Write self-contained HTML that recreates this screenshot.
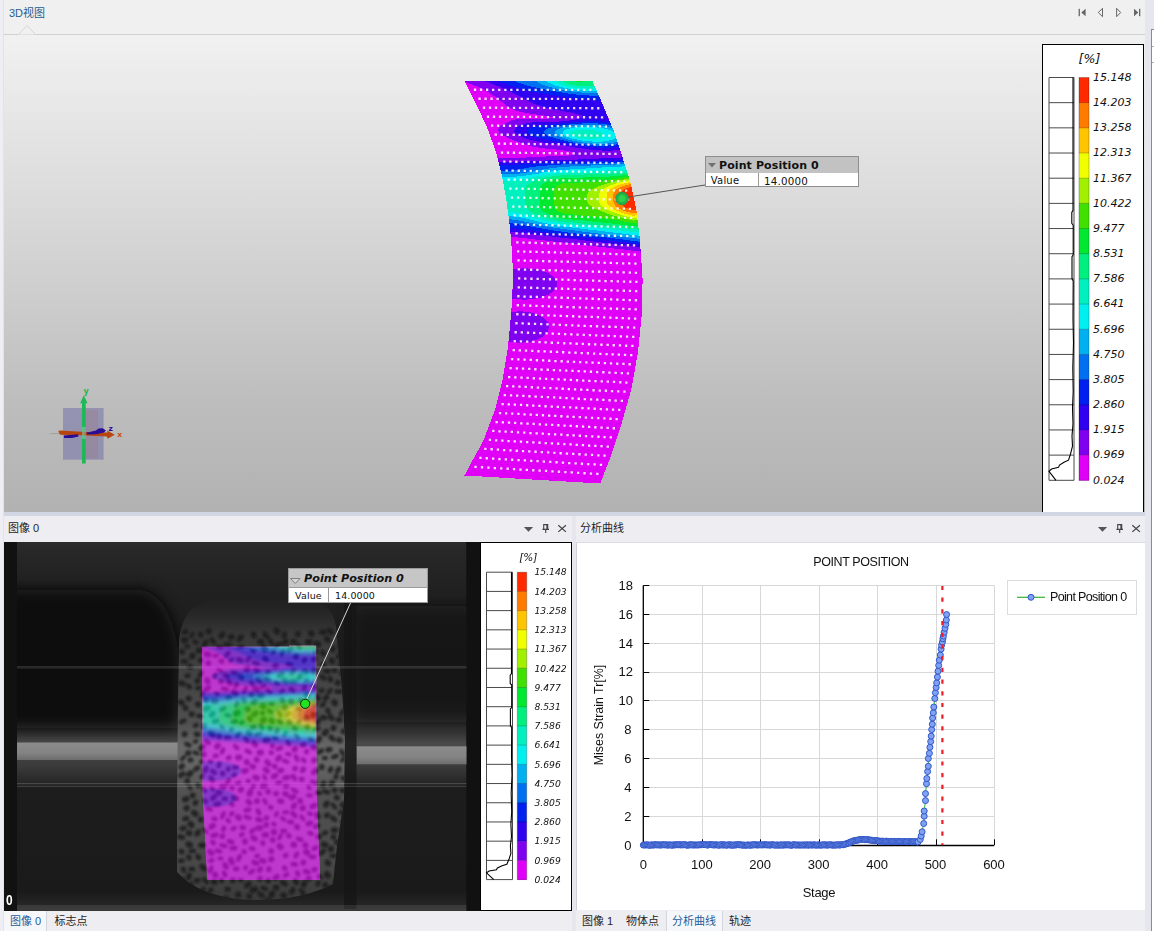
<!DOCTYPE html><html><head><meta charset="utf-8"><title>3D</title><style>

html,body{margin:0;padding:0;}
body{width:1154px;height:931px;overflow:hidden;background:#f0f0f0;font-family:"Liberation Sans","Noto Sans CJK SC",sans-serif;font-size:12px;color:#1e1e1e;}
#root{position:relative;width:1154px;height:931px;overflow:hidden;background:#f0f0f0;}
.abs{position:absolute;}
.t{position:absolute;white-space:nowrap;line-height:1;}
svg{position:absolute;left:0;top:0;overflow:visible;}
.dv{font-family:"DejaVu Sans","Liberation Sans",sans-serif;}

</style></head><body><div id="root">
<div class="abs" style="left:0;top:0;width:4px;height:931px;background:#eeeef4"></div>
<div class="abs" style="left:3px;top:0;width:1px;height:931px;background:#e2e2ea"></div>
<div class="abs" style="left:1145px;top:0;width:9px;height:931px;background:#e6e6ee"></div>
<div class="abs" style="left:1151px;top:29px;width:3px;height:902px;background:#fff;border-left:1px solid #8a8a92;border-top:1px solid #8a8a92"></div>
<div class="abs" style="left:1152px;top:46px;width:2px;height:1px;background:#aaa"></div><div class="abs" style="left:1152px;top:62px;width:2px;height:1px;background:#aaa"></div>
<div class="t" style="left:9px;top:7.5px;font-size:11px;color:#1f5c8f">3D视图</div>
<div class="abs" style="left:4px;top:34px;width:1141px;height:1px;background:#cfd0d4"></div>
<svg width="1154" height="931" viewBox="0 0 1154 931">
<path d="M18.5,34.5 L27,25.5 L35.5,34.5" fill="#f0f0f0" stroke="#d4d6da" stroke-width="1"/>
<g fill="#666" stroke="none"><rect x="1078.6" y="8.8" width="1.3" height="7.4"/><path d="M1081.3,12.5 L1085.6,8.8 V16.2Z"/><path d="M1134,8.8 L1138.3,12.5 L1134,16.2Z"/><rect x="1139" y="8.8" width="1.3" height="7.4"/></g>
<g fill="none" stroke="#666" stroke-width="1"><path d="M1098.3,12.5 L1102.5,8.3 V16.7Z"/><path d="M1120.7,12.5 L1116.6,8.3 V16.7Z"/></g>
</svg>
<div class="abs" style="left:4px;top:35px;width:1141px;height:477px;background:linear-gradient(#f1f1f1,#dcdcdc 33%,#cdcdcd 55%,#bdbdbd 77%,#b2b2b2)"></div>
<div class="abs" style="left:4px;top:512px;width:1141px;height:4px;background:#d2d5e2"></div>
<svg width="1154" height="931" viewBox="0 0 1154 931">
<g shape-rendering="crispEdges">
<path d="M464.4,80.8L478.3,108.3L488.5,130.9L496.4,153.5L502.0,176.0L506.5,200.8L510.0,228.0L512.3,255.0L513.0,280.0L511.2,313.8L507.9,347.6L502.7,378.8L494.9,410.0L483.2,441.2L470.2,464.6L464.5,475.5L600.2,483.5L610.6,456.8L621.0,425.6L631.4,389.2L637.9,352.8L641.8,313.8L642.6,280.0L641.6,264.0L639.6,236.9L636.3,209.9L630.6,182.8L622.7,158.0L613.7,130.9L602.4,103.8L592.3,80.8Z" fill="#e000f8"/>
<path d="M466.3,80.8L468.1,80.8L470.0,80.8L471.8,80.8L473.7,80.8L475.5,80.8L477.4,80.8L479.2,80.8L481.1,80.8L482.9,80.8L484.8,80.8L484.8,80.8L487.1,81.8L489.1,82.6L489.5,82.8L491.8,83.7L493.5,84.4L494.1,84.7L496.4,85.6L498.0,86.2L498.7,86.5L501.0,87.5L502.4,88.0L503.4,88.5L505.7,89.5L506.6,89.9L508.1,90.6L510.4,91.6L510.5,91.7L512.9,92.9L514.2,93.5L515.3,94.1L517.6,95.3L517.8,95.4L520.3,96.8L520.9,97.1L522.8,98.3L524.1,99.0L525.3,99.6L527.5,100.8L527.7,100.9L530.1,102.1L531.4,102.6L532.5,103.1L534.7,104.0L535.9,104.5L536.9,104.8L539.1,105.6L541.2,106.3L541.3,106.3L543.4,106.9L545.5,107.5L547.5,108.0L547.9,108.1L549.6,108.5L551.6,109.0L553.6,109.4L555.6,109.8L556.5,110.0L557.6,110.2L559.6,110.5L561.6,110.9L563.5,111.2L565.5,111.6L566.8,111.9L567.5,112.0L569.5,112.3L571.4,112.6L573.4,113.0L575.4,113.5L576.7,113.7L577.5,113.9L579.5,114.5L581.7,115.3L582.3,115.6L582.1,116.4L582.1,117.4L580.9,117.7L579.3,118.3L577.8,119.0L577.3,119.2L576.1,119.4L574.4,119.7L572.7,119.9L571.0,120.2L569.3,120.5L567.6,120.8L566.3,121.0L565.9,121.0L564.1,121.2L562.4,121.3L560.6,121.4L558.8,121.5L557.1,121.6L555.3,121.7L553.5,121.8L551.7,121.9L549.9,121.9L548.1,122.0L546.3,122.0L544.5,122.0L542.7,122.0L540.9,122.1L539.1,122.1L537.3,122.2L535.5,122.2L533.7,122.4L532.0,122.5L531.4,122.6L530.3,122.7L528.5,123.0L526.9,123.3L525.2,123.6L523.6,124.1L522.9,124.3L522.0,124.6L520.4,125.2L518.9,125.9L518.5,126.1L517.5,126.7L516.1,127.6L515.7,127.9L514.9,129.0L514.4,129.7L514.5,131.5L515.8,133.3L516.8,134.0L518.3,135.1L519.1,135.5L521.3,136.6L522.1,137.0L523.4,137.5L525.5,138.3L527.0,138.8L527.6,139.0L529.6,139.6L531.6,140.2L533.6,140.7L533.6,140.7L535.6,141.2L537.5,141.6L539.5,142.0L541.4,142.3L543.1,142.6L543.3,142.6L545.2,142.9L547.1,143.2L549.0,143.5L550.9,143.7L552.8,144.0L554.7,144.2L556.6,144.5L557.1,144.5L558.5,144.8L560.4,145.1L562.4,145.4L564.3,145.7L566.2,146.0L568.1,146.3L569.6,146.5L570.0,146.6L571.9,146.9L573.9,147.2L575.8,147.6L577.7,147.9L579.6,148.1L581.5,148.4L581.8,148.4L583.4,148.7L585.3,149.0L587.2,149.3L589.1,149.5L591.0,149.7L592.9,149.9L594.7,150.1L596.6,150.2L598.4,150.3L600.3,150.4L602.1,150.5L602.2,150.5L603.9,150.5L605.8,150.6L607.6,150.6L609.4,150.6L610.1,150.6L611.2,150.5L613.0,150.5L614.8,150.4L616.5,150.3L618.3,150.2L620.1,150.1L620.3,150.7L620.9,152.5L621.5,154.4L622.1,156.2L622.5,157.4L620.7,157.5L619.0,157.6L617.2,157.7L615.4,157.9L614.5,157.9L613.6,158.0L611.8,158.0L610.0,158.1L608.2,158.1L606.5,158.2L604.7,158.3L602.9,158.4L601.1,158.4L599.3,158.5L597.5,158.6L595.7,158.7L593.9,158.8L592.1,158.9L590.3,158.9L588.6,159.0L586.8,159.1L585.0,159.2L583.2,159.3L582.2,159.4L581.4,159.4L579.6,159.4L577.8,159.5L576.0,159.5L574.2,159.6L572.4,159.6L570.6,159.7L568.8,159.7L567.0,159.8L565.2,159.8L563.4,159.9L561.6,159.9L559.8,160.0L558.0,160.0L556.2,160.1L554.4,160.1L552.6,160.2L550.8,160.3L549.0,160.3L547.2,160.4L545.4,160.5L543.6,160.6L542.0,160.7L541.8,160.7L540.0,160.7L538.2,160.8L536.4,160.9L534.6,161.0L532.8,161.1L531.0,161.1L529.2,161.2L527.4,161.3L525.6,161.4L523.8,161.4L522.0,161.5L520.2,161.6L518.4,161.6L516.6,161.7L514.8,161.7L513.0,161.8L511.2,161.8L509.4,161.8L507.6,161.8L505.8,161.9L503.9,161.9L502.1,161.9L500.6,161.9L500.3,161.9L498.5,161.9L498.5,161.9L498.0,160.1L497.6,158.4L499.4,158.4L501.2,158.4L503.1,158.4L503.4,158.4L504.9,158.3L506.7,158.3L508.5,158.3L510.3,158.2L512.1,158.2L513.9,158.1L515.7,158.0L517.5,158.0L519.3,157.9L521.1,157.8L522.9,157.7L524.6,157.6L526.4,157.5L528.2,157.4L530.0,157.3L531.8,157.2L533.6,157.1L535.4,157.0L536.8,157.0L537.2,157.0L539.0,156.8L540.7,156.7L542.5,156.6L544.3,156.6L546.1,156.5L547.9,156.4L549.7,156.4L551.5,156.3L553.3,156.2L555.1,156.2L556.9,156.1L558.7,156.1L560.5,156.0L562.3,155.9L564.0,155.8L565.8,155.7L567.6,155.6L568.6,155.6L569.3,155.4L571.0,155.1L572.7,154.7L574.4,154.2L575.6,153.8L574.0,153.0L572.2,152.0L571.8,151.9L569.9,151.5L568.0,151.2L566.0,150.8L564.1,150.5L562.2,150.2L561.1,150.0L560.3,149.9L558.4,149.7L556.5,149.6L554.7,149.4L552.8,149.2L550.9,149.0L549.1,148.9L547.2,148.7L545.3,148.5L543.4,148.2L541.5,148.0L541.5,148.0L539.6,147.8L537.7,147.5L535.8,147.2L533.9,146.8L531.9,146.4L530.8,146.1L529.9,145.9L527.9,145.3L525.9,144.7L524.4,144.2L523.9,144.0L521.8,143.3L519.7,142.5L519.2,142.3L517.7,141.8L515.6,141.0L514.3,140.5L513.5,140.2L511.4,139.4L509.7,138.6L509.3,138.5L507.1,137.5L505.6,136.8L504.9,136.5L502.7,135.2L502.3,135.0L500.3,133.4L499.9,133.2L498.5,131.3L498.2,129.5L498.5,128.8L498.9,127.7L499.5,127.1L500.7,126.0L500.8,125.9L502.2,124.9L503.4,124.2L503.6,124.1L505.1,123.3L506.6,122.6L506.9,122.4L508.0,121.8L509.6,121.2L511.1,120.6L511.1,120.6L512.7,120.1L514.4,119.7L516.0,119.3L517.8,119.1L519.5,118.9L520.0,118.9L521.2,118.8L523.0,118.7L524.8,118.6L526.6,118.5L528.4,118.5L530.2,118.5L532.1,118.5L533.9,118.5L535.7,118.5L537.5,118.6L539.4,118.6L541.2,118.6L543.0,118.6L544.8,118.6L546.6,118.6L548.4,118.5L550.2,118.3L551.8,117.9L553.4,117.4L553.8,117.3L553.3,117.2L551.4,116.8L549.4,116.5L547.4,116.1L545.4,115.8L543.7,115.4L543.4,115.4L541.5,115.1L539.6,114.9L537.7,114.7L535.7,114.4L533.8,114.2L531.9,113.9L529.9,113.6L529.5,113.5L527.9,113.3L526.0,112.9L524.0,112.6L522.0,112.2L520.0,111.8L519.1,111.6L518.0,111.3L515.9,110.7L513.7,110.0L513.1,109.8L511.4,108.9L509.6,108.0L508.9,107.5L507.1,106.2L506.0,105.3L504.9,104.3L503.0,102.8L502.6,102.5L500.3,100.7L500.0,100.5L497.9,98.9L497.1,98.3L495.5,97.1L494.2,96.2L493.0,95.3L491.4,94.2L490.3,93.5L488.7,92.4L487.5,91.6L486.1,90.9L484.2,89.8L483.6,89.5L481.1,88.3L480.5,88.0L478.8,87.3L476.4,86.2L476.4,86.2L474.1,85.4L471.8,84.4L471.8,84.4L469.5,83.5L467.2,82.6L467.2,82.6L464.9,81.7L464.4,80.8ZM512.2,231.7L514.1,231.9L516.0,232.2L517.8,232.4L517.8,232.4L519.7,232.6L521.6,232.8L523.5,233.1L525.4,233.3L527.3,233.5L529.2,233.7L531.0,234.0L532.9,234.2L534.8,234.4L536.7,234.6L536.9,234.6L538.6,234.8L540.5,235.1L542.4,235.3L544.3,235.6L546.1,235.8L548.0,236.0L549.9,236.2L551.8,236.5L553.7,236.7L555.5,236.9L555.6,236.9L557.5,237.1L559.3,237.4L561.2,237.6L563.1,237.8L565.0,238.1L566.9,238.3L568.8,238.5L570.6,238.7L572.5,239.0L574.4,239.2L574.4,239.2L576.3,239.4L578.2,239.7L580.1,239.9L582.0,240.1L583.8,240.3L585.7,240.6L587.6,240.8L589.5,241.0L591.4,241.2L593.3,241.4L593.3,241.5L595.1,241.7L597.0,241.9L598.9,242.2L600.8,242.4L602.7,242.6L604.6,242.9L606.5,243.1L608.3,243.3L610.2,243.5L612.1,243.7L612.2,243.8L614.0,244.0L615.9,244.2L617.8,244.5L619.6,244.7L621.5,244.9L623.4,245.2L625.3,245.4L627.2,245.6L629.1,245.8L630.9,246.0L631.1,246.1L632.8,246.3L634.7,246.5L636.6,246.8L638.5,247.0L640.4,247.2L640.4,248.1L640.6,250.0L640.7,251.6L638.8,251.4L636.9,251.2L635.0,251.0L633.2,250.7L631.3,250.5L629.4,250.3L627.5,250.0L625.6,249.8L623.7,249.5L623.7,249.5L621.9,249.3L620.0,249.1L618.1,248.9L616.2,248.7L614.3,248.5L612.5,248.3L610.6,248.1L608.7,247.9L606.8,247.6L604.9,247.4L603.5,247.2L603.0,247.1L601.2,246.9L599.3,246.7L597.4,246.5L595.5,246.3L593.6,246.1L591.7,245.9L589.9,245.7L588.0,245.5L586.1,245.2L584.2,245.0L583.2,244.8L582.3,244.7L580.4,244.6L578.6,244.4L576.7,244.2L574.8,244.0L572.9,243.7L571.0,243.5L569.1,243.3L567.3,243.1L565.4,242.8L563.5,242.6L562.8,242.5L561.6,242.4L559.7,242.2L557.8,242.0L556.0,241.8L554.1,241.6L552.2,241.4L550.3,241.2L548.4,240.9L546.5,240.7L544.7,240.5L542.8,240.2L542.3,240.2L540.9,240.0L539.0,239.8L537.1,239.7L535.2,239.5L533.4,239.2L531.5,239.0L529.6,238.8L527.7,238.6L525.8,238.4L523.9,238.1L522.0,237.9L521.8,237.9L520.2,237.7L518.3,237.5L516.4,237.3L514.5,237.1L512.6,236.9L510.7,236.7L510.7,235.8L510.5,234.0L510.4,232.2L510.3,231.5ZM522.0,268.4L523.9,268.4L525.8,268.4L527.7,268.5L529.5,268.6L531.0,268.8L531.4,268.8L533.3,269.0L535.2,269.3L537.1,269.7L539.0,270.1L540.9,270.6L542.1,270.9L542.8,271.1L544.7,271.8L546.6,272.5L547.3,272.9L548.5,273.4L550.4,274.5L550.9,274.8L552.3,275.8L553.5,276.7L554.2,277.5L555.3,278.5L556.2,279.9L556.5,280.4L557.2,282.2L557.4,284.1L557.1,285.9L556.4,287.7L555.9,288.6L555.3,289.4L553.9,290.9L553.6,291.2L551.9,292.5L551.3,292.9L550.0,293.8L548.3,294.7L548.0,294.8L546.1,295.6L544.3,296.3L544.2,296.4L542.3,297.0L540.4,297.6L538.7,298.0L538.5,298.0L536.6,298.4L534.7,298.8L532.8,299.0L530.9,299.2L529.0,299.4L528.4,299.4L527.1,299.5L525.2,299.6L523.3,299.6L521.4,299.5L519.5,299.4L517.6,299.3L515.8,299.1L514.9,299.0L513.9,298.8L512.0,298.5L512.1,297.1L512.2,295.3L512.3,293.5L512.4,291.7L512.5,289.9L512.6,288.1L512.7,286.3L512.8,284.5L512.9,282.7L513.0,280.9L513.0,279.1L512.9,277.2L512.9,275.4L512.8,273.6L512.8,271.8L512.7,270.0L512.7,269.3L514.6,269.1L516.4,268.8L518.3,268.7L520.2,268.5L521.2,268.5ZM517.0,311.5L518.9,311.4L520.8,311.4L522.7,311.5L524.6,311.6L526.4,311.8L528.3,312.1L528.5,312.1L530.2,312.4L532.0,312.8L533.9,313.3L535.8,313.9L536.5,314.2L537.6,314.6L539.4,315.5L540.8,316.2L541.2,316.4L543.0,317.6L543.7,318.1L544.8,319.0L545.8,320.0L546.5,320.8L547.3,321.9L548.1,323.4L548.3,323.7L548.8,325.6L548.9,327.4L548.6,329.2L548.0,331.0L547.2,332.2L546.9,332.8L545.3,334.5L545.1,334.7L543.2,336.3L543.0,336.4L541.0,337.7L540.5,338.0L539.0,338.7L537.1,339.6L536.9,339.7L535.1,340.3L533.1,340.9L531.6,341.3L531.2,341.4L529.3,341.8L527.4,342.1L525.4,342.3L523.5,342.5L521.6,342.5L519.7,342.6L518.8,342.6L517.9,342.5L516.9,342.5L516.0,342.4L514.1,342.2L512.2,342.0L510.4,341.7L508.5,341.3L508.6,340.3L508.8,338.5L509.0,336.7L509.1,334.9L509.3,333.1L509.5,331.3L509.7,329.5L509.8,327.7L510.0,325.9L510.2,324.1L510.4,322.3L510.5,320.5L510.7,318.7L510.9,316.9L511.1,315.1L511.2,313.3L511.3,312.2L513.2,311.9L515.1,311.7L515.3,311.6Z" fill="#8000f0"/>
<path d="M486.6,80.8L488.5,80.8L490.4,80.8L492.2,80.8L494.1,80.8L495.9,80.8L497.8,80.8L498.7,80.8L499.9,81.3L502.3,82.5L502.5,82.6L504.6,83.5L506.9,84.4L507.0,84.4L509.2,85.2L511.4,86.0L512.1,86.2L513.6,86.7L515.8,87.4L517.9,88.0L518.0,88.1L520.1,88.6L522.2,89.2L524.2,89.7L525.1,89.9L526.3,90.2L528.4,90.7L530.5,91.1L532.5,91.5L533.5,91.7L534.5,91.9L536.6,92.4L538.6,92.7L540.6,93.1L542.6,93.4L543.6,93.6L544.6,93.8L546.6,94.1L548.6,94.5L550.6,94.8L552.6,95.1L554.5,95.3L555.2,95.4L556.5,95.6L558.5,96.0L560.5,96.3L562.4,96.5L564.4,96.8L566.3,97.0L568.3,97.2L568.5,97.3L570.2,97.5L572.2,97.8L574.1,98.0L576.1,98.3L578.0,98.5L579.9,98.6L581.8,98.8L583.7,98.9L585.6,99.1L586.8,99.1L587.5,99.2L589.4,99.4L591.3,99.5L593.2,99.6L595.1,99.6L596.9,99.7L598.8,99.7L600.6,99.7L601.2,101.0L602.0,102.9L602.8,104.7L603.5,106.5L604.3,108.4L605.1,110.2L605.8,112.1L606.6,113.9L607.4,115.7L608.1,117.6L608.9,119.4L609.7,121.3L610.3,122.7L608.3,122.4L606.4,122.1L604.5,121.8L602.6,121.6L600.7,121.5L598.8,121.3L596.9,121.3L595.1,121.2L593.3,121.2L591.5,121.2L589.6,121.2L587.8,121.3L586.1,121.3L584.3,121.4L582.5,121.5L580.7,121.7L579.0,121.8L577.2,122.0L575.5,122.1L573.7,122.3L572.0,122.5L570.2,122.7L568.7,122.8L568.5,122.8L566.8,123.0L565.0,123.2L563.3,123.3L561.5,123.5L559.8,123.7L558.0,123.9L556.3,124.0L554.5,124.2L552.8,124.4L551.3,124.5L551.1,124.5L549.3,124.7L547.6,124.9L545.8,125.1L544.1,125.2L542.4,125.4L540.6,125.6L538.9,125.8L537.2,126.1L536.4,126.2L535.5,126.4L533.9,126.8L532.3,127.2L530.7,127.8L530.0,128.0L529.2,128.5L527.8,129.5L527.4,129.8L526.9,131.6L528.2,133.4L529.6,134.2L531.2,135.2L531.8,135.5L533.9,136.3L535.9,137.0L536.2,137.1L537.9,137.5L539.9,138.0L541.9,138.5L543.9,138.9L544.1,139.0L545.8,139.3L547.7,139.7L549.7,140.0L551.6,140.4L553.5,140.8L554.2,140.9L555.5,141.1L557.4,141.5L559.4,141.9L561.3,142.3L563.2,142.6L564.1,142.8L565.2,143.0L567.1,143.4L569.1,143.8L571.0,144.2L572.9,144.5L574.2,144.7L574.9,144.8L576.8,145.2L578.7,145.5L580.6,145.8L582.5,146.1L584.4,146.4L586.3,146.6L587.0,146.7L588.2,146.8L590.1,147.0L592.0,147.2L593.8,147.4L595.7,147.5L597.5,147.6L599.4,147.7L601.2,147.8L603.0,147.8L604.8,147.8L606.6,147.7L608.4,147.7L610.2,147.6L612.0,147.5L613.7,147.3L615.5,147.1L616.4,147.0L617.2,146.9L618.9,146.6L619.0,147.0L619.7,148.8L620.1,150.1L618.3,150.2L616.5,150.3L614.8,150.4L613.0,150.5L611.2,150.5L610.1,150.6L609.4,150.6L607.6,150.6L605.8,150.6L603.9,150.5L602.2,150.5L602.1,150.5L600.3,150.4L598.4,150.3L596.6,150.2L594.7,150.1L592.9,149.9L591.0,149.7L589.1,149.5L587.2,149.3L585.3,149.0L583.4,148.7L581.8,148.4L581.5,148.4L579.6,148.1L577.7,147.9L575.8,147.6L573.9,147.2L571.9,146.9L570.0,146.6L569.6,146.5L568.1,146.3L566.2,146.0L564.3,145.7L562.4,145.4L560.4,145.1L558.5,144.8L557.1,144.5L556.6,144.5L554.7,144.2L552.8,144.0L550.9,143.7L549.0,143.5L547.1,143.2L545.2,142.9L543.3,142.6L543.1,142.6L541.4,142.3L539.5,142.0L537.5,141.6L535.6,141.2L533.6,140.7L533.6,140.7L531.6,140.2L529.6,139.6L527.6,139.0L527.0,138.8L525.5,138.3L523.4,137.5L522.1,137.0L521.3,136.6L519.1,135.5L518.3,135.1L516.8,134.0L515.8,133.3L514.5,131.5L514.4,129.7L514.9,129.0L515.7,127.9L516.1,127.6L517.5,126.7L518.5,126.1L518.9,125.9L520.4,125.2L522.0,124.6L522.9,124.3L523.6,124.1L525.2,123.6L526.9,123.3L528.5,123.0L530.3,122.7L531.4,122.6L532.0,122.5L533.7,122.4L535.5,122.2L537.3,122.2L539.1,122.1L540.9,122.1L542.7,122.0L544.5,122.0L546.3,122.0L548.1,122.0L549.9,121.9L551.7,121.9L553.5,121.8L555.3,121.7L557.1,121.6L558.8,121.5L560.6,121.4L562.4,121.3L564.1,121.2L565.9,121.0L566.3,121.0L567.6,120.8L569.3,120.5L571.0,120.2L572.7,119.9L574.4,119.7L576.1,119.4L577.3,119.2L577.8,119.0L579.3,118.3L580.9,117.7L582.1,117.4L582.1,116.4L582.3,115.6L581.7,115.3L579.5,114.5L577.5,113.9L576.7,113.7L575.4,113.5L573.4,113.0L571.4,112.6L569.5,112.3L567.5,112.0L566.8,111.9L565.5,111.6L563.5,111.2L561.6,110.9L559.6,110.5L557.6,110.2L556.5,110.0L555.6,109.8L553.6,109.4L551.6,109.0L549.6,108.5L547.9,108.1L547.5,108.0L545.5,107.5L543.4,106.9L541.3,106.3L541.2,106.3L539.1,105.6L536.9,104.8L535.9,104.5L534.7,104.0L532.5,103.1L531.4,102.6L530.1,102.1L527.7,100.9L527.5,100.8L525.3,99.6L524.1,99.0L522.8,98.3L520.9,97.1L520.3,96.8L517.8,95.4L517.6,95.3L515.3,94.1L514.2,93.5L512.9,92.9L510.5,91.7L510.4,91.6L508.1,90.6L506.6,89.9L505.7,89.5L503.4,88.5L502.4,88.0L501.0,87.5L498.7,86.5L498.0,86.2L496.4,85.6L494.1,84.7L493.5,84.4L491.8,83.7L489.5,82.8L489.1,82.6L487.1,81.8L484.8,80.8ZM615.4,157.9L617.2,157.7L619.0,157.6L620.7,157.5L622.5,157.4L622.7,158.0L623.3,159.9L623.4,160.3L621.6,160.3L619.8,160.4L618.0,160.5L616.2,160.5L614.4,160.6L612.6,160.6L610.9,160.7L609.1,160.8L607.3,160.8L605.5,160.9L603.7,161.0L601.9,161.0L600.1,161.1L598.3,161.2L596.5,161.2L594.7,161.3L594.0,161.3L592.9,161.4L591.1,161.4L589.3,161.5L587.5,161.5L585.7,161.6L583.9,161.6L582.1,161.7L580.3,161.7L578.5,161.8L576.7,161.9L574.9,161.9L573.1,162.0L571.3,162.0L569.5,162.1L567.7,162.1L565.9,162.2L564.1,162.2L562.3,162.3L560.5,162.4L558.7,162.4L556.9,162.5L555.1,162.6L554.1,162.6L553.3,162.7L551.5,162.7L549.7,162.8L547.9,162.9L546.1,163.0L544.3,163.1L542.5,163.2L540.7,163.3L538.9,163.4L537.1,163.5L535.3,163.6L533.5,163.7L531.7,163.8L529.9,163.9L528.2,164.0L526.4,164.1L526.2,164.1L524.6,164.2L522.8,164.3L521.0,164.4L519.2,164.4L517.4,164.5L515.6,164.6L513.8,164.7L512.0,164.7L510.1,164.8L508.3,164.8L506.5,164.9L504.7,164.9L502.9,165.0L501.1,165.0L499.3,165.1L498.9,163.7L498.5,161.9L500.3,161.9L500.6,161.9L502.1,161.9L503.9,161.9L505.8,161.9L507.6,161.8L509.4,161.8L511.2,161.8L513.0,161.8L514.8,161.7L516.6,161.7L518.4,161.6L520.2,161.6L522.0,161.5L523.8,161.4L525.6,161.4L527.4,161.3L529.2,161.2L531.0,161.1L532.8,161.1L534.6,161.0L536.4,160.9L538.2,160.8L540.0,160.7L541.8,160.7L542.0,160.7L543.6,160.6L545.4,160.5L547.2,160.4L549.0,160.3L550.8,160.3L552.6,160.2L554.4,160.1L556.2,160.1L558.0,160.0L559.8,160.0L561.6,159.9L563.4,159.9L565.2,159.8L567.0,159.8L568.8,159.7L570.6,159.7L572.4,159.6L574.2,159.6L576.0,159.5L577.8,159.5L579.6,159.4L581.4,159.4L582.2,159.4L583.2,159.3L585.0,159.2L586.8,159.1L588.6,159.0L590.3,158.9L592.1,158.9L593.9,158.8L595.7,158.7L597.5,158.6L599.3,158.5L601.1,158.4L602.9,158.4L604.7,158.3L606.5,158.2L608.2,158.1L610.0,158.1L611.8,158.0L613.6,158.0L614.5,157.9ZM511.8,227.7L513.7,228.0L515.6,228.2L517.5,228.4L519.4,228.7L520.3,228.8L521.3,229.0L523.2,229.2L525.0,229.5L526.9,229.7L528.8,230.0L530.7,230.2L532.6,230.5L534.5,230.8L536.1,231.0L536.4,231.0L538.3,231.3L540.2,231.6L542.0,231.8L543.9,232.1L545.8,232.3L547.7,232.6L549.6,232.9L551.5,233.1L551.9,233.2L553.4,233.4L555.3,233.6L557.2,233.9L559.1,234.1L561.0,234.4L562.8,234.6L564.7,234.9L566.6,235.1L568.5,235.4L568.9,235.4L570.4,235.6L572.3,235.8L574.2,236.1L576.1,236.3L577.9,236.6L579.8,236.8L581.7,237.0L583.6,237.3L585.5,237.5L586.7,237.6L587.4,237.7L589.3,238.0L591.1,238.2L593.0,238.5L594.9,238.7L596.8,238.9L598.7,239.2L600.6,239.4L602.5,239.6L604.3,239.9L604.7,239.9L606.2,240.1L608.1,240.3L610.0,240.6L611.9,240.8L613.8,241.1L615.7,241.3L617.5,241.5L619.4,241.8L621.3,242.0L622.9,242.2L623.2,242.2L625.1,242.5L627.0,242.7L628.8,242.9L630.7,243.2L632.6,243.4L634.5,243.6L636.4,243.9L638.3,244.1L640.1,244.3L640.2,244.5L640.3,246.3L640.4,247.2L638.5,247.0L636.6,246.8L634.7,246.5L632.8,246.3L631.1,246.1L630.9,246.0L629.1,245.8L627.2,245.6L625.3,245.4L623.4,245.2L621.5,244.9L619.6,244.7L617.8,244.5L615.9,244.2L614.0,244.0L612.2,243.8L612.1,243.7L610.2,243.5L608.3,243.3L606.5,243.1L604.6,242.9L602.7,242.6L600.8,242.4L598.9,242.2L597.0,241.9L595.1,241.7L593.3,241.5L593.3,241.4L591.4,241.2L589.5,241.0L587.6,240.8L585.7,240.6L583.8,240.3L582.0,240.1L580.1,239.9L578.2,239.7L576.3,239.4L574.4,239.2L574.4,239.2L572.5,239.0L570.6,238.7L568.8,238.5L566.9,238.3L565.0,238.1L563.1,237.8L561.2,237.6L559.3,237.4L557.5,237.1L555.6,236.9L555.5,236.9L553.7,236.7L551.8,236.5L549.9,236.2L548.0,236.0L546.1,235.8L544.3,235.6L542.4,235.3L540.5,235.1L538.6,234.8L536.9,234.6L536.7,234.6L534.8,234.4L532.9,234.2L531.0,234.0L529.2,233.7L527.3,233.5L525.4,233.3L523.5,233.1L521.6,232.8L519.7,232.6L517.8,232.4L517.8,232.4L516.0,232.2L514.1,231.9L512.2,231.7L510.3,231.5L510.2,230.4L510.1,228.6L509.9,227.5Z" fill="#3000f0"/>
<path d="M499.6,80.8L501.5,80.8L503.3,80.8L505.2,80.8L507.0,80.8L508.9,80.8L510.7,80.8L512.6,80.8L514.4,80.8L514.7,80.8L516.8,81.9L518.2,82.6L519.2,83.0L521.4,83.8L523.3,84.4L523.6,84.5L525.8,85.1L527.9,85.7L530.0,86.2L530.1,86.3L532.1,86.7L534.1,87.2L536.2,87.6L538.2,88.1L538.3,88.1L540.3,88.5L542.3,88.9L544.4,89.3L546.4,89.7L547.4,89.9L548.4,90.1L550.5,90.5L552.5,90.9L554.5,91.2L556.5,91.6L557.6,91.8L558.5,91.9L560.5,92.3L562.5,92.6L564.5,92.9L566.4,93.2L568.4,93.5L569.7,93.6L570.4,93.7L572.3,94.0L574.3,94.2L576.2,94.5L578.2,94.7L580.1,94.9L582.0,95.0L583.9,95.2L585.8,95.3L587.7,95.4L589.5,95.5L589.6,95.5L591.4,95.6L593.3,95.6L595.1,95.6L597.0,95.6L598.8,95.6L599.6,97.3L600.4,99.2L600.6,99.7L598.8,99.7L596.9,99.7L595.1,99.6L593.2,99.6L591.3,99.5L589.4,99.4L587.5,99.2L586.8,99.1L585.6,99.1L583.7,98.9L581.8,98.8L579.9,98.6L578.0,98.5L576.1,98.3L574.1,98.0L572.2,97.8L570.2,97.5L568.5,97.3L568.3,97.2L566.3,97.0L564.4,96.8L562.4,96.5L560.5,96.3L558.5,96.0L556.5,95.6L555.2,95.4L554.5,95.3L552.6,95.1L550.6,94.8L548.6,94.5L546.6,94.1L544.6,93.8L543.6,93.6L542.6,93.4L540.6,93.1L538.6,92.7L536.6,92.4L534.5,91.9L533.5,91.7L532.5,91.5L530.5,91.1L528.4,90.7L526.3,90.2L525.1,89.9L524.2,89.7L522.2,89.2L520.1,88.6L518.0,88.1L517.9,88.0L515.8,87.4L513.6,86.7L512.1,86.2L511.4,86.0L509.2,85.2L507.0,84.4L506.9,84.4L504.6,83.5L502.5,82.6L502.3,82.5L499.9,81.3L498.7,80.8ZM570.2,122.7L572.0,122.5L573.7,122.3L575.5,122.1L577.2,122.0L579.0,121.8L580.7,121.7L582.5,121.5L584.3,121.4L586.1,121.3L587.8,121.3L589.6,121.2L591.5,121.2L593.3,121.2L595.1,121.2L596.9,121.3L598.8,121.3L600.7,121.5L602.6,121.6L604.5,121.8L606.4,122.1L608.3,122.4L610.3,122.7L610.4,123.1L611.2,124.9L611.4,125.5L609.4,125.1L608.7,124.9L607.5,124.7L605.5,124.3L603.6,124.1L601.7,123.8L599.8,123.7L597.9,123.5L596.0,123.4L594.2,123.3L592.3,123.3L590.5,123.2L588.7,123.3L586.9,123.3L585.1,123.3L583.3,123.4L581.5,123.5L579.7,123.6L578.0,123.7L576.2,123.9L574.5,124.0L572.7,124.2L571.0,124.4L569.2,124.5L568.5,124.6L567.5,124.8L565.8,125.0L564.1,125.2L562.4,125.5L560.7,125.7L559.0,126.0L557.3,126.3L556.9,126.4L555.6,126.6L553.9,127.0L552.3,127.4L550.7,127.8L549.4,128.1L549.0,128.3L547.5,128.9L546.0,129.6L545.2,129.9L544.6,130.7L543.9,131.7L544.6,133.5L546.0,134.5L547.1,135.4L548.2,135.8L550.3,136.6L551.7,137.2L552.4,137.4L554.4,138.0L556.4,138.6L558.1,139.1L558.4,139.2L560.4,139.7L562.4,140.2L564.4,140.7L565.8,141.0L566.4,141.1L568.3,141.6L570.3,142.0L572.2,142.4L574.2,142.7L574.9,142.9L576.1,143.1L578.0,143.5L579.9,143.8L581.9,144.1L583.8,144.4L585.7,144.6L587.5,144.8L587.6,144.8L589.4,145.1L591.3,145.2L593.2,145.4L595.0,145.5L596.9,145.6L598.7,145.7L600.5,145.7L602.3,145.7L604.1,145.7L605.9,145.6L607.7,145.5L609.5,145.4L611.2,145.2L612.5,145.1L613.0,145.0L614.7,144.8L616.4,144.5L618.1,144.1L618.4,145.2L618.9,146.6L617.2,146.9L616.4,147.0L615.5,147.1L613.7,147.3L612.0,147.5L610.2,147.6L608.4,147.7L606.6,147.7L604.8,147.8L603.0,147.8L601.2,147.8L599.4,147.7L597.5,147.6L595.7,147.5L593.8,147.4L592.0,147.2L590.1,147.0L588.2,146.8L587.0,146.7L586.3,146.6L584.4,146.4L582.5,146.1L580.6,145.8L578.7,145.5L576.8,145.2L574.9,144.8L574.2,144.7L572.9,144.5L571.0,144.2L569.1,143.8L567.1,143.4L565.2,143.0L564.1,142.8L563.2,142.6L561.3,142.3L559.4,141.9L557.4,141.5L555.5,141.1L554.2,140.9L553.5,140.8L551.6,140.4L549.7,140.0L547.7,139.7L545.8,139.3L544.1,139.0L543.9,138.9L541.9,138.5L539.9,138.0L537.9,137.5L536.2,137.1L535.9,137.0L533.9,136.3L531.8,135.5L531.2,135.2L529.6,134.2L528.2,133.4L526.9,131.6L527.4,129.8L527.8,129.5L529.2,128.5L530.0,128.0L530.7,127.8L532.3,127.2L533.9,126.8L535.5,126.4L536.4,126.2L537.2,126.1L538.9,125.8L540.6,125.6L542.4,125.4L544.1,125.2L545.8,125.1L547.6,124.9L549.3,124.7L551.1,124.5L551.3,124.5L552.8,124.4L554.5,124.2L556.3,124.0L558.0,123.9L559.8,123.7L561.5,123.5L563.3,123.3L565.0,123.2L566.8,123.0L568.5,122.8L568.7,122.8ZM594.7,161.3L596.5,161.2L598.3,161.2L600.1,161.1L601.9,161.0L603.7,161.0L605.5,160.9L607.3,160.8L609.1,160.8L610.9,160.7L612.6,160.6L614.4,160.6L616.2,160.5L618.0,160.5L619.8,160.4L621.6,160.3L623.4,160.3L623.9,161.7L624.1,162.2L622.3,162.3L620.5,162.4L618.7,162.4L616.9,162.5L615.1,162.5L613.3,162.6L611.5,162.7L609.7,162.7L607.9,162.8L606.1,162.8L604.3,162.9L602.5,163.0L600.7,163.0L598.9,163.1L597.1,163.2L596.4,163.2L595.3,163.2L593.5,163.3L591.7,163.4L589.9,163.4L588.1,163.5L586.3,163.5L584.5,163.6L582.7,163.7L580.9,163.7L579.1,163.8L577.3,163.9L575.5,163.9L573.7,164.0L571.9,164.1L570.1,164.1L568.3,164.2L566.5,164.3L564.7,164.3L562.9,164.4L561.1,164.5L560.3,164.5L559.3,164.6L557.5,164.7L555.7,164.8L553.9,164.9L552.1,165.0L550.3,165.2L548.6,165.3L546.8,165.5L545.0,165.6L543.2,165.8L541.4,165.9L539.8,166.1L539.6,166.1L537.9,166.3L536.1,166.5L534.4,166.8L532.6,167.0L530.8,167.3L529.1,167.5L527.8,167.7L527.3,167.8L525.6,168.1L523.9,168.5L522.1,168.8L520.4,169.2L519.3,169.4L518.7,169.5L516.9,169.7L515.1,170.0L513.4,170.2L511.6,170.4L509.8,170.6L508.0,170.8L506.8,171.0L506.3,171.0L504.5,171.2L502.7,171.3L500.9,171.4L500.7,170.9L500.3,169.1L499.8,167.3L499.4,165.5L499.3,165.1L501.1,165.0L502.9,165.0L504.7,164.9L506.5,164.9L508.3,164.8L510.1,164.8L512.0,164.7L513.8,164.7L515.6,164.6L517.4,164.5L519.2,164.4L521.0,164.4L522.8,164.3L524.6,164.2L526.2,164.1L526.4,164.1L528.2,164.0L529.9,163.9L531.7,163.8L533.5,163.7L535.3,163.6L537.1,163.5L538.9,163.4L540.7,163.3L542.5,163.2L544.3,163.1L546.1,163.0L547.9,162.9L549.7,162.8L551.5,162.7L553.3,162.7L554.1,162.6L555.1,162.6L556.9,162.5L558.7,162.4L560.5,162.4L562.3,162.3L564.1,162.2L565.9,162.2L567.7,162.1L569.5,162.1L571.3,162.0L573.1,162.0L574.9,161.9L576.7,161.9L578.5,161.8L580.3,161.7L582.1,161.7L583.9,161.6L585.7,161.6L587.5,161.5L589.3,161.5L591.1,161.4L592.9,161.4L594.0,161.3ZM510.5,223.2L511.3,223.3L513.2,223.6L515.1,223.8L517.0,224.1L518.9,224.4L520.8,224.8L522.7,225.1L524.0,225.3L524.6,225.4L526.5,225.8L528.4,226.1L530.3,226.4L532.2,226.8L534.1,227.1L535.4,227.4L536.0,227.5L537.9,227.8L539.8,228.2L541.7,228.5L543.6,228.8L545.5,229.1L547.4,229.4L547.5,229.5L549.3,229.8L551.2,230.1L553.1,230.4L555.0,230.7L556.9,230.9L558.8,231.2L560.7,231.5L561.4,231.6L562.6,231.8L564.4,232.0L566.3,232.3L568.2,232.5L570.1,232.8L572.0,233.0L573.9,233.2L575.8,233.5L577.7,233.7L578.2,233.8L579.6,234.0L581.5,234.2L583.3,234.5L585.2,234.7L587.1,234.9L589.0,235.2L590.9,235.4L592.8,235.7L594.7,235.9L595.6,236.0L596.6,236.2L598.5,236.4L600.4,236.7L602.2,236.9L604.1,237.1L606.0,237.4L607.9,237.6L609.8,237.9L611.7,238.1L613.1,238.3L613.6,238.3L615.4,238.6L617.3,238.8L619.2,239.1L621.1,239.3L623.0,239.5L624.9,239.8L626.8,240.0L628.6,240.3L630.5,240.5L630.8,240.6L632.4,240.8L634.3,241.0L636.2,241.2L638.1,241.5L640.0,241.7L640.0,242.6L640.1,244.3L638.3,244.1L636.4,243.9L634.5,243.6L632.6,243.4L630.7,243.2L628.8,242.9L627.0,242.7L625.1,242.5L623.2,242.2L622.9,242.2L621.3,242.0L619.4,241.8L617.5,241.5L615.7,241.3L613.8,241.1L611.9,240.8L610.0,240.6L608.1,240.3L606.2,240.1L604.7,239.9L604.3,239.9L602.5,239.6L600.6,239.4L598.7,239.2L596.8,238.9L594.9,238.7L593.0,238.5L591.1,238.2L589.3,238.0L587.4,237.7L586.7,237.6L585.5,237.5L583.6,237.3L581.7,237.0L579.8,236.8L577.9,236.6L576.1,236.3L574.2,236.1L572.3,235.8L570.4,235.6L568.9,235.4L568.5,235.4L566.6,235.1L564.7,234.9L562.8,234.6L561.0,234.4L559.1,234.1L557.2,233.9L555.3,233.6L553.4,233.4L551.9,233.2L551.5,233.1L549.6,232.9L547.7,232.6L545.8,232.3L543.9,232.1L542.0,231.8L540.2,231.6L538.3,231.3L536.4,231.0L536.1,231.0L534.5,230.8L532.6,230.5L530.7,230.2L528.8,230.0L526.9,229.7L525.0,229.5L523.2,229.2L521.3,229.0L520.3,228.8L519.4,228.7L517.5,228.4L515.6,228.2L513.7,228.0L511.8,227.7L509.9,227.5L509.8,226.8L509.6,225.0L509.4,223.2L509.4,223.1Z" fill="#0020f0"/>
<path d="M516.3,80.8L518.2,80.8L520.0,80.8L521.9,80.8L523.7,80.8L525.6,80.8L527.4,80.8L529.3,80.8L531.1,80.8L533.0,80.8L534.8,80.8L535.7,80.8L537.3,82.0L538.0,82.6L539.8,83.5L541.8,84.4L542.1,84.6L544.3,85.3L546.5,86.0L547.2,86.3L548.7,86.7L550.8,87.2L552.9,87.8L554.2,88.1L555.0,88.3L557.0,88.7L559.1,89.2L561.1,89.6L562.9,89.9L563.1,90.0L565.1,90.4L567.1,90.7L569.1,91.0L571.1,91.3L573.1,91.6L574.7,91.8L575.0,91.8L577.0,92.1L578.9,92.3L580.9,92.5L582.8,92.7L584.7,92.8L586.6,92.9L588.4,93.0L590.3,93.0L592.2,93.1L594.0,93.1L595.8,93.0L597.6,92.9L598.0,93.7L598.8,95.5L598.8,95.6L597.0,95.6L595.1,95.6L593.3,95.6L591.4,95.6L589.6,95.5L589.5,95.5L587.7,95.4L585.8,95.3L583.9,95.2L582.0,95.0L580.1,94.9L578.2,94.7L576.2,94.5L574.3,94.2L572.3,94.0L570.4,93.7L569.7,93.6L568.4,93.5L566.4,93.2L564.5,92.9L562.5,92.6L560.5,92.3L558.5,91.9L557.6,91.8L556.5,91.6L554.5,91.2L552.5,90.9L550.5,90.5L548.4,90.1L547.4,89.9L546.4,89.7L544.4,89.3L542.3,88.9L540.3,88.5L538.3,88.1L538.2,88.1L536.2,87.6L534.1,87.2L532.1,86.7L530.1,86.3L530.0,86.2L527.9,85.7L525.8,85.1L523.6,84.5L523.3,84.4L521.4,83.8L519.2,83.0L518.2,82.6L516.8,81.9L514.7,80.8ZM569.2,124.5L571.0,124.4L572.7,124.2L574.5,124.0L576.2,123.9L578.0,123.7L579.7,123.6L581.5,123.5L583.3,123.4L585.1,123.3L586.9,123.3L588.7,123.3L590.5,123.2L592.3,123.3L594.2,123.3L596.0,123.4L597.9,123.5L599.8,123.7L601.7,123.8L603.6,124.1L605.5,124.3L607.5,124.7L608.7,124.9L609.4,125.1L611.4,125.5L612.0,126.8L612.6,128.2L610.5,127.6L608.5,127.1L607.1,126.7L606.5,126.6L604.5,126.3L602.6,126.0L600.6,125.7L598.7,125.5L596.8,125.3L595.0,125.2L593.1,125.1L591.3,125.1L589.4,125.0L587.6,125.0L585.8,125.1L584.0,125.1L582.2,125.2L580.5,125.3L578.7,125.4L576.9,125.5L575.2,125.7L573.4,125.9L571.7,126.1L570.0,126.3L568.9,126.5L568.3,126.6L566.6,126.9L564.9,127.2L563.3,127.6L561.6,128.0L560.6,128.2L560.0,128.4L558.5,129.1L556.9,129.7L556.4,130.0L555.6,130.9L554.9,131.8L555.2,133.6L557.1,135.5L557.2,135.5L559.4,136.6L560.9,137.3L561.5,137.5L563.5,138.2L565.6,138.8L566.7,139.2L567.6,139.4L569.6,139.9L571.5,140.3L573.5,140.8L574.8,141.1L575.4,141.2L577.4,141.6L579.3,141.9L581.2,142.2L583.1,142.5L585.0,142.8L586.9,143.0L586.9,143.0L588.8,143.2L590.7,143.4L592.5,143.5L594.4,143.7L596.2,143.7L598.1,143.8L599.9,143.8L601.7,143.8L603.5,143.7L605.3,143.6L607.0,143.5L608.8,143.3L609.7,143.2L610.5,143.1L612.2,142.8L613.9,142.5L615.6,142.1L617.2,141.6L617.8,143.3L618.1,144.1L616.4,144.5L614.7,144.8L613.0,145.0L612.5,145.1L611.2,145.2L609.5,145.4L607.7,145.5L605.9,145.6L604.1,145.7L602.3,145.7L600.5,145.7L598.7,145.7L596.9,145.6L595.0,145.5L593.2,145.4L591.3,145.2L589.4,145.1L587.6,144.8L587.5,144.8L585.7,144.6L583.8,144.4L581.9,144.1L579.9,143.8L578.0,143.5L576.1,143.1L574.9,142.9L574.2,142.7L572.2,142.4L570.3,142.0L568.3,141.6L566.4,141.1L565.8,141.0L564.4,140.7L562.4,140.2L560.4,139.7L558.4,139.2L558.1,139.1L556.4,138.6L554.4,138.0L552.4,137.4L551.7,137.2L550.3,136.6L548.2,135.8L547.1,135.4L546.0,134.5L544.6,133.5L543.9,131.7L544.6,130.7L545.2,129.9L546.0,129.6L547.5,128.9L549.0,128.3L549.4,128.1L550.7,127.8L552.3,127.4L553.9,127.0L555.6,126.6L556.9,126.4L557.3,126.3L559.0,126.0L560.7,125.7L562.4,125.5L564.1,125.2L565.8,125.0L567.5,124.8L568.5,124.6ZM597.1,163.2L598.9,163.1L600.7,163.0L602.5,163.0L604.3,162.9L606.1,162.8L607.9,162.8L609.7,162.7L611.5,162.7L613.3,162.6L615.1,162.5L616.9,162.5L618.7,162.4L620.5,162.4L622.3,162.3L624.1,162.2L624.5,163.5L624.6,164.1L622.9,164.2L621.1,164.3L619.3,164.3L617.5,164.4L615.7,164.5L613.9,164.5L612.1,164.6L610.3,164.7L608.5,164.7L606.7,164.8L604.9,164.9L603.1,164.9L601.3,165.0L599.6,165.0L599.5,165.1L597.7,165.1L595.9,165.2L594.1,165.3L592.3,165.4L590.5,165.5L588.7,165.6L586.9,165.7L585.1,165.7L583.3,165.8L581.5,165.9L579.7,166.0L577.9,166.1L576.1,166.2L574.3,166.2L572.5,166.3L570.7,166.4L569.6,166.5L568.9,166.5L567.1,166.6L565.4,166.7L563.6,166.9L561.8,167.0L560.0,167.2L558.2,167.3L556.5,167.5L554.7,167.7L552.9,167.9L551.9,168.0L551.2,168.1L549.4,168.4L547.7,168.7L545.9,169.0L544.2,169.3L542.4,169.6L542.2,169.7L540.7,170.0L539.0,170.3L537.2,170.6L535.5,171.0L533.8,171.4L533.6,171.4L532.0,171.6L530.3,171.9L528.5,172.2L526.8,172.5L525.0,172.8L523.4,173.0L523.2,173.1L521.5,173.3L519.7,173.5L517.9,173.6L516.1,173.8L514.3,173.9L512.5,174.0L510.7,174.1L508.9,174.2L507.1,174.3L505.3,174.4L503.4,174.4L501.7,174.5L501.6,174.5L501.6,174.5L501.2,172.7L500.9,171.4L502.7,171.3L504.5,171.2L506.3,171.0L506.8,171.0L508.0,170.8L509.8,170.6L511.6,170.4L513.4,170.2L515.1,170.0L516.9,169.7L518.7,169.5L519.3,169.4L520.4,169.2L522.1,168.8L523.9,168.5L525.6,168.1L527.3,167.8L527.8,167.7L529.1,167.5L530.8,167.3L532.6,167.0L534.4,166.8L536.1,166.5L537.9,166.3L539.6,166.1L539.8,166.1L541.4,165.9L543.2,165.8L545.0,165.6L546.8,165.5L548.6,165.3L550.3,165.2L552.1,165.0L553.9,164.9L555.7,164.8L557.5,164.7L559.3,164.6L560.3,164.5L561.1,164.5L562.9,164.4L564.7,164.3L566.5,164.3L568.3,164.2L570.1,164.1L571.9,164.1L573.7,164.0L575.5,163.9L577.3,163.9L579.1,163.8L580.9,163.7L582.7,163.7L584.5,163.6L586.3,163.5L588.1,163.5L589.9,163.4L591.7,163.4L593.5,163.3L595.3,163.2L596.4,163.2ZM510.8,219.4L512.6,219.6L513.5,219.7L514.5,219.8L516.4,220.1L518.3,220.4L520.2,220.8L522.2,221.1L524.1,221.5L525.3,221.7L526.0,221.9L527.9,222.3L529.8,222.7L531.7,223.1L533.6,223.5L534.7,223.7L535.6,223.9L537.5,224.4L539.4,224.8L541.3,225.2L543.2,225.6L544.3,225.8L545.1,225.9L547.0,226.3L548.9,226.7L550.8,227.0L552.8,227.4L554.7,227.7L555.4,227.8L556.6,228.0L558.5,228.3L560.4,228.6L562.3,228.9L564.1,229.2L566.0,229.4L567.9,229.7L569.8,229.9L570.4,230.0L571.7,230.2L573.6,230.4L575.5,230.6L577.4,230.9L579.3,231.1L581.2,231.4L583.0,231.6L584.9,231.8L586.8,232.1L587.8,232.2L588.7,232.3L590.6,232.6L592.5,232.8L594.4,233.1L596.3,233.3L598.2,233.5L600.1,233.8L602.0,234.0L603.8,234.3L605.2,234.4L605.7,234.5L607.6,234.7L609.5,235.0L611.4,235.2L613.3,235.5L615.2,235.7L617.1,236.0L619.0,236.2L620.9,236.4L622.8,236.7L622.8,236.7L624.7,236.9L626.5,237.2L628.4,237.4L630.3,237.6L632.2,237.9L634.1,238.1L636.0,238.4L637.9,238.6L639.7,238.9L639.8,238.9L639.9,240.8L640.0,241.7L638.1,241.5L636.2,241.2L634.3,241.0L632.4,240.8L630.8,240.6L630.5,240.5L628.6,240.3L626.8,240.0L624.9,239.8L623.0,239.5L621.1,239.3L619.2,239.1L617.3,238.8L615.4,238.6L613.6,238.3L613.1,238.3L611.7,238.1L609.8,237.9L607.9,237.6L606.0,237.4L604.1,237.1L602.2,236.9L600.4,236.7L598.5,236.4L596.6,236.2L595.6,236.0L594.7,235.9L592.8,235.7L590.9,235.4L589.0,235.2L587.1,234.9L585.2,234.7L583.3,234.5L581.5,234.2L579.6,234.0L578.2,233.8L577.7,233.7L575.8,233.5L573.9,233.2L572.0,233.0L570.1,232.8L568.2,232.5L566.3,232.3L564.4,232.0L562.6,231.8L561.4,231.6L560.7,231.5L558.8,231.2L556.9,230.9L555.0,230.7L553.1,230.4L551.2,230.1L549.3,229.8L547.5,229.5L547.4,229.4L545.5,229.1L543.6,228.8L541.7,228.5L539.8,228.2L537.9,227.8L536.0,227.5L535.4,227.4L534.1,227.1L532.2,226.8L530.3,226.4L528.4,226.1L526.5,225.8L524.6,225.4L524.0,225.3L522.7,225.1L520.8,224.8L518.9,224.4L517.0,224.1L515.1,223.8L513.2,223.6L511.3,223.3L510.5,223.2L509.4,223.1L509.1,221.4L508.9,219.6L508.9,219.1Z" fill="#0070f0"/>
<path d="M536.7,80.8L538.5,80.8L540.4,80.8L542.3,80.8L544.1,80.8L546.0,80.8L546.1,80.8L548.6,82.6L548.7,82.6L551.0,83.7L552.6,84.5L553.3,84.7L555.5,85.5L557.7,86.2L558.0,86.3L559.8,86.8L561.9,87.3L564.0,87.8L565.5,88.1L566.0,88.2L568.0,88.6L570.1,89.0L572.0,89.3L574.0,89.6L576.0,89.9L576.7,90.0L577.9,90.1L579.9,90.3L581.8,90.5L583.7,90.6L585.6,90.7L587.5,90.8L589.3,90.9L591.2,90.8L593.0,90.8L594.8,90.7L596.6,90.6L597.1,91.8L597.6,92.9L595.8,93.0L594.0,93.1L592.2,93.1L590.3,93.0L588.4,93.0L586.6,92.9L584.7,92.8L582.8,92.7L580.9,92.5L578.9,92.3L577.0,92.1L575.0,91.8L574.7,91.8L573.1,91.6L571.1,91.3L569.1,91.0L567.1,90.7L565.1,90.4L563.1,90.0L562.9,89.9L561.1,89.6L559.1,89.2L557.0,88.7L555.0,88.3L554.2,88.1L552.9,87.8L550.8,87.2L548.7,86.7L547.2,86.3L546.5,86.0L544.3,85.3L542.1,84.6L541.8,84.4L539.8,83.5L538.0,82.6L537.3,82.0L535.7,80.8ZM570.0,126.3L571.7,126.1L573.4,125.9L575.2,125.7L576.9,125.5L578.7,125.4L580.5,125.3L582.2,125.2L584.0,125.1L585.8,125.1L587.6,125.0L589.4,125.0L591.3,125.1L593.1,125.1L595.0,125.2L596.8,125.3L598.7,125.5L600.6,125.7L602.6,126.0L604.5,126.3L606.5,126.6L607.1,126.7L608.5,127.1L610.5,127.6L612.6,128.2L612.7,128.6L613.5,130.4L614.2,132.3L614.2,132.4L614.1,132.3L611.9,131.2L610.5,130.4L609.8,130.2L607.7,129.5L605.6,128.9L604.1,128.5L603.6,128.4L601.6,128.1L599.7,127.8L597.8,127.6L595.9,127.4L594.0,127.2L592.1,127.1L590.3,127.0L588.4,126.9L586.6,126.9L584.8,127.0L583.0,127.0L581.2,127.1L579.5,127.2L577.7,127.4L576.0,127.5L574.2,127.8L572.5,128.0L570.8,128.3L570.7,128.3L569.2,128.7L567.6,129.1L566.0,129.6L564.7,130.1L564.4,130.3L563.0,131.4L562.5,131.9L562.5,133.7L564.4,135.5L564.5,135.6L566.6,136.6L568.5,137.4L568.7,137.5L570.8,138.1L572.8,138.6L574.7,139.1L575.3,139.3L576.7,139.5L578.6,139.9L580.6,140.2L582.5,140.5L584.4,140.8L586.3,141.1L587.5,141.2L588.1,141.3L590.0,141.4L591.9,141.5L593.7,141.6L595.5,141.7L597.3,141.7L599.2,141.7L600.9,141.6L602.7,141.5L604.5,141.4L604.6,141.4L606.2,141.1L607.9,140.8L609.6,140.4L611.3,140.0L612.5,139.6L612.9,139.4L614.4,138.6L615.6,137.8L615.9,137.4L616.0,137.8L616.6,139.6L617.2,141.5L617.2,141.6L615.6,142.1L613.9,142.5L612.2,142.8L610.5,143.1L609.7,143.2L608.8,143.3L607.0,143.5L605.3,143.6L603.5,143.7L601.7,143.8L599.9,143.8L598.1,143.8L596.2,143.7L594.4,143.7L592.5,143.5L590.7,143.4L588.8,143.2L586.9,143.0L586.9,143.0L585.0,142.8L583.1,142.5L581.2,142.2L579.3,141.9L577.4,141.6L575.4,141.2L574.8,141.1L573.5,140.8L571.5,140.3L569.6,139.9L567.6,139.4L566.7,139.2L565.6,138.8L563.5,138.2L561.5,137.5L560.9,137.3L559.4,136.6L557.2,135.5L557.1,135.5L555.2,133.6L554.9,131.8L555.6,130.9L556.4,130.0L556.9,129.7L558.5,129.1L560.0,128.4L560.6,128.2L561.6,128.0L563.3,127.6L564.9,127.2L566.6,126.9L568.3,126.6L568.9,126.5ZM601.3,165.0L603.1,164.9L604.9,164.9L606.7,164.8L608.5,164.7L610.3,164.7L612.1,164.6L613.9,164.5L615.7,164.5L617.5,164.4L619.3,164.3L621.1,164.3L622.9,164.2L624.6,164.1L625.1,165.4L625.4,166.3L623.6,166.4L621.8,166.5L620.0,166.6L618.2,166.7L616.4,166.7L614.6,166.8L612.8,166.9L611.0,167.0L610.3,167.0L609.2,167.1L607.4,167.2L605.6,167.3L603.8,167.4L602.0,167.5L600.2,167.6L598.5,167.7L596.7,167.8L594.9,167.9L593.1,168.0L591.3,168.1L589.5,168.3L587.7,168.4L585.9,168.5L585.3,168.5L584.1,168.6L582.3,168.7L580.5,168.8L578.8,168.9L577.0,169.0L575.2,169.2L573.4,169.3L571.6,169.4L569.8,169.5L568.0,169.6L566.2,169.8L564.4,169.9L563.3,170.0L562.6,170.1L560.9,170.2L559.1,170.4L557.3,170.6L555.6,170.8L553.8,171.1L552.0,171.3L550.3,171.6L550.2,171.6L548.5,171.9L546.8,172.1L545.0,172.4L543.3,172.7L541.5,173.0L539.8,173.3L539.8,173.3L538.0,173.6L536.3,173.9L534.5,174.1L532.8,174.4L531.0,174.7L529.6,174.9L529.2,175.0L527.5,175.3L525.7,175.5L523.9,175.8L522.2,176.0L520.4,176.2L518.6,176.4L516.9,176.5L516.8,176.6L515.0,176.7L513.2,176.8L511.3,176.9L509.5,176.9L507.7,177.0L505.9,177.0L504.0,177.1L502.2,177.2L502.1,176.3L501.6,174.5L501.7,174.5L503.4,174.4L505.3,174.4L507.1,174.3L508.9,174.2L510.7,174.1L512.5,174.0L514.3,173.9L516.1,173.8L517.9,173.6L519.7,173.5L521.5,173.3L523.2,173.1L523.4,173.0L525.0,172.8L526.8,172.5L528.5,172.2L530.3,171.9L532.0,171.6L533.6,171.4L533.8,171.4L535.5,171.0L537.2,170.6L539.0,170.3L540.7,170.0L542.2,169.7L542.4,169.6L544.2,169.3L545.9,169.0L547.7,168.7L549.4,168.4L551.2,168.1L551.9,168.0L552.9,167.9L554.7,167.7L556.5,167.5L558.2,167.3L560.0,167.2L561.8,167.0L563.6,166.9L565.4,166.7L567.1,166.6L568.9,166.5L569.6,166.5L570.7,166.4L572.5,166.3L574.3,166.2L576.1,166.2L577.9,166.1L579.7,166.0L581.5,165.9L583.3,165.8L585.1,165.7L586.9,165.7L588.7,165.6L590.5,165.5L592.3,165.4L594.1,165.3L595.9,165.2L597.7,165.1L599.5,165.1L599.6,165.0ZM510.3,216.0L510.6,216.0L512.2,216.2L514.1,216.4L516.0,216.7L517.9,217.0L519.8,217.3L521.7,217.7L523.5,218.1L523.6,218.1L525.6,218.5L527.5,219.0L529.4,219.4L531.3,219.9L532.1,220.1L533.2,220.4L535.2,220.8L537.1,221.3L539.0,221.7L540.5,222.1L540.9,222.2L542.8,222.6L544.8,223.0L546.7,223.4L548.6,223.8L549.8,224.1L550.5,224.2L552.4,224.6L554.3,225.0L556.2,225.3L558.1,225.6L560.0,225.9L561.7,226.2L561.9,226.2L563.8,226.5L565.7,226.7L567.6,227.0L569.5,227.2L571.4,227.4L573.3,227.6L575.2,227.9L577.1,228.1L578.9,228.3L579.5,228.4L580.8,228.6L582.7,228.8L584.6,229.0L586.5,229.2L588.4,229.5L590.3,229.7L592.2,229.9L594.1,230.2L596.0,230.4L597.8,230.6L598.0,230.6L599.7,230.8L601.6,231.1L603.5,231.3L605.4,231.5L607.3,231.8L609.2,232.0L611.1,232.2L613.0,232.5L614.9,232.7L616.6,232.9L616.7,232.9L618.6,233.1L620.5,233.4L622.4,233.6L624.3,233.8L626.2,234.1L628.1,234.3L630.0,234.5L631.9,234.8L633.8,235.0L635.2,235.2L635.7,235.2L637.6,235.5L639.4,235.7L639.6,237.1L639.7,238.9L637.9,238.6L636.0,238.4L634.1,238.1L632.2,237.9L630.3,237.6L628.4,237.4L626.5,237.2L624.7,236.9L622.8,236.7L622.8,236.7L620.9,236.4L619.0,236.2L617.1,236.0L615.2,235.7L613.3,235.5L611.4,235.2L609.5,235.0L607.6,234.7L605.7,234.5L605.2,234.4L603.8,234.3L602.0,234.0L600.1,233.8L598.2,233.5L596.3,233.3L594.4,233.1L592.5,232.8L590.6,232.6L588.7,232.3L587.8,232.2L586.8,232.1L584.9,231.8L583.0,231.6L581.2,231.4L579.3,231.1L577.4,230.9L575.5,230.6L573.6,230.4L571.7,230.2L570.4,230.0L569.8,229.9L567.9,229.7L566.0,229.4L564.1,229.2L562.3,228.9L560.4,228.6L558.5,228.3L556.6,228.0L555.4,227.8L554.7,227.7L552.8,227.4L550.8,227.0L548.9,226.7L547.0,226.3L545.1,225.9L544.3,225.8L543.2,225.6L541.3,225.2L539.4,224.8L537.5,224.4L535.6,223.9L534.7,223.7L533.6,223.5L531.7,223.1L529.8,222.7L527.9,222.3L526.0,221.9L525.3,221.7L524.1,221.5L522.2,221.1L520.2,220.8L518.3,220.4L516.4,220.1L514.5,219.8L513.5,219.7L512.6,219.6L510.8,219.4L508.9,219.1L508.7,217.8L508.5,216.0L508.4,215.8Z" fill="#00b0f0"/>
<path d="M547.8,80.8L549.7,80.8L551.5,80.8L553.4,80.8L553.8,80.8L555.8,82.1L556.7,82.6L558.2,83.3L560.5,84.2L561.1,84.5L562.7,85.0L564.8,85.6L566.9,86.1L567.5,86.3L569.0,86.6L571.0,87.0L573.0,87.4L575.0,87.7L577.0,88.0L578.3,88.1L578.9,88.2L580.9,88.4L582.8,88.5L584.7,88.6L586.5,88.7L588.4,88.7L590.2,88.7L592.0,88.6L593.8,88.4L595.6,88.2L596.3,90.0L596.6,90.6L594.8,90.7L593.0,90.8L591.2,90.8L589.3,90.9L587.5,90.8L585.6,90.7L583.7,90.6L581.8,90.5L579.9,90.3L577.9,90.1L576.7,90.0L576.0,89.9L574.0,89.6L572.0,89.3L570.1,89.0L568.0,88.6L566.0,88.2L565.5,88.1L564.0,87.8L561.9,87.3L559.8,86.8L558.0,86.3L557.7,86.2L555.5,85.5L553.3,84.7L552.6,84.5L551.0,83.7L548.7,82.6L548.6,82.6L546.1,80.8ZM570.8,128.3L572.5,128.0L574.2,127.8L576.0,127.5L577.7,127.4L579.5,127.2L581.2,127.1L583.0,127.0L584.8,127.0L586.6,126.9L588.4,126.9L590.3,127.0L592.1,127.1L594.0,127.2L595.9,127.4L597.8,127.6L599.7,127.8L601.6,128.1L603.6,128.4L604.1,128.5L605.6,128.9L607.7,129.5L609.8,130.2L610.5,130.4L611.9,131.2L614.1,132.3L614.2,132.4L614.8,134.1L615.4,136.0L615.9,137.4L615.6,137.8L614.4,138.6L612.9,139.4L612.5,139.6L611.3,140.0L609.6,140.4L607.9,140.8L606.2,141.1L604.6,141.4L604.5,141.4L602.7,141.5L600.9,141.6L599.2,141.7L597.3,141.7L595.5,141.7L593.7,141.6L591.9,141.5L590.0,141.4L588.1,141.3L587.5,141.2L586.3,141.1L584.4,140.8L582.5,140.5L580.6,140.2L578.6,139.9L576.7,139.5L575.3,139.3L574.7,139.1L572.8,138.6L570.8,138.1L568.7,137.5L568.5,137.4L566.6,136.6L564.5,135.6L564.4,135.5L562.5,133.7L562.5,131.9L563.0,131.4L564.4,130.3L564.7,130.1L566.0,129.6L567.6,129.1L569.2,128.7L570.7,128.3ZM575.6,130.2L575.3,130.2L573.7,130.7L572.1,131.3L570.7,131.9L570.6,132.2L570.1,133.7L571.5,134.9L572.4,135.6L573.7,136.1L575.7,136.7L577.8,137.3L578.3,137.5L579.7,137.7L581.6,138.0L583.5,138.2L585.4,138.4L587.2,138.6L589.1,138.7L590.9,138.7L592.7,138.6L594.5,138.5L596.2,138.4L598.0,138.1L599.7,137.8L600.5,137.7L601.3,137.2L602.8,136.3L603.5,135.9L603.4,134.0L601.6,132.7L600.9,132.2L599.4,131.7L597.4,131.1L595.4,130.5L594.6,130.3L593.4,130.1L591.5,129.9L589.6,129.8L587.8,129.6L585.9,129.6L584.1,129.5L582.3,129.6L580.5,129.6L578.7,129.8L577.0,130.0ZM611.0,167.0L612.8,166.9L614.6,166.8L616.4,166.7L618.2,166.7L620.0,166.6L621.8,166.5L623.6,166.4L625.4,166.3L625.6,167.2L626.2,169.1L626.3,169.3L624.5,169.5L622.7,169.6L620.9,169.7L619.2,169.8L617.4,169.9L615.6,170.0L613.8,170.1L612.0,170.2L610.2,170.3L608.4,170.4L606.6,170.5L605.4,170.6L604.8,170.6L603.0,170.7L601.2,170.8L599.4,170.9L597.6,171.0L595.8,171.1L594.0,171.2L592.2,171.3L590.4,171.4L588.6,171.5L586.8,171.6L585.0,171.7L583.2,171.8L581.4,171.8L579.6,171.9L577.9,172.0L577.8,172.0L576.0,172.1L574.2,172.2L572.4,172.3L570.6,172.4L568.8,172.4L567.0,172.5L565.2,172.6L563.4,172.7L561.6,172.9L559.8,173.0L558.1,173.2L556.3,173.4L555.4,173.5L554.5,173.6L552.7,173.8L551.0,174.1L549.2,174.3L547.5,174.6L545.7,174.9L543.9,175.2L543.9,175.2L542.2,175.5L540.4,175.8L538.7,176.1L536.9,176.4L535.2,176.7L534.8,176.8L533.4,177.1L531.7,177.5L529.9,177.8L528.2,178.2L526.5,178.5L526.4,178.5L524.6,178.9L522.9,179.3L521.1,179.6L519.3,179.9L517.5,180.2L517.5,180.2L515.7,180.4L513.9,180.6L512.1,180.7L510.2,180.7L508.4,180.8L506.6,180.8L504.7,180.9L502.9,180.9L502.7,179.9L502.4,178.1L502.2,177.2L504.0,177.1L505.9,177.0L507.7,177.0L509.5,176.9L511.3,176.9L513.2,176.8L515.0,176.7L516.8,176.6L516.9,176.5L518.6,176.4L520.4,176.2L522.2,176.0L523.9,175.8L525.7,175.5L527.5,175.3L529.2,175.0L529.6,174.9L531.0,174.7L532.8,174.4L534.5,174.1L536.3,173.9L538.0,173.6L539.8,173.3L539.8,173.3L541.5,173.0L543.3,172.7L545.0,172.4L546.8,172.1L548.5,171.9L550.2,171.6L550.3,171.6L552.0,171.3L553.8,171.1L555.6,170.8L557.3,170.6L559.1,170.4L560.9,170.2L562.6,170.1L563.3,170.0L564.4,169.9L566.2,169.8L568.0,169.6L569.8,169.5L571.6,169.4L573.4,169.3L575.2,169.2L577.0,169.0L578.8,168.9L580.5,168.8L582.3,168.7L584.1,168.6L585.3,168.5L585.9,168.5L587.7,168.4L589.5,168.3L591.3,168.1L593.1,168.0L594.9,167.9L596.7,167.8L598.5,167.7L600.2,167.6L602.0,167.5L603.8,167.4L605.6,167.3L607.4,167.2L609.2,167.1L610.3,167.0ZM509.8,211.7L511.7,211.9L513.5,212.1L515.5,212.5L515.7,212.5L517.4,212.8L519.3,213.2L521.2,213.7L523.1,214.3L523.6,214.5L525.1,214.9L527.0,215.4L529.0,216.0L530.3,216.4L530.9,216.6L532.8,217.1L534.8,217.7L536.7,218.3L537.1,218.4L538.6,218.8L540.6,219.3L542.5,219.8L544.4,220.3L544.7,220.4L546.3,220.7L548.2,221.2L550.2,221.6L552.1,222.0L553.9,222.4L554.0,222.4L555.9,222.7L557.8,223.1L559.7,223.4L561.6,223.7L563.5,224.0L565.4,224.2L567.3,224.4L567.9,224.5L569.2,224.6L571.1,224.9L573.0,225.1L574.8,225.3L576.7,225.5L578.6,225.7L580.5,225.9L582.4,226.1L584.3,226.3L586.2,226.6L587.9,226.8L588.1,226.8L590.0,227.0L591.8,227.2L593.7,227.4L595.6,227.6L597.5,227.8L599.4,228.1L601.3,228.3L603.2,228.5L605.1,228.7L607.0,228.9L608.1,229.0L608.8,229.1L610.7,229.3L612.6,229.6L614.5,229.8L616.4,230.0L618.3,230.2L620.2,230.4L622.1,230.6L624.0,230.9L625.8,231.1L627.7,231.3L628.2,231.3L629.6,231.5L631.5,231.7L633.4,231.9L635.3,232.2L637.2,232.4L639.1,232.6L639.2,233.4L639.4,235.3L639.4,235.7L637.6,235.5L635.7,235.2L635.2,235.2L633.8,235.0L631.9,234.8L630.0,234.5L628.1,234.3L626.2,234.1L624.3,233.8L622.4,233.6L620.5,233.4L618.6,233.1L616.7,232.9L616.6,232.9L614.9,232.7L613.0,232.5L611.1,232.2L609.2,232.0L607.3,231.8L605.4,231.5L603.5,231.3L601.6,231.1L599.7,230.8L598.0,230.6L597.8,230.6L596.0,230.4L594.1,230.2L592.2,229.9L590.3,229.7L588.4,229.5L586.5,229.2L584.6,229.0L582.7,228.8L580.8,228.6L579.5,228.4L578.9,228.3L577.1,228.1L575.2,227.9L573.3,227.6L571.4,227.4L569.5,227.2L567.6,227.0L565.7,226.7L563.8,226.5L561.9,226.2L561.7,226.2L560.0,225.9L558.1,225.6L556.2,225.3L554.3,225.0L552.4,224.6L550.5,224.2L549.8,224.1L548.6,223.8L546.7,223.4L544.8,223.0L542.8,222.6L540.9,222.2L540.5,222.1L539.0,221.7L537.1,221.3L535.2,220.8L533.2,220.4L532.1,220.1L531.3,219.9L529.4,219.4L527.5,219.0L525.6,218.5L523.6,218.1L523.5,218.1L521.7,217.7L519.8,217.3L517.9,217.0L516.0,216.7L514.1,216.4L512.2,216.2L510.6,216.0L510.3,216.0L508.4,215.8L508.2,214.2L508.0,212.4L507.9,211.5Z" fill="#00f0f0"/>
<path d="M555.2,80.8L557.1,80.8L558.9,80.8L560.8,80.8L561.5,80.8L563.0,81.7L564.7,82.6L565.4,82.9L567.6,83.6L569.8,84.3L570.3,84.5L571.9,84.8L573.9,85.2L575.9,85.5L577.9,85.8L579.8,86.0L581.7,86.2L583.5,86.3L583.6,86.3L585.5,86.3L586.9,86.3L587.3,86.3L589.1,86.2L590.9,85.9L592.5,85.6L594.2,85.1L594.7,86.3L595.5,88.2L595.6,88.2L593.8,88.4L592.0,88.6L590.2,88.7L588.4,88.7L586.5,88.7L584.7,88.6L582.8,88.5L580.9,88.4L578.9,88.2L578.3,88.1L577.0,88.0L575.0,87.7L573.0,87.4L571.0,87.0L569.0,86.6L567.5,86.3L566.9,86.1L564.8,85.6L562.7,85.0L561.1,84.5L560.5,84.2L558.2,83.3L556.7,82.6L555.8,82.1L553.8,80.8ZM577.0,130.0L578.7,129.8L580.5,129.6L582.3,129.6L584.1,129.5L585.9,129.6L587.8,129.6L589.6,129.8L591.5,129.9L593.4,130.1L594.6,130.3L595.4,130.5L597.4,131.1L599.4,131.7L600.9,132.2L601.6,132.7L603.4,134.0L603.5,135.9L602.8,136.3L601.3,137.2L600.5,137.7L599.7,137.8L598.0,138.1L596.2,138.4L594.5,138.5L592.7,138.6L590.9,138.7L589.1,138.7L587.2,138.6L585.4,138.4L583.5,138.2L581.6,138.0L579.7,137.7L578.3,137.5L577.8,137.3L575.7,136.7L573.7,136.1L572.4,135.6L571.5,134.9L570.1,133.7L570.6,132.2L570.7,131.9L572.1,131.3L573.7,130.7L575.3,130.2L575.6,130.2ZM606.6,170.5L608.4,170.4L610.2,170.3L612.0,170.2L613.8,170.1L615.6,170.0L617.4,169.9L619.2,169.8L620.9,169.7L622.7,169.6L624.5,169.5L626.3,169.3L626.8,170.9L627.3,172.4L625.5,172.6L624.1,172.7L623.7,172.7L621.9,172.8L620.2,173.0L618.4,173.1L616.6,173.2L614.8,173.3L613.0,173.4L611.2,173.5L609.4,173.5L607.6,173.6L605.8,173.7L603.9,173.8L602.1,173.8L600.3,173.9L598.5,174.0L596.7,174.0L594.9,174.1L594.7,174.1L593.1,174.2L591.3,174.2L589.5,174.3L587.7,174.3L585.8,174.4L584.0,174.5L582.2,174.5L580.4,174.6L578.6,174.7L576.8,174.7L575.0,174.8L573.2,174.8L571.3,174.9L569.5,175.0L567.7,175.0L565.9,175.1L564.1,175.2L562.3,175.3L560.7,175.4L560.5,175.4L558.7,175.6L556.9,175.8L555.2,176.0L553.4,176.3L551.6,176.5L549.9,176.8L548.6,177.0L548.1,177.1L546.4,177.5L544.6,177.9L542.9,178.3L541.1,178.6L540.8,178.7L539.4,179.2L537.7,179.7L536.0,180.2L535.2,180.4L534.2,180.9L532.5,181.6L531.2,182.2L530.9,182.4L529.2,183.5L528.4,183.9L527.6,184.8L526.7,185.7L526.1,186.8L525.7,187.5L525.3,189.3L525.1,191.1L525.1,191.1L525.0,192.9L525.0,194.7L525.0,196.5L525.0,198.3L525.0,200.1L525.0,200.9L525.1,201.9L525.2,203.7L525.6,205.5L525.8,206.0L526.3,207.3L527.8,209.2L528.1,209.4L530.0,211.0L530.2,211.1L532.2,212.3L533.1,212.9L534.2,213.4L536.2,214.3L537.2,214.8L538.2,215.1L540.1,215.8L542.1,216.5L542.5,216.7L544.0,217.1L545.9,217.7L547.9,218.3L549.2,218.6L549.8,218.8L551.7,219.2L553.6,219.7L555.6,220.1L557.5,220.5L558.4,220.7L559.4,220.8L561.3,221.1L563.2,221.4L565.1,221.7L567.0,221.9L568.9,222.1L570.7,222.3L572.6,222.5L574.5,222.7L576.0,222.9L576.4,222.9L578.3,223.1L580.2,223.3L582.1,223.5L584.0,223.7L585.8,223.9L587.7,224.1L589.6,224.3L591.5,224.5L593.4,224.7L595.3,224.9L597.2,225.1L597.5,225.2L599.1,225.3L601.0,225.5L602.8,225.7L604.7,225.9L606.6,226.1L608.5,226.3L610.4,226.5L612.3,226.7L614.2,226.9L616.1,227.1L617.9,227.3L619.0,227.5L619.8,227.6L621.7,227.8L623.6,228.0L625.5,228.2L627.4,228.4L629.3,228.6L631.2,228.8L633.0,229.0L634.9,229.2L636.8,229.4L638.7,229.6L638.7,229.7L639.0,231.6L639.1,232.6L637.2,232.4L635.3,232.2L633.4,231.9L631.5,231.7L629.6,231.5L628.2,231.3L627.7,231.3L625.8,231.1L624.0,230.9L622.1,230.6L620.2,230.4L618.3,230.2L616.4,230.0L614.5,229.8L612.6,229.6L610.7,229.3L608.8,229.1L608.1,229.0L607.0,228.9L605.1,228.7L603.2,228.5L601.3,228.3L599.4,228.1L597.5,227.8L595.6,227.6L593.7,227.4L591.8,227.2L590.0,227.0L588.1,226.8L587.9,226.8L586.2,226.6L584.3,226.3L582.4,226.1L580.5,225.9L578.6,225.7L576.7,225.5L574.8,225.3L573.0,225.1L571.1,224.9L569.2,224.6L567.9,224.5L567.3,224.4L565.4,224.2L563.5,224.0L561.6,223.7L559.7,223.4L557.8,223.1L555.9,222.7L554.0,222.4L553.9,222.4L552.1,222.0L550.2,221.6L548.2,221.2L546.3,220.7L544.7,220.4L544.4,220.3L542.5,219.8L540.6,219.3L538.6,218.8L537.1,218.4L536.7,218.3L534.8,217.7L532.8,217.1L530.9,216.6L530.3,216.4L529.0,216.0L527.0,215.4L525.1,214.9L523.6,214.5L523.1,214.3L521.2,213.7L519.3,213.2L517.4,212.8L515.7,212.5L515.5,212.5L513.5,212.1L511.7,211.9L509.8,211.7L507.9,211.5L507.8,210.6L507.5,208.8L507.3,207.0L507.1,205.2L506.8,203.4L506.6,201.6L506.3,199.8L506.0,197.9L505.7,196.1L505.3,194.3L505.0,192.5L504.7,190.7L504.3,188.9L504.0,187.1L503.7,185.3L503.4,183.5L503.0,181.7L502.9,180.9L504.7,180.9L506.6,180.8L508.4,180.8L510.2,180.7L512.1,180.7L513.9,180.6L515.7,180.4L517.5,180.2L517.5,180.2L519.3,179.9L521.1,179.6L522.9,179.3L524.6,178.9L526.4,178.5L526.5,178.5L528.2,178.2L529.9,177.8L531.7,177.5L533.4,177.1L534.8,176.8L535.2,176.7L536.9,176.4L538.7,176.1L540.4,175.8L542.2,175.5L543.9,175.2L543.9,175.2L545.7,174.9L547.5,174.6L549.2,174.3L551.0,174.1L552.7,173.8L554.5,173.6L555.4,173.5L556.3,173.4L558.1,173.2L559.8,173.0L561.6,172.9L563.4,172.7L565.2,172.6L567.0,172.5L568.8,172.4L570.6,172.4L572.4,172.3L574.2,172.2L576.0,172.1L577.8,172.0L577.9,172.0L579.6,171.9L581.4,171.8L583.2,171.8L585.0,171.7L586.8,171.6L588.6,171.5L590.4,171.4L592.2,171.3L594.0,171.2L595.8,171.1L597.6,171.0L599.4,170.9L601.2,170.8L603.0,170.7L604.8,170.6L605.4,170.6Z" fill="#00f0c0"/>
<path d="M562.6,80.8L564.5,80.8L566.3,80.8L568.2,80.8L570.1,80.8L571.9,80.8L573.5,80.8L573.8,80.9L575.9,81.5L578.0,81.9L579.9,82.1L581.7,81.9L583.2,81.3L583.8,80.8L584.9,80.8L586.7,80.8L588.6,80.8L590.4,80.8L592.3,80.8L593.1,82.6L593.9,84.5L594.2,85.1L592.5,85.6L590.9,85.9L589.1,86.2L587.3,86.3L586.9,86.3L585.5,86.3L583.6,86.3L583.5,86.3L581.7,86.2L579.8,86.0L577.9,85.8L575.9,85.5L573.9,85.2L571.9,84.8L570.3,84.5L569.8,84.3L567.6,83.6L565.4,82.9L564.7,82.6L563.0,81.7L561.5,80.8ZM625.5,172.6L627.3,172.4L627.4,172.7L628.0,174.6L628.0,174.8L626.3,175.0L624.5,175.2L622.7,175.4L621.0,175.6L619.2,175.8L617.4,175.9L615.7,176.1L614.6,176.2L613.9,176.3L612.1,176.4L610.3,176.5L608.5,176.7L606.7,176.8L604.9,176.9L603.1,176.9L601.3,177.0L599.5,177.1L597.6,177.1L595.8,177.2L594.0,177.2L592.2,177.2L590.4,177.3L588.5,177.3L586.7,177.4L584.9,177.4L583.1,177.5L581.3,177.5L580.3,177.5L579.4,177.5L577.6,177.6L575.8,177.7L574.0,177.7L572.1,177.8L570.3,177.8L568.5,177.9L566.7,177.9L564.9,178.0L563.1,178.1L561.3,178.3L559.5,178.5L557.7,178.7L555.9,178.9L555.9,179.0L554.2,179.3L552.4,179.7L550.7,180.2L549.0,180.7L548.9,180.7L547.3,181.4L545.6,182.1L544.9,182.4L543.9,183.1L542.4,184.2L542.3,184.3L540.9,185.9L540.8,186.2L540.1,187.7L539.8,189.5L539.7,190.2L539.6,191.3L539.6,193.2L539.6,195.0L539.6,196.8L539.6,198.6L539.6,199.2L539.6,200.4L539.6,202.2L539.7,204.0L539.9,205.8L540.4,207.6L541.1,209.0L541.4,209.4L543.0,211.3L543.3,211.5L545.3,212.9L545.7,213.1L547.3,213.9L549.3,214.8L549.7,215.0L551.3,215.5L553.2,216.2L555.1,216.8L555.8,217.0L557.1,217.3L559.0,217.7L560.9,218.1L562.8,218.4L564.7,218.7L566.6,218.9L567.7,219.0L568.5,219.1L570.4,219.3L572.3,219.5L574.1,219.7L576.0,219.8L577.9,220.0L579.8,220.2L581.7,220.4L583.6,220.6L585.5,220.8L587.3,221.0L589.2,221.2L590.4,221.4L591.1,221.4L593.0,221.6L594.9,221.8L596.8,222.0L598.7,222.2L600.6,222.3L602.4,222.5L604.3,222.7L606.2,222.9L608.1,223.1L610.0,223.3L611.9,223.5L613.0,223.7L613.8,223.8L615.7,224.0L617.5,224.2L619.4,224.4L621.3,224.6L623.2,224.8L625.1,225.1L627.0,225.3L628.9,225.6L630.8,225.8L631.5,225.9L632.7,226.1L634.6,226.2L636.4,226.3L638.3,226.4L638.5,227.9L638.7,229.6L636.8,229.4L634.9,229.2L633.0,229.0L631.2,228.8L629.3,228.6L627.4,228.4L625.5,228.2L623.6,228.0L621.7,227.8L619.8,227.6L619.0,227.5L617.9,227.3L616.1,227.1L614.2,226.9L612.3,226.7L610.4,226.5L608.5,226.3L606.6,226.1L604.7,225.9L602.8,225.7L601.0,225.5L599.1,225.3L597.5,225.2L597.2,225.1L595.3,224.9L593.4,224.7L591.5,224.5L589.6,224.3L587.7,224.1L585.8,223.9L584.0,223.7L582.1,223.5L580.2,223.3L578.3,223.1L576.4,222.9L576.0,222.9L574.5,222.7L572.6,222.5L570.7,222.3L568.9,222.1L567.0,221.9L565.1,221.7L563.2,221.4L561.3,221.1L559.4,220.8L558.4,220.7L557.5,220.5L555.6,220.1L553.6,219.7L551.7,219.2L549.8,218.8L549.2,218.6L547.9,218.3L545.9,217.7L544.0,217.1L542.5,216.7L542.1,216.5L540.1,215.8L538.2,215.1L537.2,214.8L536.2,214.3L534.2,213.4L533.1,212.9L532.2,212.3L530.2,211.1L530.0,211.0L528.1,209.4L527.8,209.2L526.3,207.3L525.8,206.0L525.6,205.5L525.2,203.7L525.1,201.9L525.0,200.9L525.0,200.1L525.0,198.3L525.0,196.5L525.0,194.7L525.0,192.9L525.1,191.1L525.1,191.1L525.3,189.3L525.7,187.5L526.1,186.8L526.7,185.7L527.6,184.8L528.4,183.9L529.2,183.5L530.9,182.4L531.2,182.2L532.5,181.6L534.2,180.9L535.2,180.4L536.0,180.2L537.7,179.7L539.4,179.2L540.8,178.7L541.1,178.6L542.9,178.3L544.6,177.9L546.4,177.5L548.1,177.1L548.6,177.0L549.9,176.8L551.6,176.5L553.4,176.3L555.2,176.0L556.9,175.8L558.7,175.6L560.5,175.4L560.7,175.4L562.3,175.3L564.1,175.2L565.9,175.1L567.7,175.0L569.5,175.0L571.3,174.9L573.2,174.8L575.0,174.8L576.8,174.7L578.6,174.7L580.4,174.6L582.2,174.5L584.0,174.5L585.8,174.4L587.7,174.3L589.5,174.3L591.3,174.2L593.1,174.2L594.7,174.1L594.9,174.1L596.7,174.0L598.5,174.0L600.3,173.9L602.1,173.8L603.9,173.8L605.8,173.7L607.6,173.6L609.4,173.5L611.2,173.5L613.0,173.4L614.8,173.3L616.6,173.2L618.4,173.1L620.2,173.0L621.9,172.8L623.7,172.7L624.1,172.7Z" fill="#00f080"/>
<path d="M573.8,80.8L575.6,80.8L577.5,80.8L579.3,80.8L581.2,80.8L583.0,80.8L583.8,80.8L583.2,81.3L581.7,81.9L579.9,82.1L578.0,81.9L575.9,81.5L573.8,80.9L573.5,80.8ZM615.7,176.1L617.4,175.9L619.2,175.8L621.0,175.6L622.7,175.4L624.5,175.2L626.3,175.0L628.0,174.8L628.6,176.4L628.7,176.7L626.9,177.0L625.2,177.2L623.4,177.5L621.7,177.8L619.9,178.1L619.7,178.1L618.2,178.4L616.4,178.6L614.7,178.9L612.9,179.2L611.2,179.5L609.7,179.8L609.5,179.8L607.7,180.1L605.9,180.4L604.2,180.7L602.4,180.9L600.6,181.2L598.9,181.4L598.3,181.4L597.1,181.6L595.3,181.7L593.5,181.9L591.7,182.0L589.8,182.1L588.0,182.2L586.2,182.3L584.4,182.3L582.5,182.4L580.7,182.4L578.8,182.5L577.0,182.5L575.2,182.5L573.3,182.6L571.5,182.6L569.7,182.6L567.8,182.7L566.0,182.7L565.7,182.7L564.2,182.9L562.4,183.3L560.7,183.7L558.9,184.3L558.7,184.4L557.3,185.4L556.2,186.2L555.7,186.9L555.0,188.0L554.4,189.7L554.4,189.8L554.2,191.6L554.1,193.4L554.1,195.2L554.0,197.0L554.0,197.3L554.1,198.8L554.1,200.6L554.1,202.5L554.2,204.3L554.4,206.1L555.0,207.9L556.1,209.5L556.2,209.7L558.2,211.3L558.6,211.6L560.2,212.3L562.1,213.0L563.7,213.5L564.1,213.6L566.0,213.9L567.8,214.1L569.7,214.2L571.6,214.4L573.5,214.6L575.4,214.8L577.3,215.0L579.2,215.2L581.1,215.4L583.0,215.6L584.0,215.8L584.8,215.8L586.7,216.0L588.6,216.2L590.5,216.4L592.4,216.5L594.3,216.7L596.2,217.0L598.1,217.2L599.9,217.4L601.8,217.7L603.7,218.0L603.9,218.0L605.6,218.2L607.5,218.5L609.4,218.8L611.3,219.2L613.3,219.5L615.2,219.9L616.4,220.1L617.1,220.2L619.0,220.6L620.9,220.9L622.8,221.3L624.7,221.7L626.6,222.0L627.4,222.2L628.5,222.4L630.4,222.7L632.3,223.0L634.2,223.3L636.1,223.2L637.9,223.1L638.1,224.2L638.3,226.1L638.3,226.4L636.4,226.3L634.6,226.2L632.7,226.1L631.5,225.9L630.8,225.8L628.9,225.6L627.0,225.3L625.1,225.1L623.2,224.8L621.3,224.6L619.4,224.4L617.5,224.2L615.7,224.0L613.8,223.8L613.0,223.7L611.9,223.5L610.0,223.3L608.1,223.1L606.2,222.9L604.3,222.7L602.4,222.5L600.6,222.3L598.7,222.2L596.8,222.0L594.9,221.8L593.0,221.6L591.1,221.4L590.4,221.4L589.2,221.2L587.3,221.0L585.5,220.8L583.6,220.6L581.7,220.4L579.8,220.2L577.9,220.0L576.0,219.8L574.1,219.7L572.3,219.5L570.4,219.3L568.5,219.1L567.7,219.0L566.6,218.9L564.7,218.7L562.8,218.4L560.9,218.1L559.0,217.7L557.1,217.3L555.8,217.0L555.1,216.8L553.2,216.2L551.3,215.5L549.7,215.0L549.3,214.8L547.3,213.9L545.7,213.1L545.3,212.9L543.3,211.5L543.0,211.3L541.4,209.4L541.1,209.0L540.4,207.6L539.9,205.8L539.7,204.0L539.6,202.2L539.6,200.4L539.6,199.2L539.6,198.6L539.6,196.8L539.6,195.0L539.6,193.2L539.6,191.3L539.7,190.2L539.8,189.5L540.1,187.7L540.8,186.2L540.9,185.9L542.3,184.3L542.4,184.2L543.9,183.1L544.9,182.4L545.6,182.1L547.3,181.4L548.9,180.7L549.0,180.7L550.7,180.2L552.4,179.7L554.2,179.3L555.9,179.0L555.9,178.9L557.7,178.7L559.5,178.5L561.3,178.3L563.1,178.1L564.9,178.0L566.7,177.9L568.5,177.9L570.3,177.8L572.1,177.8L574.0,177.7L575.8,177.7L577.6,177.6L579.4,177.5L580.3,177.5L581.3,177.5L583.1,177.5L584.9,177.4L586.7,177.4L588.5,177.3L590.4,177.3L592.2,177.2L594.0,177.2L595.8,177.2L597.6,177.1L599.5,177.1L601.3,177.0L603.1,176.9L604.9,176.9L606.7,176.8L608.5,176.7L610.3,176.5L612.1,176.4L613.9,176.3L614.6,176.2Z" fill="#00e830"/>
<path d="M619.9,178.1L621.7,177.8L623.4,177.5L625.2,177.2L626.9,177.0L628.7,176.7L629.2,178.3L629.2,178.5L627.5,178.8L625.7,179.1L624.0,179.4L622.3,179.8L621.3,180.0L620.6,180.1L618.8,180.5L617.1,180.9L615.4,181.3L613.9,181.7L613.7,181.7L612.0,182.2L610.2,182.6L608.5,183.1L607.6,183.4L606.8,183.6L605.0,184.2L603.3,184.7L602.2,185.1L601.6,185.4L599.9,186.0L598.2,186.6L597.5,186.9L596.5,187.4L594.8,188.1L593.7,188.6L593.1,189.0L591.4,190.0L590.7,190.4L589.8,191.2L588.6,192.2L588.3,192.8L587.5,194.0L587.2,195.8L587.1,196.2L587.1,197.6L587.1,199.4L587.3,201.3L588.1,203.1L588.6,203.7L589.7,205.0L590.9,205.8L592.3,206.8L593.0,207.2L595.0,208.3L595.8,208.7L597.1,209.3L599.0,210.2L600.0,210.6L601.0,211.0L603.0,211.8L604.9,212.5L604.9,212.6L606.9,213.3L608.8,214.0L610.4,214.5L610.8,214.6L612.7,215.3L614.7,215.9L616.6,216.4L616.7,216.4L618.5,217.0L620.5,217.5L622.4,218.0L624.1,218.4L624.3,218.5L626.2,219.0L628.1,219.4L630.1,219.8L632.0,220.2L633.4,220.5L633.9,220.5L634.4,220.5L635.7,220.3L637.5,220.1L637.6,220.5L637.8,222.4L637.9,223.1L636.1,223.2L634.2,223.3L632.3,223.0L630.4,222.7L628.5,222.4L627.4,222.2L626.6,222.0L624.7,221.7L622.8,221.3L620.9,220.9L619.0,220.6L617.1,220.2L616.4,220.1L615.2,219.9L613.3,219.5L611.3,219.2L609.4,218.8L607.5,218.5L605.6,218.2L603.9,218.0L603.7,218.0L601.8,217.7L599.9,217.4L598.1,217.2L596.2,217.0L594.3,216.7L592.4,216.5L590.5,216.4L588.6,216.2L586.7,216.0L584.8,215.8L584.0,215.8L583.0,215.6L581.1,215.4L579.2,215.2L577.3,215.0L575.4,214.8L573.5,214.6L571.6,214.4L569.7,214.2L567.8,214.1L566.0,213.9L564.1,213.6L563.7,213.5L562.1,213.0L560.2,212.3L558.6,211.6L558.2,211.3L556.2,209.7L556.1,209.5L555.0,207.9L554.4,206.1L554.2,204.3L554.1,202.5L554.1,200.6L554.1,198.8L554.0,197.3L554.0,197.0L554.1,195.2L554.1,193.4L554.2,191.6L554.4,189.8L554.4,189.7L555.0,188.0L555.7,186.9L556.2,186.2L557.3,185.4L558.7,184.4L558.9,184.3L560.7,183.7L562.4,183.3L564.2,182.9L565.7,182.7L566.0,182.7L567.8,182.7L569.7,182.6L571.5,182.6L573.3,182.6L575.2,182.5L577.0,182.5L578.8,182.5L580.7,182.4L582.5,182.4L584.4,182.3L586.2,182.3L588.0,182.2L589.8,182.1L591.7,182.0L593.5,181.9L595.3,181.7L597.1,181.6L598.3,181.4L598.9,181.4L600.6,181.2L602.4,180.9L604.2,180.7L605.9,180.4L607.7,180.1L609.5,179.8L609.7,179.8L611.2,179.5L612.9,179.2L614.7,178.9L616.4,178.6L618.2,178.4L619.7,178.1Z" fill="#40e000"/>
<path d="M622.3,179.8L624.0,179.4L625.7,179.1L627.5,178.8L629.2,178.5L629.7,180.1L629.8,180.2L628.0,180.5L626.3,180.9L624.6,181.2L622.9,181.6L622.1,181.8L621.1,182.0L619.4,182.5L617.7,183.0L616.0,183.5L615.8,183.5L614.3,184.0L612.5,184.6L610.8,185.3L610.7,185.3L609.1,186.0L607.4,186.7L606.6,187.0L605.7,187.5L604.1,188.5L603.5,188.8L602.5,189.6L601.2,190.6L600.9,191.0L599.8,192.4L599.5,193.3L599.2,194.2L598.9,196.0L598.9,197.8L598.9,199.6L598.9,199.7L599.1,201.5L599.7,203.3L599.7,203.4L600.9,205.2L602.1,206.3L602.9,207.0L604.3,207.9L605.9,208.9L606.4,209.1L608.4,210.1L609.8,210.8L610.3,211.1L612.3,211.9L614.3,212.7L614.5,212.7L616.2,213.4L618.2,214.0L620.1,214.7L620.2,214.7L622.0,215.3L624.0,215.8L625.9,216.3L627.2,216.7L627.8,216.8L629.7,217.3L631.7,217.7L633.6,218.1L635.4,217.9L637.2,217.5L637.4,218.7L637.5,220.1L635.7,220.3L634.4,220.5L633.9,220.5L633.4,220.5L632.0,220.2L630.1,219.8L628.1,219.4L626.2,219.0L624.3,218.5L624.1,218.4L622.4,218.0L620.5,217.5L618.5,217.0L616.7,216.4L616.6,216.4L614.7,215.9L612.7,215.3L610.8,214.6L610.4,214.5L608.8,214.0L606.9,213.3L604.9,212.6L604.9,212.5L603.0,211.8L601.0,211.0L600.0,210.6L599.0,210.2L597.1,209.3L595.8,208.7L595.0,208.3L593.0,207.2L592.3,206.8L590.9,205.8L589.7,205.0L588.6,203.7L588.1,203.1L587.3,201.3L587.1,199.4L587.1,197.6L587.1,196.2L587.2,195.8L587.5,194.0L588.3,192.8L588.6,192.2L589.8,191.2L590.7,190.4L591.4,190.0L593.1,189.0L593.7,188.6L594.8,188.1L596.5,187.4L597.5,186.9L598.2,186.6L599.9,186.0L601.6,185.4L602.2,185.1L603.3,184.7L605.0,184.2L606.8,183.6L607.6,183.4L608.5,183.1L610.2,182.6L612.0,182.2L613.7,181.7L613.9,181.7L615.4,181.3L617.1,180.9L618.8,180.5L620.6,180.1L621.3,180.0Z" fill="#a0f000"/>
<path d="M622.9,181.6L624.6,181.2L626.3,180.9L628.0,180.5L629.8,180.2L630.3,181.9L630.3,182.0L628.6,182.4L626.8,182.7L625.1,183.1L623.4,183.6L623.0,183.6L621.6,184.1L619.9,184.6L618.2,185.2L617.6,185.4L616.5,185.9L614.8,186.6L613.5,187.2L613.1,187.4L611.4,188.4L610.5,188.9L609.8,189.5L608.5,190.7L608.3,191.0L607.3,192.5L607.0,193.7L606.8,194.3L606.6,196.2L606.6,198.0L606.6,199.8L606.8,201.6L607.3,203.5L608.4,205.3L609.6,206.4L610.3,207.2L611.7,208.1L613.3,209.1L613.8,209.3L615.8,210.3L617.2,211.0L617.8,211.2L619.8,212.0L621.7,212.7L622.4,212.9L623.7,213.3L625.6,213.9L627.5,214.4L629.4,214.9L629.5,214.9L631.4,215.3L633.3,215.7L635.1,215.5L636.9,215.2L637.2,216.9L637.2,217.5L635.4,217.9L633.6,218.1L631.7,217.7L629.7,217.3L627.8,216.8L627.2,216.7L625.9,216.3L624.0,215.8L622.0,215.3L620.2,214.7L620.1,214.7L618.2,214.0L616.2,213.4L614.5,212.7L614.3,212.7L612.3,211.9L610.3,211.1L609.8,210.8L608.4,210.1L606.4,209.1L605.9,208.9L604.3,207.9L602.9,207.0L602.1,206.3L600.9,205.2L599.7,203.4L599.7,203.3L599.1,201.5L598.9,199.7L598.9,199.6L598.9,197.8L598.9,196.0L599.2,194.2L599.5,193.3L599.8,192.4L600.9,191.0L601.2,190.6L602.5,189.6L603.5,188.8L604.1,188.5L605.7,187.5L606.6,187.0L607.4,186.7L609.1,186.0L610.7,185.3L610.8,185.3L612.5,184.6L614.3,184.0L615.8,183.5L616.0,183.5L617.7,183.0L619.4,182.5L621.1,182.0L622.1,181.8Z" fill="#f0ff00"/>
<path d="M623.4,183.6L625.1,183.1L626.8,182.7L628.6,182.4L630.3,182.0L630.8,183.8L630.9,184.1L629.1,184.5L627.3,184.9L625.6,185.3L624.9,185.5L623.9,185.9L622.1,186.5L620.4,187.2L620.2,187.3L618.8,188.1L617.1,189.0L617.0,189.0L615.6,190.4L615.1,190.8L614.1,192.4L613.9,192.6L613.5,194.5L613.3,196.3L613.3,197.4L613.3,198.1L613.3,199.9L613.5,201.8L614.0,203.6L614.9,205.0L615.1,205.4L617.2,207.3L617.2,207.3L619.3,208.6L620.3,209.2L621.3,209.6L623.3,210.5L625.0,211.1L625.3,211.2L627.2,211.8L629.1,212.3L631.1,212.8L632.7,213.1L633.0,213.2L634.1,213.1L634.8,213.1L636.6,212.8L636.7,213.2L636.9,215.0L636.9,215.2L635.1,215.5L633.3,215.7L631.4,215.3L629.5,214.9L629.4,214.9L627.5,214.4L625.6,213.9L623.7,213.3L622.4,212.9L621.7,212.7L619.8,212.0L617.8,211.2L617.2,211.0L615.8,210.3L613.8,209.3L613.3,209.1L611.7,208.1L610.3,207.2L609.6,206.4L608.4,205.3L607.3,203.5L606.8,201.6L606.6,199.8L606.6,198.0L606.6,196.2L606.8,194.3L607.0,193.7L607.3,192.5L608.3,191.0L608.5,190.7L609.8,189.5L610.5,188.9L611.4,188.4L613.1,187.4L613.5,187.2L614.8,186.6L616.5,185.9L617.6,185.4L618.2,185.2L619.9,184.6L621.6,184.1L623.0,183.6Z" fill="#ffc400"/>
<path d="M625.6,185.3L627.3,184.9L629.1,184.5L630.9,184.1L631.2,185.6L631.5,186.9L629.7,187.3L629.1,187.4L628.0,187.8L626.3,188.5L624.6,189.2L624.6,189.2L623.0,190.4L622.3,191.0L621.5,192.1L621.0,192.8L620.5,194.6L620.4,195.9L620.4,196.4L620.4,198.2L620.4,200.1L620.6,201.9L621.2,203.7L622.3,205.3L622.6,205.6L624.5,207.0L625.2,207.5L626.6,208.1L628.6,208.9L630.2,209.4L630.6,209.5L632.5,209.9L634.4,210.0L636.2,209.7L636.5,211.4L636.6,212.8L634.8,213.1L634.1,213.1L633.0,213.2L632.7,213.1L631.1,212.8L629.1,212.3L627.2,211.8L625.3,211.2L625.0,211.1L623.3,210.5L621.3,209.6L620.3,209.2L619.3,208.6L617.2,207.3L617.2,207.3L615.1,205.4L614.9,205.0L614.0,203.6L613.5,201.8L613.3,199.9L613.3,198.1L613.3,197.4L613.3,196.3L613.5,194.5L613.9,192.6L614.1,192.4L615.1,190.8L615.6,190.4L617.0,189.0L617.1,189.0L618.8,188.1L620.2,187.3L620.4,187.2L622.1,186.5L623.9,185.9L624.9,185.5Z" fill="#ff7b00"/>
<path d="M629.7,187.3L631.5,186.9L631.6,187.5L632.0,189.3L632.4,191.1L632.7,193.0L633.1,194.8L633.5,196.6L633.9,198.5L634.3,200.3L634.7,202.2L635.1,204.0L635.4,205.8L635.8,207.7L636.2,209.5L636.2,209.7L634.4,210.0L632.5,209.9L630.6,209.5L630.2,209.4L628.6,208.9L626.6,208.1L625.2,207.5L624.5,207.0L622.6,205.6L622.3,205.3L621.2,203.7L620.6,201.9L620.4,200.1L620.4,198.2L620.4,196.4L620.4,195.9L620.5,194.6L621.0,192.8L621.5,192.1L622.3,191.0L623.0,190.4L624.6,189.2L624.6,189.2L626.3,188.5L628.0,187.8L629.1,187.4Z" fill="#ff2a00"/>
</g>
<path d="M473.9,88.6h2.3v2.3h-2.3zM479.9,88.6h2.3v2.3h-2.3zM486.0,88.6h2.3v2.3h-2.3zM492.0,88.7h2.3v2.3h-2.3zM498.1,88.7h2.3v2.3h-2.3zM504.2,88.7h2.3v2.3h-2.3zM510.2,88.7h2.3v2.3h-2.3zM516.3,88.7h2.3v2.3h-2.3zM522.4,88.7h2.3v2.3h-2.3zM528.4,88.7h2.3v2.3h-2.3zM534.5,88.7h2.3v2.3h-2.3zM540.6,88.7h2.3v2.3h-2.3zM546.6,88.7h2.3v2.3h-2.3zM552.7,88.7h2.3v2.3h-2.3zM558.8,88.8h2.3v2.3h-2.3zM564.8,88.8h2.3v2.3h-2.3zM570.9,88.8h2.3v2.3h-2.3zM577.0,88.8h2.3v2.3h-2.3zM583.0,88.8h2.3v2.3h-2.3zM589.1,88.8h2.3v2.3h-2.3zM478.4,97.6h2.3v2.3h-2.3zM484.4,97.6h2.3v2.3h-2.3zM490.4,97.6h2.3v2.3h-2.3zM496.5,97.7h2.3v2.3h-2.3zM502.5,97.7h2.3v2.3h-2.3zM508.6,97.7h2.3v2.3h-2.3zM514.6,97.7h2.3v2.3h-2.3zM520.6,97.7h2.3v2.3h-2.3zM526.7,97.7h2.3v2.3h-2.3zM532.7,97.8h2.3v2.3h-2.3zM538.8,97.8h2.3v2.3h-2.3zM544.8,97.8h2.3v2.3h-2.3zM550.9,97.8h2.3v2.3h-2.3zM556.9,97.8h2.3v2.3h-2.3zM562.9,97.9h2.3v2.3h-2.3zM569.0,97.9h2.3v2.3h-2.3zM575.0,97.9h2.3v2.3h-2.3zM581.1,97.9h2.3v2.3h-2.3zM587.1,97.9h2.3v2.3h-2.3zM593.1,97.9h2.3v2.3h-2.3zM482.9,106.6h2.3v2.3h-2.3zM488.9,106.6h2.3v2.3h-2.3zM494.9,106.6h2.3v2.3h-2.3zM500.9,106.7h2.3v2.3h-2.3zM506.9,106.7h2.3v2.3h-2.3zM512.9,106.7h2.3v2.3h-2.3zM518.9,106.7h2.3v2.3h-2.3zM524.9,106.8h2.3v2.3h-2.3zM531.0,106.8h2.3v2.3h-2.3zM537.0,106.8h2.3v2.3h-2.3zM543.0,106.8h2.3v2.3h-2.3zM549.0,106.9h2.3v2.3h-2.3zM555.0,106.9h2.3v2.3h-2.3zM561.0,106.9h2.3v2.3h-2.3zM567.0,107.0h2.3v2.3h-2.3zM573.0,107.0h2.3v2.3h-2.3zM579.1,107.0h2.3v2.3h-2.3zM585.1,107.0h2.3v2.3h-2.3zM591.1,107.1h2.3v2.3h-2.3zM597.1,107.1h2.3v2.3h-2.3zM486.9,115.6h2.3v2.3h-2.3zM492.9,115.6h2.3v2.3h-2.3zM498.9,115.6h2.3v2.3h-2.3zM504.9,115.7h2.3v2.3h-2.3zM510.9,115.7h2.3v2.3h-2.3zM516.9,115.7h2.3v2.3h-2.3zM522.9,115.8h2.3v2.3h-2.3zM528.9,115.8h2.3v2.3h-2.3zM534.9,115.8h2.3v2.3h-2.3zM540.9,115.9h2.3v2.3h-2.3zM546.9,115.9h2.3v2.3h-2.3zM552.9,115.9h2.3v2.3h-2.3zM558.9,116.0h2.3v2.3h-2.3zM564.9,116.0h2.3v2.3h-2.3zM570.9,116.1h2.3v2.3h-2.3zM576.9,116.1h2.3v2.3h-2.3zM582.9,116.1h2.3v2.3h-2.3zM588.9,116.2h2.3v2.3h-2.3zM594.9,116.2h2.3v2.3h-2.3zM600.9,116.2h2.3v2.3h-2.3zM491.0,124.5h2.3v2.3h-2.3zM497.0,124.6h2.3v2.3h-2.3zM502.9,124.6h2.3v2.3h-2.3zM508.9,124.7h2.3v2.3h-2.3zM514.9,124.7h2.3v2.3h-2.3zM520.9,124.8h2.3v2.3h-2.3zM526.9,124.8h2.3v2.3h-2.3zM532.9,124.8h2.3v2.3h-2.3zM538.9,124.9h2.3v2.3h-2.3zM544.9,124.9h2.3v2.3h-2.3zM550.9,125.0h2.3v2.3h-2.3zM556.8,125.0h2.3v2.3h-2.3zM562.8,125.1h2.3v2.3h-2.3zM568.8,125.1h2.3v2.3h-2.3zM574.8,125.2h2.3v2.3h-2.3zM580.8,125.2h2.3v2.3h-2.3zM586.8,125.2h2.3v2.3h-2.3zM592.8,125.3h2.3v2.3h-2.3zM598.8,125.3h2.3v2.3h-2.3zM604.8,125.4h2.3v2.3h-2.3zM494.6,133.5h2.3v2.3h-2.3zM500.6,133.6h2.3v2.3h-2.3zM506.6,133.6h2.3v2.3h-2.3zM512.6,133.7h2.3v2.3h-2.3zM518.5,133.7h2.3v2.3h-2.3zM524.5,133.8h2.3v2.3h-2.3zM530.5,133.8h2.3v2.3h-2.3zM536.5,133.9h2.3v2.3h-2.3zM542.4,133.9h2.3v2.3h-2.3zM548.4,134.0h2.3v2.3h-2.3zM554.4,134.0h2.3v2.3h-2.3zM560.4,134.1h2.3v2.3h-2.3zM566.3,134.1h2.3v2.3h-2.3zM572.3,134.2h2.3v2.3h-2.3zM578.3,134.3h2.3v2.3h-2.3zM584.3,134.3h2.3v2.3h-2.3zM590.2,134.4h2.3v2.3h-2.3zM596.2,134.4h2.3v2.3h-2.3zM602.2,134.5h2.3v2.3h-2.3zM608.2,134.5h2.3v2.3h-2.3zM497.8,142.5h2.3v2.3h-2.3zM503.7,142.6h2.3v2.3h-2.3zM509.7,142.6h2.3v2.3h-2.3zM515.7,142.7h2.3v2.3h-2.3zM521.6,142.7h2.3v2.3h-2.3zM527.6,142.8h2.3v2.3h-2.3zM533.6,142.9h2.3v2.3h-2.3zM539.6,142.9h2.3v2.3h-2.3zM545.5,143.0h2.3v2.3h-2.3zM551.5,143.0h2.3v2.3h-2.3zM557.5,143.1h2.3v2.3h-2.3zM563.4,143.2h2.3v2.3h-2.3zM569.4,143.2h2.3v2.3h-2.3zM575.4,143.3h2.3v2.3h-2.3zM581.4,143.4h2.3v2.3h-2.3zM587.3,143.4h2.3v2.3h-2.3zM593.3,143.5h2.3v2.3h-2.3zM599.3,143.5h2.3v2.3h-2.3zM605.2,143.6h2.3v2.3h-2.3zM611.2,143.7h2.3v2.3h-2.3zM500.9,151.5h2.3v2.3h-2.3zM506.9,151.6h2.3v2.3h-2.3zM512.8,151.6h2.3v2.3h-2.3zM518.8,151.7h2.3v2.3h-2.3zM524.8,151.8h2.3v2.3h-2.3zM530.7,151.8h2.3v2.3h-2.3zM536.7,151.9h2.3v2.3h-2.3zM542.7,152.0h2.3v2.3h-2.3zM548.6,152.0h2.3v2.3h-2.3zM554.6,152.1h2.3v2.3h-2.3zM560.6,152.2h2.3v2.3h-2.3zM566.5,152.2h2.3v2.3h-2.3zM572.5,152.3h2.3v2.3h-2.3zM578.5,152.4h2.3v2.3h-2.3zM584.4,152.5h2.3v2.3h-2.3zM590.4,152.5h2.3v2.3h-2.3zM596.4,152.6h2.3v2.3h-2.3zM602.3,152.7h2.3v2.3h-2.3zM608.3,152.7h2.3v2.3h-2.3zM614.3,152.8h2.3v2.3h-2.3zM503.2,160.5h2.3v2.3h-2.3zM509.2,160.5h2.3v2.3h-2.3zM515.2,160.6h2.3v2.3h-2.3zM521.2,160.7h2.3v2.3h-2.3zM527.2,160.8h2.3v2.3h-2.3zM533.2,160.9h2.3v2.3h-2.3zM539.2,160.9h2.3v2.3h-2.3zM545.2,161.0h2.3v2.3h-2.3zM551.2,161.1h2.3v2.3h-2.3zM557.2,161.2h2.3v2.3h-2.3zM563.2,161.2h2.3v2.3h-2.3zM569.2,161.3h2.3v2.3h-2.3zM575.2,161.4h2.3v2.3h-2.3zM581.2,161.5h2.3v2.3h-2.3zM587.2,161.6h2.3v2.3h-2.3zM593.2,161.6h2.3v2.3h-2.3zM599.2,161.7h2.3v2.3h-2.3zM605.2,161.8h2.3v2.3h-2.3zM611.2,161.9h2.3v2.3h-2.3zM617.2,161.9h2.3v2.3h-2.3zM505.5,169.4h2.3v2.3h-2.3zM511.5,169.5h2.3v2.3h-2.3zM517.6,169.6h2.3v2.3h-2.3zM523.6,169.7h2.3v2.3h-2.3zM529.6,169.8h2.3v2.3h-2.3zM535.7,169.9h2.3v2.3h-2.3zM541.7,170.0h2.3v2.3h-2.3zM547.7,170.0h2.3v2.3h-2.3zM553.8,170.1h2.3v2.3h-2.3zM559.8,170.2h2.3v2.3h-2.3zM565.8,170.3h2.3v2.3h-2.3zM571.8,170.4h2.3v2.3h-2.3zM577.9,170.5h2.3v2.3h-2.3zM583.9,170.6h2.3v2.3h-2.3zM589.9,170.7h2.3v2.3h-2.3zM596.0,170.7h2.3v2.3h-2.3zM602.0,170.8h2.3v2.3h-2.3zM608.0,170.9h2.3v2.3h-2.3zM614.1,171.0h2.3v2.3h-2.3zM620.1,171.1h2.3v2.3h-2.3zM507.6,178.4h2.3v2.3h-2.3zM513.6,178.5h2.3v2.3h-2.3zM519.7,178.6h2.3v2.3h-2.3zM525.8,178.7h2.3v2.3h-2.3zM531.8,178.8h2.3v2.3h-2.3zM537.9,178.9h2.3v2.3h-2.3zM544.0,179.0h2.3v2.3h-2.3zM550.1,179.1h2.3v2.3h-2.3zM556.1,179.2h2.3v2.3h-2.3zM562.2,179.3h2.3v2.3h-2.3zM568.3,179.4h2.3v2.3h-2.3zM574.4,179.5h2.3v2.3h-2.3zM580.4,179.6h2.3v2.3h-2.3zM586.5,179.7h2.3v2.3h-2.3zM592.6,179.8h2.3v2.3h-2.3zM598.7,179.8h2.3v2.3h-2.3zM604.7,179.9h2.3v2.3h-2.3zM610.8,180.0h2.3v2.3h-2.3zM616.9,180.1h2.3v2.3h-2.3zM623.0,180.2h2.3v2.3h-2.3zM509.2,187.4h2.3v2.3h-2.3zM515.3,187.5h2.3v2.3h-2.3zM521.4,187.6h2.3v2.3h-2.3zM527.5,187.7h2.3v2.3h-2.3zM533.6,187.8h2.3v2.3h-2.3zM539.7,187.9h2.3v2.3h-2.3zM545.8,188.0h2.3v2.3h-2.3zM551.9,188.1h2.3v2.3h-2.3zM558.0,188.2h2.3v2.3h-2.3zM564.1,188.3h2.3v2.3h-2.3zM570.1,188.4h2.3v2.3h-2.3zM576.2,188.5h2.3v2.3h-2.3zM582.3,188.6h2.3v2.3h-2.3zM588.4,188.8h2.3v2.3h-2.3zM594.5,188.9h2.3v2.3h-2.3zM600.6,189.0h2.3v2.3h-2.3zM606.7,189.1h2.3v2.3h-2.3zM612.8,189.2h2.3v2.3h-2.3zM618.9,189.3h2.3v2.3h-2.3zM625.0,189.4h2.3v2.3h-2.3zM510.8,196.4h2.3v2.3h-2.3zM517.0,196.5h2.3v2.3h-2.3zM523.1,196.6h2.3v2.3h-2.3zM529.2,196.7h2.3v2.3h-2.3zM535.3,196.8h2.3v2.3h-2.3zM541.4,196.9h2.3v2.3h-2.3zM547.5,197.1h2.3v2.3h-2.3zM553.6,197.2h2.3v2.3h-2.3zM559.7,197.3h2.3v2.3h-2.3zM565.8,197.4h2.3v2.3h-2.3zM571.9,197.5h2.3v2.3h-2.3zM578.0,197.6h2.3v2.3h-2.3zM584.2,197.7h2.3v2.3h-2.3zM590.3,197.8h2.3v2.3h-2.3zM596.4,198.0h2.3v2.3h-2.3zM602.5,198.1h2.3v2.3h-2.3zM608.6,198.2h2.3v2.3h-2.3zM614.7,198.3h2.3v2.3h-2.3zM620.8,198.4h2.3v2.3h-2.3zM626.9,198.5h2.3v2.3h-2.3zM512.2,205.4h2.3v2.3h-2.3zM518.3,205.5h2.3v2.3h-2.3zM524.5,205.6h2.3v2.3h-2.3zM530.6,205.7h2.3v2.3h-2.3zM536.8,205.8h2.3v2.3h-2.3zM542.9,206.0h2.3v2.3h-2.3zM549.0,206.1h2.3v2.3h-2.3zM555.2,206.2h2.3v2.3h-2.3zM561.3,206.3h2.3v2.3h-2.3zM567.4,206.4h2.3v2.3h-2.3zM573.6,206.6h2.3v2.3h-2.3zM579.7,206.7h2.3v2.3h-2.3zM585.9,206.8h2.3v2.3h-2.3zM592.0,206.9h2.3v2.3h-2.3zM598.1,207.1h2.3v2.3h-2.3zM604.3,207.2h2.3v2.3h-2.3zM610.4,207.3h2.3v2.3h-2.3zM616.5,207.4h2.3v2.3h-2.3zM622.7,207.5h2.3v2.3h-2.3zM628.8,207.7h2.3v2.3h-2.3zM513.4,214.3h2.3v2.3h-2.3zM519.5,214.5h2.3v2.3h-2.3zM525.6,214.6h2.3v2.3h-2.3zM531.8,214.7h2.3v2.3h-2.3zM537.9,214.9h2.3v2.3h-2.3zM544.1,215.0h2.3v2.3h-2.3zM550.2,215.1h2.3v2.3h-2.3zM556.3,215.2h2.3v2.3h-2.3zM562.5,215.4h2.3v2.3h-2.3zM568.6,215.5h2.3v2.3h-2.3zM574.8,215.6h2.3v2.3h-2.3zM580.9,215.8h2.3v2.3h-2.3zM587.0,215.9h2.3v2.3h-2.3zM593.2,216.0h2.3v2.3h-2.3zM599.3,216.2h2.3v2.3h-2.3zM605.5,216.3h2.3v2.3h-2.3zM611.6,216.4h2.3v2.3h-2.3zM617.7,216.5h2.3v2.3h-2.3zM623.9,216.7h2.3v2.3h-2.3zM630.0,216.8h2.3v2.3h-2.3zM514.5,223.3h2.3v2.3h-2.3zM520.7,223.5h2.3v2.3h-2.3zM526.8,223.6h2.3v2.3h-2.3zM532.9,223.7h2.3v2.3h-2.3zM539.1,223.9h2.3v2.3h-2.3zM545.2,224.0h2.3v2.3h-2.3zM551.3,224.1h2.3v2.3h-2.3zM557.5,224.3h2.3v2.3h-2.3zM563.6,224.4h2.3v2.3h-2.3zM569.8,224.6h2.3v2.3h-2.3zM575.9,224.7h2.3v2.3h-2.3zM582.0,224.8h2.3v2.3h-2.3zM588.2,225.0h2.3v2.3h-2.3zM594.3,225.1h2.3v2.3h-2.3zM600.4,225.3h2.3v2.3h-2.3zM606.6,225.4h2.3v2.3h-2.3zM612.7,225.5h2.3v2.3h-2.3zM618.9,225.7h2.3v2.3h-2.3zM625.0,225.8h2.3v2.3h-2.3zM631.1,225.9h2.3v2.3h-2.3zM515.4,232.3h2.3v2.3h-2.3zM521.6,232.4h2.3v2.3h-2.3zM527.7,232.6h2.3v2.3h-2.3zM533.9,232.7h2.3v2.3h-2.3zM540.0,232.9h2.3v2.3h-2.3zM546.2,233.0h2.3v2.3h-2.3zM552.3,233.2h2.3v2.3h-2.3zM558.5,233.3h2.3v2.3h-2.3zM564.6,233.5h2.3v2.3h-2.3zM570.8,233.6h2.3v2.3h-2.3zM576.9,233.8h2.3v2.3h-2.3zM583.1,233.9h2.3v2.3h-2.3zM589.2,234.1h2.3v2.3h-2.3zM595.4,234.2h2.3v2.3h-2.3zM601.5,234.4h2.3v2.3h-2.3zM607.7,234.5h2.3v2.3h-2.3zM613.8,234.6h2.3v2.3h-2.3zM619.9,234.8h2.3v2.3h-2.3zM626.1,234.9h2.3v2.3h-2.3zM632.2,235.1h2.3v2.3h-2.3zM516.2,241.3h2.3v2.3h-2.3zM522.4,241.4h2.3v2.3h-2.3zM528.5,241.6h2.3v2.3h-2.3zM534.6,241.7h2.3v2.3h-2.3zM540.8,241.9h2.3v2.3h-2.3zM546.9,242.1h2.3v2.3h-2.3zM553.1,242.2h2.3v2.3h-2.3zM559.2,242.4h2.3v2.3h-2.3zM565.4,242.5h2.3v2.3h-2.3zM571.5,242.7h2.3v2.3h-2.3zM577.6,242.8h2.3v2.3h-2.3zM583.8,243.0h2.3v2.3h-2.3zM589.9,243.1h2.3v2.3h-2.3zM596.1,243.3h2.3v2.3h-2.3zM602.2,243.5h2.3v2.3h-2.3zM608.4,243.6h2.3v2.3h-2.3zM614.5,243.8h2.3v2.3h-2.3zM620.7,243.9h2.3v2.3h-2.3zM626.8,244.1h2.3v2.3h-2.3zM632.9,244.2h2.3v2.3h-2.3zM517.0,250.3h2.3v2.3h-2.3zM523.1,250.4h2.3v2.3h-2.3zM529.2,250.6h2.3v2.3h-2.3zM535.4,250.7h2.3v2.3h-2.3zM541.5,250.9h2.3v2.3h-2.3zM547.7,251.1h2.3v2.3h-2.3zM553.8,251.2h2.3v2.3h-2.3zM559.9,251.4h2.3v2.3h-2.3zM566.1,251.6h2.3v2.3h-2.3zM572.2,251.7h2.3v2.3h-2.3zM578.4,251.9h2.3v2.3h-2.3zM584.5,252.1h2.3v2.3h-2.3zM590.6,252.2h2.3v2.3h-2.3zM596.8,252.4h2.3v2.3h-2.3zM602.9,252.6h2.3v2.3h-2.3zM609.1,252.7h2.3v2.3h-2.3zM615.2,252.9h2.3v2.3h-2.3zM621.3,253.0h2.3v2.3h-2.3zM627.5,253.2h2.3v2.3h-2.3zM633.6,253.4h2.3v2.3h-2.3zM517.4,259.2h2.3v2.3h-2.3zM523.6,259.4h2.3v2.3h-2.3zM529.7,259.6h2.3v2.3h-2.3zM535.9,259.8h2.3v2.3h-2.3zM542.0,259.9h2.3v2.3h-2.3zM548.2,260.1h2.3v2.3h-2.3zM554.3,260.3h2.3v2.3h-2.3zM560.5,260.4h2.3v2.3h-2.3zM566.6,260.6h2.3v2.3h-2.3zM572.8,260.8h2.3v2.3h-2.3zM578.9,261.0h2.3v2.3h-2.3zM585.1,261.1h2.3v2.3h-2.3zM591.2,261.3h2.3v2.3h-2.3zM597.4,261.5h2.3v2.3h-2.3zM603.5,261.7h2.3v2.3h-2.3zM609.7,261.8h2.3v2.3h-2.3zM615.8,262.0h2.3v2.3h-2.3zM622.0,262.2h2.3v2.3h-2.3zM628.1,262.3h2.3v2.3h-2.3zM634.3,262.5h2.3v2.3h-2.3zM517.7,268.2h2.3v2.3h-2.3zM523.9,268.4h2.3v2.3h-2.3zM530.0,268.6h2.3v2.3h-2.3zM536.2,268.8h2.3v2.3h-2.3zM542.4,268.9h2.3v2.3h-2.3zM548.5,269.1h2.3v2.3h-2.3zM554.7,269.3h2.3v2.3h-2.3zM560.9,269.5h2.3v2.3h-2.3zM567.0,269.7h2.3v2.3h-2.3zM573.2,269.8h2.3v2.3h-2.3zM579.4,270.0h2.3v2.3h-2.3zM585.5,270.2h2.3v2.3h-2.3zM591.7,270.4h2.3v2.3h-2.3zM597.9,270.6h2.3v2.3h-2.3zM604.0,270.8h2.3v2.3h-2.3zM610.2,270.9h2.3v2.3h-2.3zM616.4,271.1h2.3v2.3h-2.3zM622.5,271.3h2.3v2.3h-2.3zM628.7,271.5h2.3v2.3h-2.3zM634.8,271.7h2.3v2.3h-2.3zM518.0,277.2h2.3v2.3h-2.3zM524.1,277.4h2.3v2.3h-2.3zM530.3,277.6h2.3v2.3h-2.3zM536.5,277.8h2.3v2.3h-2.3zM542.7,278.0h2.3v2.3h-2.3zM548.8,278.1h2.3v2.3h-2.3zM555.0,278.3h2.3v2.3h-2.3zM561.2,278.5h2.3v2.3h-2.3zM567.3,278.7h2.3v2.3h-2.3zM573.5,278.9h2.3v2.3h-2.3zM579.7,279.1h2.3v2.3h-2.3zM585.9,279.3h2.3v2.3h-2.3zM592.0,279.5h2.3v2.3h-2.3zM598.2,279.7h2.3v2.3h-2.3zM604.4,279.9h2.3v2.3h-2.3zM610.5,280.0h2.3v2.3h-2.3zM616.7,280.2h2.3v2.3h-2.3zM622.9,280.4h2.3v2.3h-2.3zM629.1,280.6h2.3v2.3h-2.3zM635.2,280.8h2.3v2.3h-2.3zM517.6,286.2h2.3v2.3h-2.3zM523.8,286.4h2.3v2.3h-2.3zM530.0,286.6h2.3v2.3h-2.3zM536.2,286.8h2.3v2.3h-2.3zM542.4,287.0h2.3v2.3h-2.3zM548.5,287.2h2.3v2.3h-2.3zM554.7,287.4h2.3v2.3h-2.3zM560.9,287.6h2.3v2.3h-2.3zM567.1,287.8h2.3v2.3h-2.3zM573.2,288.0h2.3v2.3h-2.3zM579.4,288.2h2.3v2.3h-2.3zM585.6,288.4h2.3v2.3h-2.3zM591.8,288.6h2.3v2.3h-2.3zM597.9,288.8h2.3v2.3h-2.3zM604.1,289.0h2.3v2.3h-2.3zM610.3,289.2h2.3v2.3h-2.3zM616.5,289.4h2.3v2.3h-2.3zM622.7,289.6h2.3v2.3h-2.3zM628.8,289.8h2.3v2.3h-2.3zM635.0,290.0h2.3v2.3h-2.3zM517.2,295.1h2.3v2.3h-2.3zM523.4,295.4h2.3v2.3h-2.3zM529.6,295.6h2.3v2.3h-2.3zM535.7,295.8h2.3v2.3h-2.3zM541.9,296.0h2.3v2.3h-2.3zM548.1,296.2h2.3v2.3h-2.3zM554.3,296.4h2.3v2.3h-2.3zM560.5,296.6h2.3v2.3h-2.3zM566.7,296.8h2.3v2.3h-2.3zM572.9,297.0h2.3v2.3h-2.3zM579.1,297.2h2.3v2.3h-2.3zM585.3,297.4h2.3v2.3h-2.3zM591.5,297.6h2.3v2.3h-2.3zM597.6,297.9h2.3v2.3h-2.3zM603.8,298.1h2.3v2.3h-2.3zM610.0,298.3h2.3v2.3h-2.3zM616.2,298.5h2.3v2.3h-2.3zM622.4,298.7h2.3v2.3h-2.3zM628.6,298.9h2.3v2.3h-2.3zM634.8,299.1h2.3v2.3h-2.3zM516.7,304.1h2.3v2.3h-2.3zM522.9,304.3h2.3v2.3h-2.3zM529.1,304.6h2.3v2.3h-2.3zM535.3,304.8h2.3v2.3h-2.3zM541.5,305.0h2.3v2.3h-2.3zM547.7,305.2h2.3v2.3h-2.3zM553.9,305.4h2.3v2.3h-2.3zM560.1,305.6h2.3v2.3h-2.3zM566.3,305.9h2.3v2.3h-2.3zM572.5,306.1h2.3v2.3h-2.3zM578.7,306.3h2.3v2.3h-2.3zM584.9,306.5h2.3v2.3h-2.3zM591.1,306.7h2.3v2.3h-2.3zM597.3,306.9h2.3v2.3h-2.3zM603.5,307.2h2.3v2.3h-2.3zM609.7,307.4h2.3v2.3h-2.3zM615.9,307.6h2.3v2.3h-2.3zM622.1,307.8h2.3v2.3h-2.3zM628.3,308.0h2.3v2.3h-2.3zM634.5,308.2h2.3v2.3h-2.3zM516.2,313.1h2.3v2.3h-2.3zM522.4,313.3h2.3v2.3h-2.3zM528.6,313.6h2.3v2.3h-2.3zM534.8,313.8h2.3v2.3h-2.3zM541.0,314.0h2.3v2.3h-2.3zM547.2,314.2h2.3v2.3h-2.3zM553.4,314.5h2.3v2.3h-2.3zM559.6,314.7h2.3v2.3h-2.3zM565.8,314.9h2.3v2.3h-2.3zM572.0,315.1h2.3v2.3h-2.3zM578.2,315.4h2.3v2.3h-2.3zM584.4,315.6h2.3v2.3h-2.3zM590.6,315.8h2.3v2.3h-2.3zM596.8,316.0h2.3v2.3h-2.3zM603.0,316.3h2.3v2.3h-2.3zM609.2,316.5h2.3v2.3h-2.3zM615.4,316.7h2.3v2.3h-2.3zM621.6,316.9h2.3v2.3h-2.3zM627.8,317.2h2.3v2.3h-2.3zM634.0,317.4h2.3v2.3h-2.3zM515.3,322.1h2.3v2.3h-2.3zM521.5,322.3h2.3v2.3h-2.3zM527.7,322.6h2.3v2.3h-2.3zM533.9,322.8h2.3v2.3h-2.3zM540.1,323.0h2.3v2.3h-2.3zM546.3,323.3h2.3v2.3h-2.3zM552.5,323.5h2.3v2.3h-2.3zM558.7,323.7h2.3v2.3h-2.3zM564.9,324.0h2.3v2.3h-2.3zM571.1,324.2h2.3v2.3h-2.3zM577.3,324.4h2.3v2.3h-2.3zM583.5,324.7h2.3v2.3h-2.3zM589.7,324.9h2.3v2.3h-2.3zM595.9,325.1h2.3v2.3h-2.3zM602.1,325.4h2.3v2.3h-2.3zM608.3,325.6h2.3v2.3h-2.3zM614.5,325.8h2.3v2.3h-2.3zM620.7,326.1h2.3v2.3h-2.3zM626.8,326.3h2.3v2.3h-2.3zM633.0,326.5h2.3v2.3h-2.3zM514.5,331.1h2.3v2.3h-2.3zM520.7,331.3h2.3v2.3h-2.3zM526.9,331.6h2.3v2.3h-2.3zM533.0,331.8h2.3v2.3h-2.3zM539.2,332.0h2.3v2.3h-2.3zM545.4,332.3h2.3v2.3h-2.3zM551.6,332.5h2.3v2.3h-2.3zM557.8,332.8h2.3v2.3h-2.3zM564.0,333.0h2.3v2.3h-2.3zM570.2,333.2h2.3v2.3h-2.3zM576.4,333.5h2.3v2.3h-2.3zM582.6,333.7h2.3v2.3h-2.3zM588.8,334.0h2.3v2.3h-2.3zM595.0,334.2h2.3v2.3h-2.3zM601.2,334.5h2.3v2.3h-2.3zM607.4,334.7h2.3v2.3h-2.3zM613.6,334.9h2.3v2.3h-2.3zM619.7,335.2h2.3v2.3h-2.3zM625.9,335.4h2.3v2.3h-2.3zM632.1,335.7h2.3v2.3h-2.3zM513.6,340.0h2.3v2.3h-2.3zM519.8,340.3h2.3v2.3h-2.3zM526.0,340.5h2.3v2.3h-2.3zM532.2,340.8h2.3v2.3h-2.3zM538.4,341.0h2.3v2.3h-2.3zM544.5,341.3h2.3v2.3h-2.3zM550.7,341.6h2.3v2.3h-2.3zM556.9,341.8h2.3v2.3h-2.3zM563.1,342.1h2.3v2.3h-2.3zM569.3,342.3h2.3v2.3h-2.3zM575.5,342.6h2.3v2.3h-2.3zM581.7,342.8h2.3v2.3h-2.3zM587.9,343.1h2.3v2.3h-2.3zM594.1,343.3h2.3v2.3h-2.3zM600.3,343.6h2.3v2.3h-2.3zM606.5,343.8h2.3v2.3h-2.3zM612.6,344.1h2.3v2.3h-2.3zM618.8,344.3h2.3v2.3h-2.3zM625.0,344.6h2.3v2.3h-2.3zM631.2,344.8h2.3v2.3h-2.3zM512.6,349.0h2.3v2.3h-2.3zM518.7,349.3h2.3v2.3h-2.3zM524.9,349.5h2.3v2.3h-2.3zM531.1,349.8h2.3v2.3h-2.3zM537.3,350.1h2.3v2.3h-2.3zM543.5,350.3h2.3v2.3h-2.3zM549.7,350.6h2.3v2.3h-2.3zM555.9,350.8h2.3v2.3h-2.3zM562.0,351.1h2.3v2.3h-2.3zM568.2,351.4h2.3v2.3h-2.3zM574.4,351.6h2.3v2.3h-2.3zM580.6,351.9h2.3v2.3h-2.3zM586.8,352.1h2.3v2.3h-2.3zM593.0,352.4h2.3v2.3h-2.3zM599.2,352.7h2.3v2.3h-2.3zM605.4,352.9h2.3v2.3h-2.3zM611.5,353.2h2.3v2.3h-2.3zM617.7,353.4h2.3v2.3h-2.3zM623.9,353.7h2.3v2.3h-2.3zM630.1,354.0h2.3v2.3h-2.3zM511.0,358.0h2.3v2.3h-2.3zM517.2,358.3h2.3v2.3h-2.3zM523.4,358.5h2.3v2.3h-2.3zM529.6,358.8h2.3v2.3h-2.3zM535.8,359.1h2.3v2.3h-2.3zM542.0,359.3h2.3v2.3h-2.3zM548.1,359.6h2.3v2.3h-2.3zM554.3,359.9h2.3v2.3h-2.3zM560.5,360.1h2.3v2.3h-2.3zM566.7,360.4h2.3v2.3h-2.3zM572.9,360.7h2.3v2.3h-2.3zM579.0,361.0h2.3v2.3h-2.3zM585.2,361.2h2.3v2.3h-2.3zM591.4,361.5h2.3v2.3h-2.3zM597.6,361.8h2.3v2.3h-2.3zM603.8,362.0h2.3v2.3h-2.3zM609.9,362.3h2.3v2.3h-2.3zM616.1,362.6h2.3v2.3h-2.3zM622.3,362.8h2.3v2.3h-2.3zM628.5,363.1h2.3v2.3h-2.3zM509.5,367.0h2.3v2.3h-2.3zM515.7,367.3h2.3v2.3h-2.3zM521.9,367.5h2.3v2.3h-2.3zM528.1,367.8h2.3v2.3h-2.3zM534.2,368.1h2.3v2.3h-2.3zM540.4,368.4h2.3v2.3h-2.3zM546.6,368.6h2.3v2.3h-2.3zM552.8,368.9h2.3v2.3h-2.3zM558.9,369.2h2.3v2.3h-2.3zM565.1,369.5h2.3v2.3h-2.3zM571.3,369.8h2.3v2.3h-2.3zM577.5,370.0h2.3v2.3h-2.3zM583.6,370.3h2.3v2.3h-2.3zM589.8,370.6h2.3v2.3h-2.3zM596.0,370.9h2.3v2.3h-2.3zM602.2,371.1h2.3v2.3h-2.3zM608.3,371.4h2.3v2.3h-2.3zM614.5,371.7h2.3v2.3h-2.3zM620.7,372.0h2.3v2.3h-2.3zM626.8,372.2h2.3v2.3h-2.3zM508.0,376.0h2.3v2.3h-2.3zM514.2,376.2h2.3v2.3h-2.3zM520.4,376.5h2.3v2.3h-2.3zM526.5,376.8h2.3v2.3h-2.3zM532.7,377.1h2.3v2.3h-2.3zM538.9,377.4h2.3v2.3h-2.3zM545.0,377.7h2.3v2.3h-2.3zM551.2,378.0h2.3v2.3h-2.3zM557.4,378.2h2.3v2.3h-2.3zM563.6,378.5h2.3v2.3h-2.3zM569.7,378.8h2.3v2.3h-2.3zM575.9,379.1h2.3v2.3h-2.3zM582.1,379.4h2.3v2.3h-2.3zM588.2,379.7h2.3v2.3h-2.3zM594.4,380.0h2.3v2.3h-2.3zM600.6,380.2h2.3v2.3h-2.3zM606.7,380.5h2.3v2.3h-2.3zM612.9,380.8h2.3v2.3h-2.3zM619.1,381.1h2.3v2.3h-2.3zM625.2,381.4h2.3v2.3h-2.3zM506.0,384.9h2.3v2.3h-2.3zM512.1,385.2h2.3v2.3h-2.3zM518.3,385.5h2.3v2.3h-2.3zM524.5,385.8h2.3v2.3h-2.3zM530.7,386.1h2.3v2.3h-2.3zM536.8,386.4h2.3v2.3h-2.3zM543.0,386.7h2.3v2.3h-2.3zM549.2,387.0h2.3v2.3h-2.3zM555.4,387.3h2.3v2.3h-2.3zM561.5,387.6h2.3v2.3h-2.3zM567.7,387.9h2.3v2.3h-2.3zM573.9,388.2h2.3v2.3h-2.3zM580.1,388.5h2.3v2.3h-2.3zM586.2,388.8h2.3v2.3h-2.3zM592.4,389.1h2.3v2.3h-2.3zM598.6,389.4h2.3v2.3h-2.3zM604.8,389.6h2.3v2.3h-2.3zM610.9,389.9h2.3v2.3h-2.3zM617.1,390.2h2.3v2.3h-2.3zM623.3,390.5h2.3v2.3h-2.3zM503.7,393.9h2.3v2.3h-2.3zM509.9,394.2h2.3v2.3h-2.3zM516.0,394.5h2.3v2.3h-2.3zM522.2,394.8h2.3v2.3h-2.3zM528.3,395.1h2.3v2.3h-2.3zM534.5,395.4h2.3v2.3h-2.3zM540.7,395.7h2.3v2.3h-2.3zM546.8,396.0h2.3v2.3h-2.3zM553.0,396.3h2.3v2.3h-2.3zM559.1,396.6h2.3v2.3h-2.3zM565.3,396.9h2.3v2.3h-2.3zM571.4,397.3h2.3v2.3h-2.3zM577.6,397.6h2.3v2.3h-2.3zM583.7,397.9h2.3v2.3h-2.3zM589.9,398.2h2.3v2.3h-2.3zM596.1,398.5h2.3v2.3h-2.3zM602.2,398.8h2.3v2.3h-2.3zM608.4,399.1h2.3v2.3h-2.3zM614.5,399.4h2.3v2.3h-2.3zM620.7,399.7h2.3v2.3h-2.3zM501.5,402.9h2.3v2.3h-2.3zM507.6,403.2h2.3v2.3h-2.3zM513.7,403.5h2.3v2.3h-2.3zM519.9,403.8h2.3v2.3h-2.3zM526.0,404.1h2.3v2.3h-2.3zM532.1,404.5h2.3v2.3h-2.3zM538.3,404.8h2.3v2.3h-2.3zM544.4,405.1h2.3v2.3h-2.3zM550.6,405.4h2.3v2.3h-2.3zM556.7,405.7h2.3v2.3h-2.3zM562.8,406.0h2.3v2.3h-2.3zM569.0,406.3h2.3v2.3h-2.3zM575.1,406.6h2.3v2.3h-2.3zM581.3,407.0h2.3v2.3h-2.3zM587.4,407.3h2.3v2.3h-2.3zM593.5,407.6h2.3v2.3h-2.3zM599.7,407.9h2.3v2.3h-2.3zM605.8,408.2h2.3v2.3h-2.3zM611.9,408.5h2.3v2.3h-2.3zM618.1,408.8h2.3v2.3h-2.3zM498.9,411.9h2.3v2.3h-2.3zM505.0,412.2h2.3v2.3h-2.3zM511.1,412.5h2.3v2.3h-2.3zM517.3,412.8h2.3v2.3h-2.3zM523.4,413.2h2.3v2.3h-2.3zM529.6,413.5h2.3v2.3h-2.3zM535.7,413.8h2.3v2.3h-2.3zM541.8,414.1h2.3v2.3h-2.3zM548.0,414.4h2.3v2.3h-2.3zM554.1,414.8h2.3v2.3h-2.3zM560.2,415.1h2.3v2.3h-2.3zM566.4,415.4h2.3v2.3h-2.3zM572.5,415.7h2.3v2.3h-2.3zM578.7,416.0h2.3v2.3h-2.3zM584.8,416.4h2.3v2.3h-2.3zM590.9,416.7h2.3v2.3h-2.3zM597.1,417.0h2.3v2.3h-2.3zM603.2,417.3h2.3v2.3h-2.3zM609.3,417.6h2.3v2.3h-2.3zM615.5,418.0h2.3v2.3h-2.3zM495.5,420.9h2.3v2.3h-2.3zM501.7,421.2h2.3v2.3h-2.3zM507.9,421.5h2.3v2.3h-2.3zM514.0,421.8h2.3v2.3h-2.3zM520.2,422.2h2.3v2.3h-2.3zM526.4,422.5h2.3v2.3h-2.3zM532.5,422.8h2.3v2.3h-2.3zM538.7,423.2h2.3v2.3h-2.3zM544.9,423.5h2.3v2.3h-2.3zM551.0,423.8h2.3v2.3h-2.3zM557.2,424.1h2.3v2.3h-2.3zM563.4,424.5h2.3v2.3h-2.3zM569.5,424.8h2.3v2.3h-2.3zM575.7,425.1h2.3v2.3h-2.3zM581.9,425.5h2.3v2.3h-2.3zM588.0,425.8h2.3v2.3h-2.3zM594.2,426.1h2.3v2.3h-2.3zM600.4,426.4h2.3v2.3h-2.3zM606.5,426.8h2.3v2.3h-2.3zM612.7,427.1h2.3v2.3h-2.3zM492.2,429.8h2.3v2.3h-2.3zM498.4,430.2h2.3v2.3h-2.3zM504.5,430.5h2.3v2.3h-2.3zM510.7,430.8h2.3v2.3h-2.3zM516.9,431.2h2.3v2.3h-2.3zM523.1,431.5h2.3v2.3h-2.3zM529.3,431.9h2.3v2.3h-2.3zM535.5,432.2h2.3v2.3h-2.3zM541.6,432.5h2.3v2.3h-2.3zM547.8,432.9h2.3v2.3h-2.3zM554.0,433.2h2.3v2.3h-2.3zM560.2,433.5h2.3v2.3h-2.3zM566.4,433.9h2.3v2.3h-2.3zM572.5,434.2h2.3v2.3h-2.3zM578.7,434.6h2.3v2.3h-2.3zM584.9,434.9h2.3v2.3h-2.3zM591.1,435.2h2.3v2.3h-2.3zM597.3,435.6h2.3v2.3h-2.3zM603.4,435.9h2.3v2.3h-2.3zM609.6,436.3h2.3v2.3h-2.3zM488.8,438.8h2.3v2.3h-2.3zM495.0,439.2h2.3v2.3h-2.3zM501.2,439.5h2.3v2.3h-2.3zM507.4,439.9h2.3v2.3h-2.3zM513.6,440.2h2.3v2.3h-2.3zM519.8,440.5h2.3v2.3h-2.3zM526.0,440.9h2.3v2.3h-2.3zM532.2,441.2h2.3v2.3h-2.3zM538.4,441.6h2.3v2.3h-2.3zM544.6,441.9h2.3v2.3h-2.3zM550.8,442.3h2.3v2.3h-2.3zM557.0,442.6h2.3v2.3h-2.3zM563.2,443.0h2.3v2.3h-2.3zM569.4,443.3h2.3v2.3h-2.3zM575.6,443.7h2.3v2.3h-2.3zM581.8,444.0h2.3v2.3h-2.3zM588.0,444.4h2.3v2.3h-2.3zM594.2,444.7h2.3v2.3h-2.3zM600.4,445.0h2.3v2.3h-2.3zM606.6,445.4h2.3v2.3h-2.3zM484.2,447.8h2.3v2.3h-2.3zM490.5,448.1h2.3v2.3h-2.3zM496.8,448.5h2.3v2.3h-2.3zM503.0,448.9h2.3v2.3h-2.3zM509.3,449.2h2.3v2.3h-2.3zM515.6,449.6h2.3v2.3h-2.3zM521.9,449.9h2.3v2.3h-2.3zM528.1,450.3h2.3v2.3h-2.3zM534.4,450.6h2.3v2.3h-2.3zM540.7,451.0h2.3v2.3h-2.3zM547.0,451.3h2.3v2.3h-2.3zM553.2,451.7h2.3v2.3h-2.3zM559.5,452.1h2.3v2.3h-2.3zM565.8,452.4h2.3v2.3h-2.3zM572.1,452.8h2.3v2.3h-2.3zM578.3,453.1h2.3v2.3h-2.3zM584.6,453.5h2.3v2.3h-2.3zM590.9,453.8h2.3v2.3h-2.3zM597.2,454.2h2.3v2.3h-2.3zM603.4,454.5h2.3v2.3h-2.3zM479.3,456.8h2.3v2.3h-2.3zM485.6,457.1h2.3v2.3h-2.3zM492.0,457.5h2.3v2.3h-2.3zM498.3,457.9h2.3v2.3h-2.3zM504.7,458.2h2.3v2.3h-2.3zM511.0,458.6h2.3v2.3h-2.3zM517.4,459.0h2.3v2.3h-2.3zM523.7,459.3h2.3v2.3h-2.3zM530.1,459.7h2.3v2.3h-2.3zM536.4,460.0h2.3v2.3h-2.3zM542.7,460.4h2.3v2.3h-2.3zM549.1,460.8h2.3v2.3h-2.3zM555.4,461.1h2.3v2.3h-2.3zM561.8,461.5h2.3v2.3h-2.3zM568.1,461.9h2.3v2.3h-2.3zM574.5,462.2h2.3v2.3h-2.3zM580.8,462.6h2.3v2.3h-2.3zM587.1,463.0h2.3v2.3h-2.3zM593.5,463.3h2.3v2.3h-2.3zM599.8,463.7h2.3v2.3h-2.3zM474.4,465.8h2.3v2.3h-2.3zM480.9,466.1h2.3v2.3h-2.3zM487.3,466.5h2.3v2.3h-2.3zM493.7,466.9h2.3v2.3h-2.3zM500.1,467.2h2.3v2.3h-2.3zM506.5,467.6h2.3v2.3h-2.3zM512.9,468.0h2.3v2.3h-2.3zM519.3,468.4h2.3v2.3h-2.3zM525.7,468.7h2.3v2.3h-2.3zM532.1,469.1h2.3v2.3h-2.3zM538.5,469.5h2.3v2.3h-2.3zM544.9,469.8h2.3v2.3h-2.3zM551.3,470.2h2.3v2.3h-2.3zM557.8,470.6h2.3v2.3h-2.3zM564.2,471.0h2.3v2.3h-2.3zM570.6,471.3h2.3v2.3h-2.3zM577.0,471.7h2.3v2.3h-2.3zM583.4,472.1h2.3v2.3h-2.3zM589.8,472.5h2.3v2.3h-2.3zM596.2,472.8h2.3v2.3h-2.3z" fill="#fff" fill-opacity="0.88"/>
<path d="M622,198 L705,185" stroke="#555" stroke-width="1" fill="none"/>
<circle cx="622" cy="198.5" r="6.3" fill="#1fb646" stroke="#2a9a48" stroke-width="1"/><circle cx="622" cy="198.5" r="3.6" fill="#2fd24e"/>
</svg>
<div class="abs" style="left:705px;top:156px;width:153.5px;height:17.5px;background:#c2c2c2;border:1px solid #8e8e8e;box-sizing:border-box"></div>
<div class="abs" style="left:705px;top:173px;width:153.5px;height:14.3px;background:#fff;border:1px solid #8e8e8e;border-top:none;box-sizing:border-box"></div>
<div class="abs" style="left:758px;top:173px;width:1px;height:13px;background:#9a9a9a"></div>
<div class="t dv" style="left:719px;top:159.7px;font-size:11px;font-weight:bold;color:#111;letter-spacing:0.1px">Point Position 0</div>
<div class="t dv" style="left:710.8px;top:176.2px;font-size:10px;letter-spacing:0.2px;color:#111">Value</div>
<div class="t dv" style="left:764px;top:176px;font-size:10.3px;letter-spacing:0.2px;color:#111">14.0000</div>
<svg width="1154" height="931" viewBox="0 0 1154 931"><path d="M708,163 h8 l-4,4.5z" fill="#707070"/></svg>
<svg width="1154" height="931" viewBox="0 0 1154 931">
<defs><filter id="bt" x="-20%" y="-20%" width="140%" height="140%"><feGaussianBlur stdDeviation="0.45"/></filter></defs>
<g filter="url(#bt)">
<rect x="63" y="408" width="40.6" height="51.7" fill="#7878aa" opacity="0.6"/>
<rect x="85.7" y="409.5" width="12.2" height="49" fill="#a0707c" opacity="0.3"/>
<path d="M50,433.6 H59" stroke="#999" stroke-width="0.8"/>
<path d="M82,463.6 V403 L80,403.6 L83.8,395.2 L87.6,403.6 L85.7,403 V463.6Z" fill="#1fb955"/>
<path d="M58.2,431.2 L60,430.6 L86,432 L107.5,432.6 L107,430.6 L114.8,434.8 L107.5,438.8 L107,436.6 L86,435.6 L60,434.8 Z" fill="#b8450e"/>
<path d="M64,435.6 L78,434.2 L78.5,436.6 L72,437.9 L64,437.9Z" fill="#2a0b96"/>
<path d="M86.5,432.8 L96,430.6 L98.5,428.4 L102.5,428.3 L106,430.6 L104,432.6 L96,434.3 L87,434.6Z" fill="#2a0b96"/>
<rect x="82" y="427" width="3.7" height="12" fill="#8fc0a8" opacity="0.6"/>
</g>
<text x="83.6" y="393.6" font-family="'DejaVu Sans',sans-serif" font-size="8" font-weight="bold" fill="#1fb955">y</text>
<text x="108.6" y="430.8" font-family="'DejaVu Sans',sans-serif" font-size="7.5" font-weight="bold" fill="#2a0b96">z</text>
<text x="117.3" y="437" font-family="'DejaVu Sans',sans-serif" font-size="7.5" font-weight="bold" fill="#c8501a">x</text>
</svg>
<div class="abs" style="left:1042.0px;top:44.0px;width:101.8px;height:468.0px;background:#fff;border-left:1.5px solid #000;border-top:1.5px solid #000;border-right:1.5px solid #000;box-sizing:border-box"></div>
<svg width="1154" height="931" viewBox="0 0 1154 931">
<rect x="1079.0" y="77.50" width="10.0" height="25.48" fill="#ff2a00"/>
<rect x="1079.0" y="102.67" width="10.0" height="25.48" fill="#ff7b00"/>
<rect x="1079.0" y="127.85" width="10.0" height="25.48" fill="#ffc400"/>
<rect x="1079.0" y="153.03" width="10.0" height="25.48" fill="#f0ff00"/>
<rect x="1079.0" y="178.20" width="10.0" height="25.48" fill="#a0f000"/>
<rect x="1079.0" y="203.38" width="10.0" height="25.48" fill="#40e000"/>
<rect x="1079.0" y="228.55" width="10.0" height="25.48" fill="#00e830"/>
<rect x="1079.0" y="253.72" width="10.0" height="25.48" fill="#00f080"/>
<rect x="1079.0" y="278.90" width="10.0" height="25.48" fill="#00f0c0"/>
<rect x="1079.0" y="304.08" width="10.0" height="25.48" fill="#00f0f0"/>
<rect x="1079.0" y="329.25" width="10.0" height="25.48" fill="#00b0f0"/>
<rect x="1079.0" y="354.43" width="10.0" height="25.48" fill="#0070f0"/>
<rect x="1079.0" y="379.60" width="10.0" height="25.48" fill="#0020f0"/>
<rect x="1079.0" y="404.78" width="10.0" height="25.48" fill="#3000f0"/>
<rect x="1079.0" y="429.95" width="10.0" height="25.48" fill="#8000f0"/>
<rect x="1079.0" y="455.12" width="10.0" height="25.48" fill="#e000f8"/>
<path d="M1079.0,102.67H1089.0M1079.0,127.85H1089.0M1079.0,153.03H1089.0M1079.0,178.20H1089.0M1079.0,203.38H1089.0M1079.0,228.55H1089.0M1079.0,253.72H1089.0M1079.0,278.90H1089.0M1079.0,304.08H1089.0M1079.0,329.25H1089.0M1079.0,354.43H1089.0M1079.0,379.60H1089.0M1079.0,404.78H1089.0M1079.0,429.95H1089.0M1079.0,455.12H1089.0" stroke="#000" stroke-opacity="0.22" stroke-width="1" fill="none"/>
<rect x="1079.0" y="77.50" width="10.0" height="402.80" fill="none" stroke="#000" stroke-opacity="0.25" stroke-width="1"/>
<path d="M1049.0,77.50H1074.0M1049.0,102.67H1074.0M1049.0,127.85H1074.0M1049.0,153.03H1074.0M1049.0,178.20H1074.0M1049.0,203.38H1074.0M1049.0,228.55H1074.0M1049.0,253.72H1074.0M1049.0,278.90H1074.0M1049.0,304.08H1074.0M1049.0,329.25H1074.0M1049.0,354.43H1074.0M1049.0,379.60H1074.0M1049.0,404.78H1074.0M1049.0,429.95H1074.0M1049.0,455.12H1074.0M1049.0,480.30H1074.0M1049.0,77.5V480.3M1074.0,77.5V480.3" stroke="#4a4a4a" stroke-width="1" fill="none"/>
<polyline points="1073.0,77.5 1073.0,210.4 1071.8,212.4 1071.8,223.3 1073.2,225.3 1073.2,254.7 1072.0,256.7 1072.0,278.9 1073.2,280.9 1073.0,319.2 1073.5,343.3 1072.8,367.5 1073.2,391.7 1072.5,407.8 1073.0,423.9 1072.0,436.0 1072.5,446.1 1070.5,454.1 1068.5,460.2 1064.0,462.2 1059.5,465.0 1058.5,467.4 1051.5,469.0 1049.0,471.4 1056.0,480.3" fill="none" stroke="#000" stroke-width="1.1"/>
</svg>
<div class="t dv" style="left:1089.5px;top:52.9px;width:40px;margin-left:-20px;text-align:center;font-size:12.6px;font-style:italic;color:#111">[%]</div>
<div class="t dv" style="left:1093.0px;top:71.8px;font-size:11.0px;font-style:italic;color:#111">15.148</div>
<div class="t dv" style="left:1093.0px;top:97.0px;font-size:11.0px;font-style:italic;color:#111">14.203</div>
<div class="t dv" style="left:1093.0px;top:122.1px;font-size:11.0px;font-style:italic;color:#111">13.258</div>
<div class="t dv" style="left:1093.0px;top:147.3px;font-size:11.0px;font-style:italic;color:#111">12.313</div>
<div class="t dv" style="left:1093.0px;top:172.5px;font-size:11.0px;font-style:italic;color:#111">11.367</div>
<div class="t dv" style="left:1093.0px;top:197.7px;font-size:11.0px;font-style:italic;color:#111">10.422</div>
<div class="t dv" style="left:1093.0px;top:222.8px;font-size:11.0px;font-style:italic;color:#111">9.477</div>
<div class="t dv" style="left:1093.0px;top:248.0px;font-size:11.0px;font-style:italic;color:#111">8.531</div>
<div class="t dv" style="left:1093.0px;top:273.2px;font-size:11.0px;font-style:italic;color:#111">7.586</div>
<div class="t dv" style="left:1093.0px;top:298.4px;font-size:11.0px;font-style:italic;color:#111">6.641</div>
<div class="t dv" style="left:1093.0px;top:323.5px;font-size:11.0px;font-style:italic;color:#111">5.696</div>
<div class="t dv" style="left:1093.0px;top:348.7px;font-size:11.0px;font-style:italic;color:#111">4.750</div>
<div class="t dv" style="left:1093.0px;top:373.9px;font-size:11.0px;font-style:italic;color:#111">3.805</div>
<div class="t dv" style="left:1093.0px;top:399.1px;font-size:11.0px;font-style:italic;color:#111">2.860</div>
<div class="t dv" style="left:1093.0px;top:424.2px;font-size:11.0px;font-style:italic;color:#111">1.915</div>
<div class="t dv" style="left:1093.0px;top:449.4px;font-size:11.0px;font-style:italic;color:#111">0.969</div>
<div class="t dv" style="left:1093.0px;top:474.6px;font-size:11.0px;font-style:italic;color:#111">0.024</div>
<div class="abs" style="left:4px;top:516px;width:569px;height:26px;background:#eeeef2"></div>
<div class="abs" style="left:576px;top:516px;width:569px;height:26px;background:#eeeef2"></div>
<div class="abs" style="left:572px;top:516px;width:4px;height:415px;background:#e6e6ee"></div>
<div class="t" style="left:8px;top:523px;font-size:11px;color:#1e1e1e">图像 0</div>
<div class="t" style="left:580px;top:523px;font-size:11px;color:#1e1e1e">分析曲线</div>
<svg width="1154" height="931" viewBox="0 0 1154 931">
<path d="M523.9,527 h9.2 l-4.6,4.8z" fill="#555"/>
<path d="M543.7,524.6 h4 v4.8 h-4z M542.4,529.4 h6.6 M545.7,529.4 v3.5" fill="none" stroke="#444" stroke-width="1.1"/>
<path d="M547.1,524.8 v4.4" stroke="#444" stroke-width="1.5"/>
<path d="M558.3,525.2 l7.6,6.7 M565.9,525.2 l-7.6,6.7" stroke="#444" stroke-width="1.25" fill="none"/>
</svg>
<svg width="1154" height="931" viewBox="0 0 1154 931">
<path d="M1097.9,527 h9.2 l-4.6,4.8z" fill="#555"/>
<path d="M1117.7,524.6 h4 v4.8 h-4z M1116.4,529.4 h6.6 M1119.7,529.4 v3.5" fill="none" stroke="#444" stroke-width="1.1"/>
<path d="M1121.1,524.8 v4.4" stroke="#444" stroke-width="1.5"/>
<path d="M1132.3,525.2 l7.6,6.7 M1139.9,525.2 l-7.6,6.7" stroke="#444" stroke-width="1.25" fill="none"/>
</svg>
<div class="abs" style="left:4px;top:911px;width:568px;height:20px;background:#eeeef2"></div>
<div class="abs" style="left:576px;top:910px;width:569px;height:21px;background:#eeeef2"></div>
<div class="abs" style="left:4px;top:911px;width:42px;height:20px;background:#f6f7fa;border-right:1px solid #d4d6de"></div>
<div class="t" style="left:10px;top:916px;font-size:11px;color:#1f5c9a">图像 0</div>
<div class="t" style="left:54.5px;top:916px;font-size:11px;color:#1e1e1e">标志点</div>
<div class="abs" style="left:666px;top:911px;width:55px;height:20px;background:#f6f7fa;border-left:1px solid #d4d6de;border-right:1px solid #d4d6de"></div>
<div class="t" style="left:582px;top:915.5px;font-size:11px;color:#1e1e1e">图像 1</div>
<div class="t" style="left:626px;top:915.5px;font-size:11px;color:#1e1e1e">物体点</div>
<div class="t" style="left:672px;top:915.5px;font-size:11px;color:#1f5c9a">分析曲线</div>
<div class="t" style="left:729px;top:915.5px;font-size:11px;color:#1e1e1e">轨迹</div>
<div class="abs" style="left:4px;top:542px;width:477px;height:369px;background:#111"></div>
<svg width="1154" height="931" viewBox="0 0 1154 931">
<defs>
<linearGradient id="gbg" x1="0" y1="542" x2="0" y2="910" gradientUnits="userSpaceOnUse"><stop offset="0" stop-color="#2b2b2b"/><stop offset="0.03" stop-color="#272727"/><stop offset="0.12" stop-color="#212121"/><stop offset="0.30" stop-color="#1b1b1b"/><stop offset="0.42" stop-color="#1c1c1c"/><stop offset="0.47" stop-color="#262626"/><stop offset="0.52" stop-color="#353535"/><stop offset="0.548" stop-color="#4a4a4a"/><stop offset="0.61" stop-color="#3a3a3a"/><stop offset="0.655" stop-color="#262626"/><stop offset="0.67" stop-color="#1d1d1d"/><stop offset="0.95" stop-color="#1a1a1a"/><stop offset="1" stop-color="#2a2a2a"/></linearGradient>
<linearGradient id="gsp" x1="0" y1="600" x2="0" y2="910" gradientUnits="userSpaceOnUse"><stop offset="0" stop-color="#2c2c2c" stop-opacity="0.15"/><stop offset="0.11" stop-color="#3a3a3a" stop-opacity="0.95"/><stop offset="0.40" stop-color="#505050"/><stop offset="0.47" stop-color="#666"/><stop offset="0.53" stop-color="#666"/><stop offset="0.62" stop-color="#525252"/><stop offset="0.85" stop-color="#484848"/><stop offset="1" stop-color="#363636"/></linearGradient>
<linearGradient id="gband" x1="0" y1="0" x2="0" y2="1"><stop offset="0" stop-color="#8c8c8c"/><stop offset="0.6" stop-color="#838383"/><stop offset="1" stop-color="#6c6c6c"/></linearGradient>
<clipPath id="cspec"><path d="M177,872 L177,800 L178,700 L179,640 Q183,602 215,600 L308,600 Q332,602 336,626 L342,690 L345,740 L344,800 L337,846 L333,884 Q300,901 252,900 Q200,898 177,872Z"/></clipPath>
<filter id="b1" x="-5%" y="-5%" width="110%" height="110%"><feGaussianBlur stdDeviation="1.2"/></filter>
<filter id="b2" x="-5%" y="-5%" width="110%" height="110%"><feGaussianBlur stdDeviation="0.9"/></filter>
<filter id="b3" x="-20%" y="-20%" width="140%" height="140%"><feGaussianBlur stdDeviation="7"/></filter>
</defs>
<svg x="17" y="542" width="449.5" height="368.7" viewBox="17 542 449.5 368.7" style="overflow:hidden;position:static" overflow="hidden">
<rect x="17" y="542" width="449.5" height="369" fill="url(#gbg)"/>
<g filter="url(#b3)">
<path d="M0,590 L140,590 Q170,594 178,650 L178,728 L0,728Z" fill="#0e0e0e"/>
<path d="M490,606 L352,606 L352,722 L490,722Z" fill="#141414" opacity="0.6"/>
</g>
<rect x="17" y="742.5" width="168" height="17.5" fill="url(#gband)"/>
<rect x="356.5" y="746.3" width="110" height="18" fill="url(#gband)"/>
<rect x="344" y="600" width="12.5" height="309" fill="#161616" opacity="0.75"/>
<g clip-path="url(#cspec)">
<rect x="160" y="590" width="200" height="320" fill="url(#gsp)"/>
<path d="M202,646.8 L289,646.6 L289,645.4 L316.2,645.4 L316.6,790 L320.2,880 L207.2,880 L202.5,790Z" fill="#fff" opacity="0.38"/>
<g fill="#141414" opacity="0.75" filter="url(#b2)"><ellipse cx="233.8" cy="672.6" rx="3.8" ry="2.2" transform="rotate(5 233.8 672.6)"/><ellipse cx="240.6" cy="647.0" rx="3.6" ry="2.1" transform="rotate(-9 240.6 647.0)"/><ellipse cx="192.4" cy="656.0" rx="3.4" ry="2.9" transform="rotate(-52 192.4 656.0)"/><ellipse cx="217.4" cy="804.2" rx="4.3" ry="2.7" transform="rotate(-14 217.4 804.2)"/><ellipse cx="340.1" cy="643.9" rx="4.2" ry="2.4" transform="rotate(-49 340.1 643.9)"/><ellipse cx="200.2" cy="716.1" rx="4.1" ry="2.3" transform="rotate(11 200.2 716.1)"/><ellipse cx="285.1" cy="733.8" rx="3.6" ry="2.2" transform="rotate(-61 285.1 733.8)"/><ellipse cx="214.6" cy="818.8" rx="3.4" ry="2.4" transform="rotate(11 214.6 818.8)"/><ellipse cx="254.9" cy="713.7" rx="4.1" ry="2.8" transform="rotate(-35 254.9 713.7)"/><ellipse cx="274.6" cy="776.0" rx="4.2" ry="2.8" transform="rotate(-29 274.6 776.0)"/><ellipse cx="340.8" cy="663.6" rx="3.4" ry="2.9" transform="rotate(-48 340.8 663.6)"/><ellipse cx="260.7" cy="641.8" rx="3.8" ry="2.9" transform="rotate(10 260.7 641.8)"/><ellipse cx="323.7" cy="717.6" rx="3.9" ry="2.7" transform="rotate(11 323.7 717.6)"/><ellipse cx="255.4" cy="862.8" rx="4.3" ry="2.6" transform="rotate(22 255.4 862.8)"/><ellipse cx="190.9" cy="824.6" rx="3.8" ry="3.1" transform="rotate(45 190.9 824.6)"/><ellipse cx="227.4" cy="737.5" rx="3.8" ry="2.1" transform="rotate(-5 227.4 737.5)"/><ellipse cx="208.4" cy="663.3" rx="2.8" ry="2.9" transform="rotate(-51 208.4 663.3)"/><ellipse cx="323.0" cy="653.2" rx="3.5" ry="2.6" transform="rotate(53 323.0 653.2)"/><ellipse cx="314.5" cy="869.5" rx="3.2" ry="2.5" transform="rotate(-19 314.5 869.5)"/><ellipse cx="325.1" cy="895.3" rx="3.0" ry="2.3" transform="rotate(-37 325.1 895.3)"/><ellipse cx="219.0" cy="764.8" rx="3.7" ry="2.4" transform="rotate(-69 219.0 764.8)"/><ellipse cx="249.3" cy="732.9" rx="3.7" ry="3.1" transform="rotate(26 249.3 732.9)"/><ellipse cx="265.0" cy="801.5" rx="3.8" ry="2.2" transform="rotate(55 265.0 801.5)"/><ellipse cx="311.1" cy="739.3" rx="3.4" ry="2.2" transform="rotate(18 311.1 739.3)"/><ellipse cx="215.0" cy="675.8" rx="3.3" ry="2.2" transform="rotate(-69 215.0 675.8)"/><ellipse cx="240.3" cy="638.0" rx="4.2" ry="2.7" transform="rotate(-49 240.3 638.0)"/><ellipse cx="222.1" cy="726.9" rx="3.3" ry="2.2" transform="rotate(48 222.1 726.9)"/><ellipse cx="342.9" cy="759.6" rx="3.5" ry="2.2" transform="rotate(-55 342.9 759.6)"/><ellipse cx="236.8" cy="704.1" rx="4.1" ry="2.3" transform="rotate(-66 236.8 704.1)"/><ellipse cx="336.0" cy="776.8" rx="2.9" ry="2.6" transform="rotate(-66 336.0 776.8)"/><ellipse cx="267.1" cy="901.1" rx="4.2" ry="2.8" transform="rotate(-33 267.1 901.1)"/><ellipse cx="240.8" cy="677.1" rx="4.0" ry="2.6" transform="rotate(39 240.8 677.1)"/><ellipse cx="234.7" cy="692.6" rx="4.1" ry="3.1" transform="rotate(49 234.7 692.6)"/><ellipse cx="312.4" cy="856.9" rx="4.0" ry="2.3" transform="rotate(2 312.4 856.9)"/><ellipse cx="185.6" cy="708.1" rx="3.1" ry="2.8" transform="rotate(63 185.6 708.1)"/><ellipse cx="253.9" cy="889.6" rx="4.4" ry="3.1" transform="rotate(-18 253.9 889.6)"/><ellipse cx="216.9" cy="693.6" rx="3.0" ry="2.3" transform="rotate(17 216.9 693.6)"/><ellipse cx="327.8" cy="863.0" rx="3.5" ry="2.8" transform="rotate(41 327.8 863.0)"/><ellipse cx="194.8" cy="813.3" rx="4.2" ry="2.9" transform="rotate(35 194.8 813.3)"/><ellipse cx="258.9" cy="680.3" rx="4.0" ry="2.4" transform="rotate(42 258.9 680.3)"/><ellipse cx="339.4" cy="740.3" rx="3.4" ry="3.0" transform="rotate(31 339.4 740.3)"/><ellipse cx="205.6" cy="880.7" rx="4.1" ry="2.2" transform="rotate(45 205.6 880.7)"/><ellipse cx="340.8" cy="812.4" rx="3.3" ry="2.6" transform="rotate(-51 340.8 812.4)"/><ellipse cx="183.3" cy="899.0" rx="3.8" ry="2.6" transform="rotate(60 183.3 899.0)"/><ellipse cx="251.7" cy="871.6" rx="4.1" ry="2.3" transform="rotate(-34 251.7 871.6)"/><ellipse cx="228.8" cy="697.4" rx="3.7" ry="2.4" transform="rotate(-11 228.8 697.4)"/><ellipse cx="238.7" cy="757.5" rx="3.7" ry="3.0" transform="rotate(-11 238.7 757.5)"/><ellipse cx="330.6" cy="769.5" rx="3.6" ry="2.6" transform="rotate(-67 330.6 769.5)"/><ellipse cx="181.6" cy="851.6" rx="3.0" ry="2.6" transform="rotate(31 181.6 851.6)"/><ellipse cx="271.7" cy="721.0" rx="3.6" ry="2.7" transform="rotate(39 271.7 721.0)"/><ellipse cx="198.3" cy="785.6" rx="3.1" ry="2.4" transform="rotate(38 198.3 785.6)"/><ellipse cx="263.8" cy="786.0" rx="4.0" ry="3.0" transform="rotate(-7 263.8 786.0)"/><ellipse cx="280.8" cy="770.5" rx="3.6" ry="2.8" transform="rotate(-6 280.8 770.5)"/><ellipse cx="267.9" cy="762.9" rx="4.3" ry="2.8" transform="rotate(52 267.9 762.9)"/><ellipse cx="334.6" cy="702.6" rx="3.7" ry="3.0" transform="rotate(47 334.6 702.6)"/><ellipse cx="253.1" cy="651.0" rx="3.1" ry="2.2" transform="rotate(23 253.1 651.0)"/><ellipse cx="308.8" cy="878.6" rx="3.0" ry="2.8" transform="rotate(22 308.8 878.6)"/><ellipse cx="338.7" cy="691.6" rx="4.3" ry="2.5" transform="rotate(-1 338.7 691.6)"/><ellipse cx="342.3" cy="860.8" rx="3.0" ry="2.5" transform="rotate(2 342.3 860.8)"/><ellipse cx="236.3" cy="685.0" rx="3.2" ry="2.8" transform="rotate(-67 236.3 685.0)"/><ellipse cx="271.3" cy="752.6" rx="2.7" ry="2.4" transform="rotate(17 271.3 752.6)"/><ellipse cx="264.5" cy="648.7" rx="4.4" ry="2.9" transform="rotate(66 264.5 648.7)"/><ellipse cx="198.1" cy="704.3" rx="2.8" ry="2.9" transform="rotate(-32 198.1 704.3)"/><ellipse cx="202.1" cy="747.5" rx="4.2" ry="2.9" transform="rotate(-33 202.1 747.5)"/><ellipse cx="274.0" cy="824.3" rx="2.9" ry="2.2" transform="rotate(26 274.0 824.3)"/><ellipse cx="334.0" cy="806.1" rx="4.1" ry="2.2" transform="rotate(49 334.0 806.1)"/><ellipse cx="191.9" cy="869.1" rx="3.5" ry="2.4" transform="rotate(7 191.9 869.1)"/><ellipse cx="202.1" cy="776.4" rx="3.1" ry="2.2" transform="rotate(-47 202.1 776.4)"/><ellipse cx="189.2" cy="686.7" rx="3.2" ry="2.4" transform="rotate(36 189.2 686.7)"/><ellipse cx="228.3" cy="769.0" rx="3.0" ry="2.4" transform="rotate(-67 228.3 769.0)"/><ellipse cx="221.8" cy="635.2" rx="3.9" ry="2.7" transform="rotate(-43 221.8 635.2)"/><ellipse cx="198.3" cy="857.0" rx="3.4" ry="2.6" transform="rotate(46 198.3 857.0)"/><ellipse cx="245.1" cy="770.8" rx="3.9" ry="3.1" transform="rotate(-22 245.1 770.8)"/><ellipse cx="316.7" cy="826.1" rx="3.8" ry="2.5" transform="rotate(-21 316.7 826.1)"/><ellipse cx="189.9" cy="666.8" rx="2.8" ry="2.8" transform="rotate(-34 189.9 666.8)"/><ellipse cx="207.6" cy="654.3" rx="4.1" ry="3.0" transform="rotate(23 207.6 654.3)"/><ellipse cx="228.8" cy="757.8" rx="3.0" ry="2.5" transform="rotate(-33 228.8 757.8)"/><ellipse cx="337.8" cy="899.4" rx="3.6" ry="2.3" transform="rotate(65 337.8 899.4)"/><ellipse cx="231.5" cy="729.4" rx="2.7" ry="2.5" transform="rotate(-3 231.5 729.4)"/><ellipse cx="263.0" cy="686.5" rx="3.6" ry="2.1" transform="rotate(-33 263.0 686.5)"/><ellipse cx="195.6" cy="741.3" rx="2.8" ry="2.1" transform="rotate(-27 195.6 741.3)"/><ellipse cx="218.9" cy="792.6" rx="3.6" ry="2.9" transform="rotate(22 218.9 792.6)"/><ellipse cx="297.7" cy="873.6" rx="3.4" ry="2.4" transform="rotate(67 297.7 873.6)"/><ellipse cx="205.4" cy="830.9" rx="3.8" ry="2.1" transform="rotate(46 205.4 830.9)"/><ellipse cx="326.4" cy="804.1" rx="3.9" ry="2.9" transform="rotate(-50 326.4 804.1)"/><ellipse cx="266.4" cy="770.2" rx="4.1" ry="2.9" transform="rotate(45 266.4 770.2)"/><ellipse cx="276.2" cy="877.4" rx="3.9" ry="2.8" transform="rotate(-37 276.2 877.4)"/><ellipse cx="239.8" cy="660.0" rx="4.1" ry="2.7" transform="rotate(17 239.8 660.0)"/><ellipse cx="283.1" cy="818.9" rx="3.5" ry="2.1" transform="rotate(41 283.1 818.9)"/><ellipse cx="303.0" cy="769.8" rx="3.6" ry="2.8" transform="rotate(-60 303.0 769.8)"/><ellipse cx="301.1" cy="700.6" rx="2.8" ry="2.4" transform="rotate(32 301.1 700.6)"/><ellipse cx="214.5" cy="835.2" rx="4.4" ry="2.6" transform="rotate(-16 214.5 835.2)"/><ellipse cx="259.1" cy="819.7" rx="4.0" ry="2.7" transform="rotate(19 259.1 819.7)"/><ellipse cx="222.4" cy="836.1" rx="3.2" ry="2.7" transform="rotate(-68 222.4 836.1)"/><ellipse cx="290.5" cy="822.0" rx="3.8" ry="2.4" transform="rotate(2 290.5 822.0)"/><ellipse cx="256.7" cy="759.7" rx="2.9" ry="3.0" transform="rotate(-42 256.7 759.7)"/><ellipse cx="340.4" cy="889.4" rx="2.7" ry="2.6" transform="rotate(44 340.4 889.4)"/><ellipse cx="224.8" cy="688.9" rx="4.3" ry="2.3" transform="rotate(11 224.8 688.9)"/><ellipse cx="314.7" cy="771.4" rx="4.2" ry="2.8" transform="rotate(-37 314.7 771.4)"/><ellipse cx="185.0" cy="632.0" rx="3.5" ry="2.6" transform="rotate(-27 185.0 632.0)"/><ellipse cx="203.9" cy="725.9" rx="3.2" ry="2.9" transform="rotate(-69 203.9 725.9)"/><ellipse cx="303.4" cy="862.6" rx="2.9" ry="3.0" transform="rotate(29 303.4 862.6)"/><ellipse cx="328.0" cy="711.0" rx="3.3" ry="2.5" transform="rotate(69 328.0 711.0)"/><ellipse cx="277.0" cy="730.6" rx="3.4" ry="2.4" transform="rotate(-63 277.0 730.6)"/><ellipse cx="227.6" cy="889.2" rx="3.1" ry="2.4" transform="rotate(1 227.6 889.2)"/><ellipse cx="211.9" cy="734.0" rx="4.3" ry="3.0" transform="rotate(43 211.9 734.0)"/><ellipse cx="283.8" cy="883.1" rx="4.3" ry="2.6" transform="rotate(30 283.8 883.1)"/><ellipse cx="189.1" cy="833.1" rx="3.5" ry="2.9" transform="rotate(20 189.1 833.1)"/><ellipse cx="227.7" cy="644.5" rx="4.3" ry="2.2" transform="rotate(-3 227.7 644.5)"/><ellipse cx="237.0" cy="713.2" rx="4.0" ry="3.1" transform="rotate(-33 237.0 713.2)"/><ellipse cx="287.9" cy="714.0" rx="3.6" ry="2.5" transform="rotate(-46 287.9 714.0)"/><ellipse cx="207.4" cy="688.4" rx="4.2" ry="2.6" transform="rotate(-39 207.4 688.4)"/><ellipse cx="328.7" cy="906.0" rx="3.5" ry="2.2" transform="rotate(-43 328.7 906.0)"/><ellipse cx="195.8" cy="725.4" rx="2.9" ry="2.3" transform="rotate(-33 195.8 725.4)"/><ellipse cx="303.2" cy="744.9" rx="3.4" ry="2.6" transform="rotate(-17 303.2 744.9)"/><ellipse cx="226.2" cy="898.1" rx="2.9" ry="2.6" transform="rotate(18 226.2 898.1)"/><ellipse cx="321.6" cy="690.6" rx="3.2" ry="2.3" transform="rotate(-14 321.6 690.6)"/><ellipse cx="184.6" cy="639.9" rx="3.9" ry="3.0" transform="rotate(-3 184.6 639.9)"/><ellipse cx="276.7" cy="631.0" rx="3.4" ry="3.0" transform="rotate(45 276.7 631.0)"/><ellipse cx="221.5" cy="661.1" rx="3.0" ry="2.6" transform="rotate(25 221.5 661.1)"/><ellipse cx="334.5" cy="830.2" rx="3.8" ry="2.9" transform="rotate(-5 334.5 830.2)"/><ellipse cx="270.9" cy="641.9" rx="4.0" ry="2.3" transform="rotate(58 270.9 641.9)"/><ellipse cx="199.3" cy="650.4" rx="3.6" ry="2.7" transform="rotate(-15 199.3 650.4)"/><ellipse cx="286.1" cy="874.9" rx="3.5" ry="2.3" transform="rotate(-35 286.1 874.9)"/><ellipse cx="231.1" cy="637.0" rx="3.5" ry="2.8" transform="rotate(-11 231.1 637.0)"/><ellipse cx="222.9" cy="815.2" rx="4.3" ry="2.3" transform="rotate(-65 222.9 815.2)"/><ellipse cx="236.1" cy="747.1" rx="3.9" ry="2.3" transform="rotate(41 236.1 747.1)"/><ellipse cx="214.5" cy="898.7" rx="3.2" ry="2.9" transform="rotate(-37 214.5 898.7)"/><ellipse cx="217.4" cy="746.1" rx="3.8" ry="3.0" transform="rotate(-49 217.4 746.1)"/><ellipse cx="245.1" cy="689.8" rx="4.4" ry="2.2" transform="rotate(-62 245.1 689.8)"/><ellipse cx="327.4" cy="874.9" rx="3.9" ry="3.1" transform="rotate(60 327.4 874.9)"/><ellipse cx="333.5" cy="837.0" rx="2.8" ry="2.8" transform="rotate(-16 333.5 837.0)"/><ellipse cx="241.9" cy="722.5" rx="3.0" ry="2.1" transform="rotate(-30 241.9 722.5)"/><ellipse cx="238.3" cy="894.7" rx="2.9" ry="3.1" transform="rotate(-40 238.3 894.7)"/><ellipse cx="239.1" cy="857.8" rx="4.1" ry="2.5" transform="rotate(-63 239.1 857.8)"/><ellipse cx="258.2" cy="733.9" rx="4.3" ry="2.3" transform="rotate(-19 258.2 733.9)"/><ellipse cx="327.2" cy="639.4" rx="3.4" ry="2.9" transform="rotate(37 327.2 639.4)"/><ellipse cx="191.2" cy="884.9" rx="3.1" ry="2.8" transform="rotate(55 191.2 884.9)"/><ellipse cx="223.7" cy="828.8" rx="3.2" ry="2.4" transform="rotate(-69 223.7 828.8)"/><ellipse cx="304.2" cy="883.9" rx="3.8" ry="3.0" transform="rotate(-66 304.2 883.9)"/><ellipse cx="244.0" cy="700.3" rx="3.4" ry="2.6" transform="rotate(59 244.0 700.3)"/><ellipse cx="210.8" cy="852.5" rx="4.0" ry="2.9" transform="rotate(38 210.8 852.5)"/><ellipse cx="280.0" cy="721.5" rx="3.2" ry="2.5" transform="rotate(39 280.0 721.5)"/><ellipse cx="340.8" cy="874.8" rx="4.4" ry="2.4" transform="rotate(-58 340.8 874.8)"/><ellipse cx="196.7" cy="768.6" rx="3.9" ry="2.5" transform="rotate(-37 196.7 768.6)"/><ellipse cx="248.9" cy="802.2" rx="3.8" ry="2.8" transform="rotate(48 248.9 802.2)"/><ellipse cx="289.3" cy="664.4" rx="4.1" ry="2.4" transform="rotate(9 289.3 664.4)"/><ellipse cx="241.8" cy="834.7" rx="3.0" ry="2.3" transform="rotate(-35 241.8 834.7)"/><ellipse cx="245.6" cy="904.9" rx="3.6" ry="2.3" transform="rotate(43 245.6 904.9)"/><ellipse cx="287.5" cy="904.5" rx="2.9" ry="2.6" transform="rotate(44 287.5 904.5)"/><ellipse cx="318.0" cy="883.4" rx="2.8" ry="2.4" transform="rotate(-53 318.0 883.4)"/><ellipse cx="276.1" cy="887.7" rx="3.3" ry="3.0" transform="rotate(-7 276.1 887.7)"/><ellipse cx="223.4" cy="845.7" rx="4.3" ry="2.2" transform="rotate(13 223.4 845.7)"/><ellipse cx="282.1" cy="691.1" rx="3.3" ry="2.2" transform="rotate(-41 282.1 691.1)"/><ellipse cx="182.9" cy="721.3" rx="3.9" ry="2.3" transform="rotate(-26 182.9 721.3)"/><ellipse cx="270.7" cy="807.4" rx="2.9" ry="2.3" transform="rotate(27 270.7 807.4)"/><ellipse cx="247.8" cy="709.2" rx="3.2" ry="3.1" transform="rotate(-26 247.8 709.2)"/><ellipse cx="343.4" cy="731.4" rx="3.0" ry="2.8" transform="rotate(-41 343.4 731.4)"/><ellipse cx="182.0" cy="879.9" rx="3.4" ry="2.9" transform="rotate(-13 182.0 879.9)"/><ellipse cx="324.9" cy="758.2" rx="3.0" ry="2.1" transform="rotate(7 324.9 758.2)"/><ellipse cx="195.5" cy="802.7" rx="3.3" ry="2.6" transform="rotate(-49 195.5 802.7)"/><ellipse cx="331.9" cy="661.0" rx="3.5" ry="2.9" transform="rotate(65 331.9 661.0)"/><ellipse cx="332.0" cy="738.1" rx="4.2" ry="2.7" transform="rotate(45 332.0 738.1)"/><ellipse cx="272.7" cy="840.1" rx="2.8" ry="2.9" transform="rotate(-53 272.7 840.1)"/><ellipse cx="278.7" cy="782.8" rx="3.8" ry="2.4" transform="rotate(-11 278.7 782.8)"/><ellipse cx="288.4" cy="754.3" rx="3.4" ry="2.1" transform="rotate(16 288.4 754.3)"/><ellipse cx="260.8" cy="695.9" rx="4.0" ry="2.9" transform="rotate(-5 260.8 695.9)"/><ellipse cx="210.3" cy="761.6" rx="2.9" ry="2.2" transform="rotate(-9 210.3 761.6)"/><ellipse cx="195.9" cy="753.0" rx="3.6" ry="2.1" transform="rotate(19 195.9 753.0)"/><ellipse cx="203.2" cy="867.6" rx="4.4" ry="2.8" transform="rotate(44 203.2 867.6)"/><ellipse cx="261.2" cy="895.0" rx="4.3" ry="2.3" transform="rotate(40 261.2 895.0)"/><ellipse cx="332.7" cy="649.1" rx="3.3" ry="2.9" transform="rotate(-47 332.7 649.1)"/><ellipse cx="313.9" cy="670.6" rx="3.6" ry="3.0" transform="rotate(-40 313.9 670.6)"/><ellipse cx="333.6" cy="818.6" rx="4.2" ry="2.3" transform="rotate(39 333.6 818.6)"/><ellipse cx="323.3" cy="784.2" rx="3.7" ry="3.0" transform="rotate(-55 323.3 784.2)"/><ellipse cx="342.9" cy="804.8" rx="3.4" ry="2.9" transform="rotate(-32 342.9 804.8)"/><ellipse cx="342.5" cy="790.4" rx="3.3" ry="2.9" transform="rotate(-8 342.5 790.4)"/><ellipse cx="188.9" cy="857.3" rx="3.1" ry="2.7" transform="rotate(67 188.9 857.3)"/><ellipse cx="276.5" cy="814.2" rx="3.2" ry="2.1" transform="rotate(-65 276.5 814.2)"/><ellipse cx="205.3" cy="801.0" rx="3.4" ry="2.6" transform="rotate(55 205.3 801.0)"/><ellipse cx="202.5" cy="693.7" rx="3.8" ry="2.1" transform="rotate(-69 202.5 693.7)"/><ellipse cx="276.1" cy="793.6" rx="3.0" ry="2.7" transform="rotate(-3 276.1 793.6)"/><ellipse cx="203.0" cy="889.5" rx="3.1" ry="2.2" transform="rotate(-56 203.0 889.5)"/><ellipse cx="286.1" cy="786.2" rx="3.3" ry="2.7" transform="rotate(-7 286.1 786.2)"/><ellipse cx="221.5" cy="880.4" rx="2.8" ry="2.6" transform="rotate(-13 221.5 880.4)"/><ellipse cx="219.7" cy="647.1" rx="4.0" ry="2.1" transform="rotate(7 219.7 647.1)"/><ellipse cx="334.4" cy="670.3" rx="3.0" ry="2.7" transform="rotate(0 334.4 670.3)"/><ellipse cx="285.6" cy="855.5" rx="3.0" ry="2.4" transform="rotate(-27 285.6 855.5)"/><ellipse cx="188.9" cy="876.5" rx="4.0" ry="2.8" transform="rotate(-69 188.9 876.5)"/><ellipse cx="318.6" cy="836.7" rx="3.5" ry="2.8" transform="rotate(-6 318.6 836.7)"/><ellipse cx="294.3" cy="864.3" rx="3.9" ry="2.4" transform="rotate(7 294.3 864.3)"/><ellipse cx="252.1" cy="848.6" rx="3.6" ry="2.4" transform="rotate(19 252.1 848.6)"/><ellipse cx="302.3" cy="891.7" rx="4.0" ry="2.4" transform="rotate(53 302.3 891.7)"/><ellipse cx="293.9" cy="814.6" rx="4.4" ry="2.6" transform="rotate(47 293.9 814.6)"/><ellipse cx="252.3" cy="831.0" rx="3.7" ry="2.4" transform="rotate(-40 252.3 831.0)"/><ellipse cx="282.5" cy="652.5" rx="4.2" ry="2.2" transform="rotate(-66 282.5 652.5)"/><ellipse cx="293.9" cy="806.0" rx="3.9" ry="2.8" transform="rotate(-60 293.9 806.0)"/><ellipse cx="313.4" cy="806.0" rx="4.1" ry="2.7" transform="rotate(-29 313.4 806.0)"/><ellipse cx="304.5" cy="687.6" rx="3.2" ry="2.5" transform="rotate(-67 304.5 687.6)"/><ellipse cx="222.8" cy="709.0" rx="3.9" ry="2.5" transform="rotate(-25 222.8 709.0)"/><ellipse cx="338.1" cy="770.0" rx="4.1" ry="2.7" transform="rotate(-65 338.1 770.0)"/><ellipse cx="248.3" cy="751.5" rx="4.0" ry="2.4" transform="rotate(28 248.3 751.5)"/><ellipse cx="268.7" cy="690.8" rx="4.2" ry="2.2" transform="rotate(44 268.7 690.8)"/><ellipse cx="208.8" cy="631.4" rx="3.0" ry="2.9" transform="rotate(66 208.8 631.4)"/><ellipse cx="181.7" cy="766.5" rx="3.5" ry="2.9" transform="rotate(-44 181.7 766.5)"/><ellipse cx="261.6" cy="726.8" rx="4.1" ry="2.4" transform="rotate(62 261.6 726.8)"/><ellipse cx="295.0" cy="768.5" rx="2.9" ry="2.7" transform="rotate(-58 295.0 768.5)"/><ellipse cx="309.4" cy="823.4" rx="4.0" ry="2.7" transform="rotate(-20 309.4 823.4)"/><ellipse cx="246.4" cy="739.9" rx="4.2" ry="2.2" transform="rotate(54 246.4 739.9)"/><ellipse cx="256.1" cy="777.7" rx="4.0" ry="2.9" transform="rotate(20 256.1 777.7)"/><ellipse cx="288.9" cy="835.8" rx="3.0" ry="2.5" transform="rotate(38 288.9 835.8)"/><ellipse cx="275.4" cy="665.8" rx="3.5" ry="3.0" transform="rotate(-36 275.4 665.8)"/><ellipse cx="212.2" cy="714.2" rx="3.9" ry="2.9" transform="rotate(-48 212.2 714.2)"/><ellipse cx="234.2" cy="775.1" rx="3.0" ry="2.4" transform="rotate(-43 234.2 775.1)"/><ellipse cx="197.6" cy="896.6" rx="2.9" ry="2.5" transform="rotate(67 197.6 896.6)"/><ellipse cx="310.6" cy="833.4" rx="3.4" ry="2.3" transform="rotate(19 310.6 833.4)"/><ellipse cx="198.4" cy="688.0" rx="3.4" ry="2.1" transform="rotate(-14 198.4 688.0)"/><ellipse cx="256.5" cy="670.1" rx="3.7" ry="2.5" transform="rotate(33 256.5 670.1)"/><ellipse cx="329.0" cy="749.7" rx="3.7" ry="2.8" transform="rotate(-11 329.0 749.7)"/><ellipse cx="324.5" cy="844.6" rx="3.9" ry="3.0" transform="rotate(25 324.5 844.6)"/><ellipse cx="232.0" cy="804.4" rx="2.9" ry="2.5" transform="rotate(39 232.0 804.4)"/><ellipse cx="247.7" cy="817.4" rx="4.3" ry="2.3" transform="rotate(21 247.7 817.4)"/><ellipse cx="187.2" cy="781.0" rx="3.0" ry="2.9" transform="rotate(61 187.2 781.0)"/><ellipse cx="265.6" cy="658.9" rx="3.7" ry="2.6" transform="rotate(30 265.6 658.9)"/><ellipse cx="245.0" cy="841.5" rx="2.9" ry="3.1" transform="rotate(-20 245.0 841.5)"/><ellipse cx="294.8" cy="728.2" rx="3.2" ry="2.3" transform="rotate(33 294.8 728.2)"/><ellipse cx="202.1" cy="845.3" rx="4.1" ry="2.7" transform="rotate(-4 202.1 845.3)"/><ellipse cx="314.0" cy="760.2" rx="3.2" ry="2.6" transform="rotate(-52 314.0 760.2)"/><ellipse cx="316.9" cy="728.9" rx="4.1" ry="2.4" transform="rotate(-17 316.9 728.9)"/><ellipse cx="298.7" cy="708.6" rx="3.1" ry="2.4" transform="rotate(-2 298.7 708.6)"/><ellipse cx="284.2" cy="635.1" rx="2.7" ry="3.1" transform="rotate(21 284.2 635.1)"/><ellipse cx="307.5" cy="726.6" rx="3.0" ry="3.0" transform="rotate(40 307.5 726.6)"/><ellipse cx="280.2" cy="846.6" rx="3.8" ry="3.0" transform="rotate(40 280.2 846.6)"/><ellipse cx="293.9" cy="777.5" rx="4.0" ry="2.5" transform="rotate(53 293.9 777.5)"/><ellipse cx="271.5" cy="704.0" rx="3.1" ry="2.2" transform="rotate(0 271.5 704.0)"/><ellipse cx="190.5" cy="759.9" rx="2.9" ry="2.6" transform="rotate(0 190.5 759.9)"/><ellipse cx="268.9" cy="869.2" rx="2.7" ry="2.9" transform="rotate(-4 268.9 869.2)"/><ellipse cx="249.3" cy="896.1" rx="2.8" ry="2.7" transform="rotate(19 249.3 896.1)"/><ellipse cx="185.7" cy="799.3" rx="3.9" ry="3.0" transform="rotate(-23 185.7 799.3)"/><ellipse cx="260.0" cy="878.7" rx="2.8" ry="2.8" transform="rotate(17 260.0 878.7)"/><ellipse cx="236.2" cy="868.8" rx="3.3" ry="2.6" transform="rotate(3 236.2 868.8)"/><ellipse cx="271.3" cy="859.2" rx="3.2" ry="2.9" transform="rotate(-13 271.3 859.2)"/><ellipse cx="263.1" cy="706.0" rx="3.6" ry="3.1" transform="rotate(21 263.1 706.0)"/><ellipse cx="308.8" cy="642.1" rx="3.9" ry="3.0" transform="rotate(6 308.8 642.1)"/><ellipse cx="182.0" cy="683.4" rx="4.3" ry="2.7" transform="rotate(22 182.0 683.4)"/><ellipse cx="280.7" cy="801.2" rx="3.8" ry="2.8" transform="rotate(13 280.7 801.2)"/><ellipse cx="292.0" cy="689.7" rx="3.8" ry="2.6" transform="rotate(36 292.0 689.7)"/><ellipse cx="197.5" cy="681.0" rx="2.8" ry="2.9" transform="rotate(57 197.5 681.0)"/><ellipse cx="315.1" cy="848.1" rx="3.7" ry="2.4" transform="rotate(-27 315.1 848.1)"/><ellipse cx="249.8" cy="718.9" rx="3.4" ry="2.7" transform="rotate(60 249.8 718.9)"/><ellipse cx="189.9" cy="787.6" rx="2.8" ry="2.2" transform="rotate(43 189.9 787.6)"/><ellipse cx="253.8" cy="634.9" rx="3.4" ry="2.7" transform="rotate(61 253.8 634.9)"/><ellipse cx="248.2" cy="659.2" rx="3.8" ry="2.3" transform="rotate(-48 248.2 659.2)"/><ellipse cx="338.5" cy="655.3" rx="4.2" ry="2.2" transform="rotate(-67 338.5 655.3)"/><ellipse cx="189.2" cy="844.6" rx="3.9" ry="3.0" transform="rotate(32 189.2 844.6)"/><ellipse cx="296.6" cy="758.1" rx="4.3" ry="2.4" transform="rotate(65 296.6 758.1)"/><ellipse cx="297.9" cy="634.1" rx="2.7" ry="2.8" transform="rotate(44 297.9 634.1)"/><ellipse cx="299.9" cy="676.8" rx="4.2" ry="2.6" transform="rotate(-61 299.9 676.8)"/><ellipse cx="240.9" cy="789.7" rx="3.4" ry="2.8" transform="rotate(-49 240.9 789.7)"/><ellipse cx="308.9" cy="787.4" rx="3.2" ry="2.2" transform="rotate(66 308.9 787.4)"/><ellipse cx="235.1" cy="798.2" rx="4.4" ry="2.9" transform="rotate(14 235.1 798.2)"/><ellipse cx="292.6" cy="797.1" rx="4.2" ry="2.9" transform="rotate(-30 292.6 797.1)"/><ellipse cx="249.9" cy="792.9" rx="4.1" ry="3.0" transform="rotate(-64 249.9 792.9)"/><ellipse cx="225.6" cy="865.9" rx="4.1" ry="2.8" transform="rotate(57 225.6 865.9)"/><ellipse cx="271.2" cy="851.1" rx="3.0" ry="2.9" transform="rotate(60 271.2 851.1)"/><ellipse cx="214.7" cy="701.3" rx="4.0" ry="2.9" transform="rotate(-5 214.7 701.3)"/><ellipse cx="306.9" cy="695.3" rx="3.7" ry="3.0" transform="rotate(53 306.9 695.3)"/><ellipse cx="277.1" cy="683.2" rx="3.0" ry="2.3" transform="rotate(28 277.1 683.2)"/><ellipse cx="205.3" cy="643.3" rx="4.4" ry="2.5" transform="rotate(-55 205.3 643.3)"/><ellipse cx="335.4" cy="882.1" rx="2.8" ry="2.7" transform="rotate(-14 335.4 882.1)"/><ellipse cx="222.9" cy="786.8" rx="3.8" ry="3.1" transform="rotate(23 222.9 786.8)"/><ellipse cx="207.0" cy="897.6" rx="4.4" ry="2.3" transform="rotate(-64 207.0 897.6)"/><ellipse cx="317.5" cy="644.0" rx="4.0" ry="2.8" transform="rotate(20 317.5 644.0)"/><ellipse cx="304.5" cy="660.1" rx="3.3" ry="2.4" transform="rotate(-52 304.5 660.1)"/><ellipse cx="219.9" cy="670.5" rx="3.9" ry="2.1" transform="rotate(30 219.9 670.5)"/><ellipse cx="212.8" cy="640.9" rx="4.3" ry="2.3" transform="rotate(60 212.8 640.9)"/><ellipse cx="203.8" cy="754.4" rx="2.9" ry="3.0" transform="rotate(47 203.8 754.4)"/><ellipse cx="322.9" cy="704.5" rx="3.4" ry="2.3" transform="rotate(-32 322.9 704.5)"/><ellipse cx="232.8" cy="880.3" rx="2.9" ry="3.1" transform="rotate(-62 232.8 880.3)"/><ellipse cx="326.9" cy="815.4" rx="3.1" ry="2.6" transform="rotate(-29 326.9 815.4)"/><ellipse cx="340.5" cy="635.4" rx="4.1" ry="2.4" transform="rotate(-50 340.5 635.4)"/><ellipse cx="181.3" cy="860.7" rx="3.6" ry="2.3" transform="rotate(-9 181.3 860.7)"/><ellipse cx="329.7" cy="691.2" rx="3.7" ry="2.2" transform="rotate(-44 329.7 691.2)"/><ellipse cx="296.4" cy="855.0" rx="3.7" ry="2.3" transform="rotate(-60 296.4 855.0)"/><ellipse cx="298.6" cy="646.3" rx="4.1" ry="2.4" transform="rotate(47 298.6 646.3)"/><ellipse cx="321.9" cy="767.1" rx="2.7" ry="3.0" transform="rotate(-3 321.9 767.1)"/><ellipse cx="211.3" cy="860.5" rx="3.3" ry="2.3" transform="rotate(-18 211.3 860.5)"/><ellipse cx="296.9" cy="736.3" rx="4.0" ry="2.2" transform="rotate(52 296.9 736.3)"/><ellipse cx="264.7" cy="777.4" rx="3.6" ry="2.1" transform="rotate(65 264.7 777.4)"/><ellipse cx="266.2" cy="824.9" rx="2.9" ry="3.0" transform="rotate(30 266.2 824.9)"/><ellipse cx="247.1" cy="668.8" rx="3.7" ry="3.0" transform="rotate(-49 247.1 668.8)"/><ellipse cx="266.7" cy="740.2" rx="4.3" ry="2.9" transform="rotate(-22 266.7 740.2)"/><ellipse cx="189.7" cy="773.8" rx="4.3" ry="3.0" transform="rotate(-35 189.7 773.8)"/><ellipse cx="186.6" cy="808.1" rx="3.2" ry="2.8" transform="rotate(-31 186.6 808.1)"/><ellipse cx="282.3" cy="700.2" rx="3.6" ry="2.5" transform="rotate(63 282.3 700.2)"/><ellipse cx="227.9" cy="715.3" rx="3.8" ry="2.2" transform="rotate(13 227.9 715.3)"/><ellipse cx="268.0" cy="672.0" rx="2.9" ry="2.2" transform="rotate(-28 268.0 672.0)"/><ellipse cx="342.0" cy="712.6" rx="4.0" ry="2.3" transform="rotate(-60 342.0 712.6)"/><ellipse cx="238.5" cy="817.4" rx="3.7" ry="2.9" transform="rotate(44 238.5 817.4)"/><ellipse cx="265.4" cy="834.9" rx="4.0" ry="2.9" transform="rotate(-3 265.4 834.9)"/><ellipse cx="322.9" cy="632.2" rx="4.0" ry="2.7" transform="rotate(0 322.9 632.2)"/><ellipse cx="233.5" cy="848.2" rx="4.1" ry="2.6" transform="rotate(-7 233.5 848.2)"/><ellipse cx="204.6" cy="789.8" rx="3.7" ry="2.2" transform="rotate(58 204.6 789.8)"/><ellipse cx="317.6" cy="895.6" rx="3.0" ry="2.5" transform="rotate(57 317.6 895.6)"/><ellipse cx="197.1" cy="734.3" rx="3.4" ry="2.7" transform="rotate(10 197.1 734.3)"/><ellipse cx="260.3" cy="752.5" rx="3.8" ry="3.1" transform="rotate(-21 260.3 752.5)"/><ellipse cx="314.8" cy="904.3" rx="4.2" ry="2.5" transform="rotate(-48 314.8 904.3)"/><ellipse cx="187.9" cy="744.6" rx="4.0" ry="2.4" transform="rotate(26 187.9 744.6)"/><ellipse cx="318.3" cy="792.8" rx="3.8" ry="2.3" transform="rotate(0 318.3 792.8)"/><ellipse cx="286.4" cy="777.7" rx="4.4" ry="2.7" transform="rotate(-12 286.4 777.7)"/><ellipse cx="200.8" cy="674.3" rx="4.0" ry="2.2" transform="rotate(-55 200.8 674.3)"/><ellipse cx="233.6" cy="828.5" rx="3.3" ry="2.3" transform="rotate(-32 233.6 828.5)"/><ellipse cx="197.2" cy="880.5" rx="3.7" ry="2.4" transform="rotate(-7 197.2 880.5)"/><ellipse cx="326.2" cy="791.8" rx="4.3" ry="2.5" transform="rotate(16 326.2 791.8)"/><ellipse cx="314.0" cy="714.8" rx="3.7" ry="3.1" transform="rotate(0 314.0 714.8)"/><ellipse cx="296.1" cy="656.6" rx="3.2" ry="2.9" transform="rotate(-52 296.1 656.6)"/><ellipse cx="323.2" cy="664.9" rx="3.6" ry="2.6" transform="rotate(-32 323.2 664.9)"/><ellipse cx="262.6" cy="713.0" rx="2.8" ry="2.4" transform="rotate(-38 262.6 713.0)"/><ellipse cx="185.8" cy="818.6" rx="3.8" ry="2.5" transform="rotate(-12 185.8 818.6)"/><ellipse cx="187.5" cy="675.7" rx="3.0" ry="2.4" transform="rotate(-16 187.5 675.7)"/><ellipse cx="285.0" cy="680.6" rx="4.1" ry="2.7" transform="rotate(30 285.0 680.6)"/><ellipse cx="222.5" cy="751.0" rx="3.9" ry="2.4" transform="rotate(-69 222.5 751.0)"/><ellipse cx="188.7" cy="698.5" rx="2.9" ry="2.9" transform="rotate(-40 188.7 698.5)"/><ellipse cx="294.8" cy="749.2" rx="3.6" ry="3.0" transform="rotate(-52 294.8 749.2)"/><ellipse cx="333.5" cy="728.0" rx="3.2" ry="3.0" transform="rotate(-50 333.5 728.0)"/><ellipse cx="313.9" cy="782.3" rx="4.0" ry="2.3" transform="rotate(23 313.9 782.3)"/><ellipse cx="278.6" cy="758.3" rx="4.0" ry="2.9" transform="rotate(-53 278.6 758.3)"/><ellipse cx="297.9" cy="901.5" rx="3.7" ry="2.2" transform="rotate(-1 297.9 901.5)"/><ellipse cx="251.8" cy="683.4" rx="3.6" ry="2.1" transform="rotate(58 251.8 683.4)"/><ellipse cx="229.3" cy="682.3" rx="3.8" ry="2.9" transform="rotate(59 229.3 682.3)"/><ellipse cx="195.6" cy="642.0" rx="3.4" ry="2.3" transform="rotate(31 195.6 642.0)"/><ellipse cx="253.2" cy="786.5" rx="3.3" ry="2.3" transform="rotate(-58 253.2 786.5)"/><ellipse cx="342.5" cy="830.2" rx="2.9" ry="2.9" transform="rotate(-15 342.5 830.2)"/><ellipse cx="322.9" cy="677.4" rx="4.0" ry="2.4" transform="rotate(36 322.9 677.4)"/><ellipse cx="291.1" cy="701.3" rx="3.0" ry="2.5" transform="rotate(47 291.1 701.3)"/><ellipse cx="184.4" cy="661.5" rx="4.1" ry="2.3" transform="rotate(7 184.4 661.5)"/><ellipse cx="228.3" cy="820.7" rx="3.3" ry="2.2" transform="rotate(52 228.3 820.7)"/><ellipse cx="205.6" cy="769.5" rx="4.2" ry="2.9" transform="rotate(-65 205.6 769.5)"/><ellipse cx="318.8" cy="739.6" rx="4.2" ry="2.7" transform="rotate(-59 318.8 739.6)"/><ellipse cx="275.1" cy="738.1" rx="3.3" ry="2.1" transform="rotate(11 275.1 738.1)"/><ellipse cx="255.9" cy="903.2" rx="2.8" ry="2.2" transform="rotate(23 255.9 903.2)"/><ellipse cx="306.7" cy="871.8" rx="4.0" ry="2.7" transform="rotate(18 306.7 871.8)"/><ellipse cx="230.6" cy="841.7" rx="4.0" ry="2.6" transform="rotate(18 230.6 841.7)"/><ellipse cx="238.1" cy="783.0" rx="3.4" ry="2.2" transform="rotate(-22 238.1 783.0)"/><ellipse cx="233.7" cy="903.8" rx="3.5" ry="2.5" transform="rotate(-35 233.7 903.8)"/><ellipse cx="191.8" cy="714.2" rx="3.2" ry="2.8" transform="rotate(7 191.8 714.2)"/><ellipse cx="275.6" cy="903.5" rx="3.3" ry="2.9" transform="rotate(-10 275.6 903.5)"/><ellipse cx="213.7" cy="797.4" rx="4.2" ry="2.7" transform="rotate(-42 213.7 797.4)"/><ellipse cx="211.7" cy="779.2" rx="4.2" ry="2.7" transform="rotate(59 211.7 779.2)"/><ellipse cx="215.6" cy="721.2" rx="4.0" ry="2.7" transform="rotate(-13 215.6 721.2)"/><ellipse cx="235.5" cy="767.4" rx="3.7" ry="2.4" transform="rotate(-5 235.5 767.4)"/><ellipse cx="299.0" cy="721.8" rx="2.9" ry="2.3" transform="rotate(-50 299.0 721.8)"/><ellipse cx="313.7" cy="747.8" rx="3.6" ry="2.7" transform="rotate(7 313.7 747.8)"/><ellipse cx="305.4" cy="845.2" rx="3.2" ry="2.9" transform="rotate(66 305.4 845.2)"/><ellipse cx="258.5" cy="811.9" rx="4.0" ry="2.5" transform="rotate(68 258.5 811.9)"/><ellipse cx="210.6" cy="890.4" rx="3.3" ry="2.2" transform="rotate(-45 210.6 890.4)"/><ellipse cx="247.8" cy="884.7" rx="4.3" ry="2.7" transform="rotate(-38 247.8 884.7)"/><ellipse cx="251.7" cy="694.9" rx="3.0" ry="2.9" transform="rotate(19 251.7 694.9)"/><ellipse cx="215.2" cy="874.9" rx="3.3" ry="2.9" transform="rotate(50 215.2 874.9)"/><ellipse cx="210.7" cy="869.5" rx="4.4" ry="2.4" transform="rotate(-66 210.7 869.5)"/><ellipse cx="293.4" cy="641.5" rx="3.6" ry="2.3" transform="rotate(-9 293.4 641.5)"/><ellipse cx="292.7" cy="671.8" rx="4.0" ry="2.6" transform="rotate(-54 292.7 671.8)"/><ellipse cx="325.0" cy="832.9" rx="3.2" ry="2.3" transform="rotate(-32 325.0 832.9)"/><ellipse cx="204.3" cy="906.5" rx="2.7" ry="2.7" transform="rotate(59 204.3 906.5)"/><ellipse cx="181.2" cy="837.0" rx="4.2" ry="2.6" transform="rotate(12 181.2 837.0)"/><ellipse cx="242.8" cy="827.6" rx="3.4" ry="2.6" transform="rotate(15 242.8 827.6)"/><ellipse cx="206.1" cy="700.4" rx="2.9" ry="2.5" transform="rotate(42 206.1 700.4)"/><ellipse cx="343.5" cy="822.8" rx="3.5" ry="2.6" transform="rotate(41 343.5 822.8)"/><ellipse cx="284.7" cy="868.1" rx="3.0" ry="2.5" transform="rotate(40 284.7 868.1)"/><ellipse cx="188.2" cy="753.1" rx="3.3" ry="2.8" transform="rotate(-28 188.2 753.1)"/><ellipse cx="247.5" cy="809.9" rx="4.1" ry="2.5" transform="rotate(-16 247.5 809.9)"/><ellipse cx="289.5" cy="721.9" rx="2.8" ry="2.9" transform="rotate(-16 289.5 721.9)"/><ellipse cx="252.7" cy="766.6" rx="3.6" ry="2.9" transform="rotate(23 252.7 766.6)"/><ellipse cx="314.2" cy="659.1" rx="2.9" ry="2.9" transform="rotate(9 314.2 659.1)"/><ellipse cx="322.3" cy="852.3" rx="4.2" ry="2.4" transform="rotate(-41 322.3 852.3)"/><ellipse cx="192.7" cy="795.6" rx="3.0" ry="3.0" transform="rotate(8 192.7 795.6)"/><ellipse cx="260.0" cy="869.5" rx="3.7" ry="2.6" transform="rotate(-57 260.0 869.5)"/><ellipse cx="309.4" cy="795.4" rx="3.5" ry="2.1" transform="rotate(1 309.4 795.4)"/><ellipse cx="238.5" cy="734.4" rx="3.8" ry="2.3" transform="rotate(-46 238.5 734.4)"/><ellipse cx="182.8" cy="890.5" rx="3.4" ry="2.5" transform="rotate(-57 182.8 890.5)"/><ellipse cx="343.6" cy="849.5" rx="3.5" ry="2.6" transform="rotate(39 343.6 849.5)"/><ellipse cx="292.3" cy="890.9" rx="4.1" ry="2.5" transform="rotate(-57 292.3 890.9)"/><ellipse cx="200.7" cy="819.5" rx="2.8" ry="2.9" transform="rotate(-44 200.7 819.5)"/><ellipse cx="335.0" cy="756.5" rx="4.1" ry="2.4" transform="rotate(-20 335.0 756.5)"/><ellipse cx="254.0" cy="838.3" rx="4.2" ry="2.8" transform="rotate(34 254.0 838.3)"/><ellipse cx="302.8" cy="808.1" rx="3.2" ry="2.9" transform="rotate(-29 302.8 808.1)"/><ellipse cx="226.2" cy="675.7" rx="3.7" ry="2.9" transform="rotate(41 226.2 675.7)"/><ellipse cx="337.8" cy="682.7" rx="3.2" ry="3.0" transform="rotate(-42 337.8 682.7)"/><ellipse cx="214.2" cy="881.8" rx="3.5" ry="2.9" transform="rotate(19 214.2 881.8)"/><ellipse cx="293.8" cy="844.8" rx="3.4" ry="3.0" transform="rotate(33 293.8 844.8)"/><ellipse cx="283.7" cy="831.0" rx="3.7" ry="2.5" transform="rotate(1 283.7 831.0)"/><ellipse cx="330.4" cy="631.6" rx="4.1" ry="2.7" transform="rotate(44 330.4 631.6)"/><ellipse cx="269.9" cy="711.3" rx="3.4" ry="2.1" transform="rotate(34 269.9 711.3)"/><ellipse cx="270.0" cy="728.3" rx="2.9" ry="2.8" transform="rotate(48 270.0 728.3)"/><ellipse cx="305.3" cy="671.8" rx="3.7" ry="3.1" transform="rotate(37 305.3 671.8)"/><ellipse cx="182.1" cy="651.7" rx="2.9" ry="2.8" transform="rotate(13 182.1 651.7)"/><ellipse cx="325.5" cy="885.2" rx="3.3" ry="2.9" transform="rotate(38 325.5 885.2)"/><ellipse cx="285.9" cy="794.2" rx="3.8" ry="2.7" transform="rotate(27 285.9 794.2)"/><ellipse cx="191.9" cy="635.0" rx="3.3" ry="2.2" transform="rotate(-54 191.9 635.0)"/><ellipse cx="306.4" cy="680.1" rx="2.9" ry="2.4" transform="rotate(-12 306.4 680.1)"/><ellipse cx="285.6" cy="761.2" rx="4.2" ry="2.2" transform="rotate(22 285.6 761.2)"/><ellipse cx="337.9" cy="867.8" rx="2.9" ry="3.0" transform="rotate(3 337.9 867.8)"/><ellipse cx="301.7" cy="779.2" rx="3.1" ry="2.6" transform="rotate(14 301.7 779.2)"/><ellipse cx="240.9" cy="880.2" rx="3.0" ry="2.3" transform="rotate(13 240.9 880.2)"/><ellipse cx="184.7" cy="734.2" rx="3.0" ry="2.9" transform="rotate(-69 184.7 734.2)"/><ellipse cx="254.7" cy="743.9" rx="4.2" ry="2.8" transform="rotate(50 254.7 743.9)"/><ellipse cx="266.4" cy="818.0" rx="2.8" ry="2.8" transform="rotate(17 266.4 818.0)"/><ellipse cx="311.3" cy="633.7" rx="3.5" ry="2.8" transform="rotate(29 311.3 633.7)"/><ellipse cx="334.6" cy="790.2" rx="3.3" ry="2.8" transform="rotate(-8 334.6 790.2)"/><ellipse cx="337.9" cy="842.6" rx="4.1" ry="2.7" transform="rotate(18 337.9 842.6)"/><ellipse cx="213.0" cy="842.5" rx="3.2" ry="2.4" transform="rotate(45 213.0 842.5)"/><ellipse cx="218.4" cy="851.0" rx="4.1" ry="2.2" transform="rotate(12 218.4 851.0)"/><ellipse cx="212.2" cy="826.3" rx="4.1" ry="2.9" transform="rotate(-37 212.2 826.3)"/><ellipse cx="231.7" cy="813.9" rx="3.1" ry="2.3" transform="rotate(-38 231.7 813.9)"/><ellipse cx="332.2" cy="888.8" rx="3.8" ry="2.2" transform="rotate(-6 332.2 888.8)"/><ellipse cx="284.8" cy="707.9" rx="2.8" ry="3.1" transform="rotate(57 284.8 707.9)"/><ellipse cx="306.6" cy="751.7" rx="2.8" ry="2.5" transform="rotate(-56 306.6 751.7)"/><ellipse cx="336.9" cy="797.7" rx="3.2" ry="2.6" transform="rotate(30 336.9 797.7)"/><ellipse cx="342.5" cy="672.0" rx="4.2" ry="2.4" transform="rotate(-45 342.5 672.0)"/><ellipse cx="314.5" cy="704.4" rx="3.3" ry="2.5" transform="rotate(-20 314.5 704.4)"/><ellipse cx="299.7" cy="839.3" rx="4.1" ry="2.4" transform="rotate(21 299.7 839.3)"/><ellipse cx="302.3" cy="817.8" rx="3.8" ry="2.1" transform="rotate(51 302.3 817.8)"/><ellipse cx="264.3" cy="888.4" rx="3.7" ry="2.2" transform="rotate(18 264.3 888.4)"/><ellipse cx="222.7" cy="773.6" rx="3.0" ry="2.7" transform="rotate(56 222.7 773.6)"/><ellipse cx="297.1" cy="827.1" rx="3.2" ry="2.9" transform="rotate(59 297.1 827.1)"/><ellipse cx="192.4" cy="850.9" rx="3.9" ry="2.2" transform="rotate(-5 192.4 850.9)"/><ellipse cx="187.2" cy="646.4" rx="2.9" ry="2.1" transform="rotate(29 187.2 646.4)"/><ellipse cx="207.4" cy="680.9" rx="3.7" ry="2.8" transform="rotate(65 207.4 680.9)"/><ellipse cx="273.9" cy="832.0" rx="3.4" ry="3.1" transform="rotate(63 273.9 832.0)"/><ellipse cx="280.6" cy="674.7" rx="4.2" ry="2.6" transform="rotate(-31 280.6 674.7)"/><ellipse cx="325.4" cy="732.5" rx="4.3" ry="3.1" transform="rotate(-50 325.4 732.5)"/><ellipse cx="279.6" cy="713.9" rx="4.3" ry="2.3" transform="rotate(66 279.6 713.9)"/><ellipse cx="317.4" cy="815.7" rx="3.9" ry="3.0" transform="rotate(68 317.4 815.7)"/><ellipse cx="232.0" cy="787.9" rx="2.7" ry="2.5" transform="rotate(56 232.0 787.9)"/><ellipse cx="224.6" cy="874.0" rx="3.6" ry="2.4" transform="rotate(65 224.6 874.0)"/><ellipse cx="343.0" cy="905.2" rx="3.8" ry="2.8" transform="rotate(-47 343.0 905.2)"/><ellipse cx="248.3" cy="781.0" rx="2.7" ry="2.2" transform="rotate(-10 248.3 781.0)"/><ellipse cx="220.4" cy="858.4" rx="3.1" ry="2.2" transform="rotate(-3 220.4 858.4)"/><ellipse cx="333.2" cy="855.8" rx="3.5" ry="2.2" transform="rotate(-2 333.2 855.8)"/><ellipse cx="294.7" cy="790.6" rx="4.4" ry="2.1" transform="rotate(30 294.7 790.6)"/><ellipse cx="215.7" cy="755.8" rx="3.3" ry="2.4" transform="rotate(-19 215.7 755.8)"/><ellipse cx="206.7" cy="708.5" rx="4.3" ry="3.0" transform="rotate(-23 206.7 708.5)"/><ellipse cx="319.8" cy="876.8" rx="3.4" ry="2.3" transform="rotate(38 319.8 876.8)"/><ellipse cx="244.1" cy="851.7" rx="2.9" ry="2.4" transform="rotate(35 244.1 851.7)"/><ellipse cx="227.3" cy="654.3" rx="4.3" ry="2.5" transform="rotate(-53 227.3 654.3)"/><ellipse cx="234.4" cy="721.6" rx="4.1" ry="2.4" transform="rotate(-11 234.4 721.6)"/><ellipse cx="209.2" cy="809.1" rx="3.9" ry="2.4" transform="rotate(20 209.2 809.1)"/><ellipse cx="265.9" cy="635.3" rx="4.2" ry="2.5" transform="rotate(46 265.9 635.3)"/><ellipse cx="342.3" cy="752.5" rx="4.1" ry="2.4" transform="rotate(59 342.3 752.5)"/><ellipse cx="331.8" cy="783.4" rx="3.7" ry="3.0" transform="rotate(-49 331.8 783.4)"/><ellipse cx="288.3" cy="743.1" rx="3.6" ry="2.3" transform="rotate(58 288.3 743.1)"/><ellipse cx="285.7" cy="812.3" rx="3.8" ry="2.1" transform="rotate(-8 285.7 812.3)"/><ellipse cx="338.9" cy="719.8" rx="3.8" ry="2.9" transform="rotate(-14 338.9 719.8)"/><ellipse cx="272.4" cy="745.9" rx="2.8" ry="2.5" transform="rotate(58 272.4 745.9)"/><ellipse cx="201.6" cy="761.6" rx="2.7" ry="2.3" transform="rotate(-38 201.6 761.6)"/><ellipse cx="214.3" cy="906.3" rx="3.8" ry="2.9" transform="rotate(8 214.3 906.3)"/><ellipse cx="317.8" cy="697.4" rx="4.0" ry="2.8" transform="rotate(61 317.8 697.4)"/><ellipse cx="263.4" cy="720.2" rx="3.7" ry="3.1" transform="rotate(-41 263.4 720.2)"/><ellipse cx="197.7" cy="832.9" rx="4.1" ry="2.7" transform="rotate(-53 197.7 832.9)"/><ellipse cx="331.1" cy="717.5" rx="3.9" ry="2.8" transform="rotate(48 331.1 717.5)"/><ellipse cx="325.9" cy="697.9" rx="3.9" ry="2.8" transform="rotate(-52 325.9 697.9)"/><ellipse cx="257.1" cy="856.0" rx="3.0" ry="2.2" transform="rotate(-21 257.1 856.0)"/><ellipse cx="262.8" cy="843.1" rx="3.0" ry="2.5" transform="rotate(68 262.8 843.1)"/><ellipse cx="303.7" cy="760.3" rx="3.4" ry="2.3" transform="rotate(42 303.7 760.3)"/><ellipse cx="306.5" cy="717.9" rx="3.1" ry="2.9" transform="rotate(7 306.5 717.9)"/><ellipse cx="181.1" cy="702.5" rx="3.8" ry="2.9" transform="rotate(19 181.1 702.5)"/><ellipse cx="267.1" cy="679.1" rx="4.1" ry="2.2" transform="rotate(17 267.1 679.1)"/><ellipse cx="246.8" cy="762.1" rx="3.4" ry="2.9" transform="rotate(56 246.8 762.1)"/><ellipse cx="315.6" cy="651.8" rx="2.9" ry="2.4" transform="rotate(-52 315.6 651.8)"/><ellipse cx="257.0" cy="801.1" rx="3.0" ry="3.0" transform="rotate(53 257.0 801.1)"/><ellipse cx="207.5" cy="742.0" rx="3.9" ry="2.4" transform="rotate(41 207.5 742.0)"/><ellipse cx="200.7" cy="634.7" rx="2.9" ry="2.9" transform="rotate(46 200.7 634.7)"/><ellipse cx="306.7" cy="852.2" rx="3.7" ry="3.1" transform="rotate(38 306.7 852.2)"/><ellipse cx="273.4" cy="652.2" rx="2.9" ry="2.4" transform="rotate(-52 273.4 652.2)"/><ellipse cx="300.2" cy="801.0" rx="3.1" ry="2.8" transform="rotate(45 300.2 801.0)"/><ellipse cx="219.1" cy="736.4" rx="2.9" ry="2.9" transform="rotate(-44 219.1 736.4)"/><ellipse cx="231.2" cy="660.0" rx="3.5" ry="2.2" transform="rotate(-45 231.2 660.0)"/><ellipse cx="253.4" cy="727.1" rx="3.6" ry="2.6" transform="rotate(-15 253.4 727.1)"/><ellipse cx="268.1" cy="791.7" rx="2.8" ry="2.8" transform="rotate(-17 268.1 791.7)"/><ellipse cx="277.9" cy="644.9" rx="4.2" ry="2.3" transform="rotate(-36 277.9 644.9)"/><ellipse cx="231.4" cy="861.1" rx="4.3" ry="3.0" transform="rotate(67 231.4 861.1)"/><ellipse cx="254.3" cy="701.8" rx="4.0" ry="3.0" transform="rotate(-50 254.3 701.8)"/><ellipse cx="200.6" cy="660.3" rx="2.8" ry="2.4" transform="rotate(19 200.6 660.3)"/><ellipse cx="271.8" cy="894.3" rx="3.8" ry="3.0" transform="rotate(-55 271.8 894.3)"/><ellipse cx="187.4" cy="905.8" rx="4.2" ry="2.8" transform="rotate(-47 187.4 905.8)"/><ellipse cx="304.8" cy="898.3" rx="4.1" ry="2.9" transform="rotate(62 304.8 898.3)"/><ellipse cx="221.1" cy="681.5" rx="2.9" ry="2.8" transform="rotate(10 221.1 681.5)"/><ellipse cx="314.3" cy="687.1" rx="3.0" ry="2.4" transform="rotate(42 314.3 687.1)"/><ellipse cx="228.0" cy="781.6" rx="4.3" ry="2.3" transform="rotate(-61 228.0 781.6)"/><ellipse cx="293.3" cy="681.2" rx="4.4" ry="2.8" transform="rotate(0 293.3 681.2)"/><ellipse cx="224.8" cy="798.8" rx="3.4" ry="2.6" transform="rotate(5 224.8 798.8)"/><ellipse cx="181.8" cy="774.7" rx="4.2" ry="2.8" transform="rotate(-40 181.8 774.7)"/><ellipse cx="283.6" cy="895.6" rx="3.3" ry="3.0" transform="rotate(42 283.6 895.6)"/><ellipse cx="331.0" cy="848.9" rx="3.2" ry="3.1" transform="rotate(-47 331.0 848.9)"/><ellipse cx="183.2" cy="828.3" rx="3.7" ry="2.6" transform="rotate(-11 183.2 828.3)"/><ellipse cx="280.0" cy="836.9" rx="3.7" ry="2.3" transform="rotate(-58 280.0 836.9)"/><ellipse cx="245.6" cy="867.7" rx="2.7" ry="2.2" transform="rotate(-67 245.6 867.7)"/><ellipse cx="290.0" cy="649.1" rx="4.3" ry="2.8" transform="rotate(-47 290.0 649.1)"/><ellipse cx="330.3" cy="679.2" rx="3.3" ry="2.7" transform="rotate(69 330.3 679.2)"/><ellipse cx="285.1" cy="642.2" rx="3.8" ry="2.8" transform="rotate(-54 285.1 642.2)"/><ellipse cx="279.4" cy="748.4" rx="4.1" ry="2.6" transform="rotate(-20 279.4 748.4)"/><ellipse cx="183.6" cy="869.6" rx="3.3" ry="2.4" transform="rotate(60 183.6 869.6)"/><ellipse cx="259.3" cy="827.9" rx="4.1" ry="3.0" transform="rotate(2 259.3 827.9)"/><ellipse cx="212.3" cy="788.6" rx="3.2" ry="2.3" transform="rotate(52 212.3 788.6)"/><ellipse cx="215.7" cy="655.6" rx="3.2" ry="2.1" transform="rotate(-11 215.7 655.6)"/><ellipse cx="259.6" cy="793.6" rx="2.7" ry="2.3" transform="rotate(33 259.6 793.6)"/><ellipse cx="317.8" cy="721.9" rx="4.1" ry="2.7" transform="rotate(-65 317.8 721.9)"/><ellipse cx="268.1" cy="880.6" rx="2.9" ry="2.8" transform="rotate(13 268.1 880.6)"/><ellipse cx="326.9" cy="671.1" rx="3.8" ry="2.9" transform="rotate(-7 326.9 671.1)"/><ellipse cx="295.9" cy="881.4" rx="3.7" ry="2.7" transform="rotate(54 295.9 881.4)"/><ellipse cx="262.7" cy="860.9" rx="4.0" ry="2.7" transform="rotate(18 262.7 860.9)"/><ellipse cx="274.7" cy="766.5" rx="2.8" ry="3.0" transform="rotate(-35 274.7 766.5)"/><ellipse cx="320.4" cy="751.5" rx="4.0" ry="2.5" transform="rotate(-33 320.4 751.5)"/><ellipse cx="310.1" cy="813.8" rx="3.2" ry="2.3" transform="rotate(19 310.1 813.8)"/><ellipse cx="343.5" cy="778.4" rx="3.1" ry="2.3" transform="rotate(29 343.5 778.4)"/><ellipse cx="213.5" cy="771.9" rx="3.9" ry="2.6" transform="rotate(33 213.5 771.9)"/><ellipse cx="225.4" cy="905.8" rx="4.3" ry="2.5" transform="rotate(-2 225.4 905.8)"/><ellipse cx="183.0" cy="758.2" rx="3.5" ry="2.1" transform="rotate(-48 183.0 758.2)"/><ellipse cx="256.0" cy="663.1" rx="4.4" ry="2.2" transform="rotate(18 256.0 663.1)"/><ellipse cx="256.0" cy="689.0" rx="4.0" ry="3.0" transform="rotate(29 256.0 689.0)"/></g>
</g>
<rect x="17" y="905" width="449.5" height="6" fill="#fff" opacity="0.09"/>
<rect x="17" y="666" width="449.5" height="2.6" fill="#fff" opacity="0.12"/>
<rect x="17" y="783" width="449.5" height="1.2" fill="#fff" opacity="0.17"/><rect x="17" y="785.8" width="449.5" height="1.2" fill="#fff" opacity="0.13"/>
<clipPath id="cov"><path d="M202,646.8 L289,646.6 L289,645.4 L316.2,645.4 L316.6,790 L320.2,880 L207.2,880 L202.5,790Z"/></clipPath>
<g clip-path="url(#cov)">
<g opacity="0.6" filter="url(#b1)">
<rect x="190" y="636" width="140" height="254" fill="#e000f8"/>
<path d="M204.3,646.8L206.7,646.8L209.0,646.7L211.3,646.7L213.7,646.7L216.0,646.7L218.3,646.6L220.2,646.6L220.6,646.8L223.0,647.5L225.3,648.3L225.5,648.4L227.6,649.1L230.0,649.8L230.9,650.1L232.3,650.7L234.6,651.5L236.0,651.9L237.0,652.3L239.3,653.2L240.5,653.6L241.6,654.2L244.0,655.3L244.4,655.4L246.3,656.4L248.0,657.2L248.6,657.5L251.0,658.5L252.3,659.0L253.3,659.3L255.6,660.0L258.0,660.7L258.1,660.7L260.3,661.2L262.6,661.7L265.0,662.1L267.0,662.4L267.3,662.5L269.6,662.7L272.0,663.0L274.3,663.3L276.6,663.6L279.0,663.9L280.7,664.1L281.3,664.2L283.6,664.4L286.0,664.6L288.3,665.0L290.6,665.4L292.7,665.8L291.3,667.6L290.6,667.7L288.3,667.9L286.0,668.2L283.6,668.5L281.3,668.8L279.0,669.2L276.7,669.5L275.7,669.6L274.3,669.7L272.0,669.8L269.7,669.9L267.3,670.1L265.0,670.2L262.7,670.2L260.3,670.3L258.0,670.4L255.7,670.4L253.4,670.5L251.0,670.6L248.7,670.7L246.4,670.8L244.0,670.9L241.7,671.2L239.4,671.5L237.5,671.8L237.0,671.9L234.7,672.3L232.4,672.9L230.1,673.6L229.7,673.7L227.7,674.6L226.1,675.5L226.1,677.3L227.7,678.2L229.4,679.0L230.1,679.2L232.4,679.9L234.7,680.5L236.0,680.7L237.1,681.0L239.4,681.4L241.7,681.7L244.1,682.0L246.4,682.3L247.8,682.4L248.7,682.5L251.1,682.7L253.4,682.9L255.7,683.1L258.1,683.2L260.4,683.4L262.7,683.6L265.0,683.8L267.4,683.9L267.7,684.0L269.7,684.2L272.0,684.4L274.4,684.7L276.7,684.9L279.0,685.1L281.4,685.3L283.7,685.4L286.0,685.6L286.2,685.6L288.4,685.8L290.7,686.0L293.0,686.1L295.3,686.2L297.7,686.3L300.0,686.3L302.3,686.3L304.7,686.3L307.0,686.3L309.3,686.2L311.7,686.1L314.0,685.9L316.3,685.7L316.3,687.1L316.3,688.8L316.3,689.6L314.0,689.7L311.7,689.8L309.3,689.9L307.0,690.1L304.7,690.2L302.3,690.3L300.0,690.5L297.7,690.7L296.1,690.8L295.4,690.8L293.0,690.9L290.7,690.9L288.4,691.0L286.0,691.1L283.7,691.2L281.4,691.3L279.0,691.4L276.7,691.5L274.4,691.5L272.1,691.6L269.7,691.7L267.4,691.8L265.1,691.9L262.7,692.0L260.4,692.0L258.1,692.1L255.8,692.2L253.4,692.3L251.1,692.4L248.8,692.5L246.4,692.6L244.1,692.7L241.8,692.8L239.4,692.9L238.1,693.0L237.1,693.1L234.8,693.2L232.5,693.3L230.1,693.4L227.8,693.4L225.5,693.5L223.1,693.6L220.8,693.7L218.5,693.8L216.1,693.9L213.8,693.9L211.5,694.0L209.2,694.0L206.8,694.1L204.5,694.1L202.2,694.2L202.2,693.3L202.2,692.0L204.5,692.0L206.8,692.0L209.1,691.9L211.5,691.9L213.8,691.8L216.1,691.7L218.5,691.7L220.8,691.6L223.1,691.5L225.5,691.4L227.8,691.4L228.1,691.3L230.1,691.2L232.4,691.0L234.8,690.9L237.1,690.7L239.4,690.6L241.8,690.5L244.1,690.4L246.4,690.3L248.8,690.2L251.1,690.1L253.4,690.0L255.7,689.9L258.1,689.8L260.4,689.8L262.7,689.6L265.1,689.5L267.4,689.4L269.7,689.3L270.7,689.2L272.0,687.7L272.2,687.4L272.0,687.4L269.7,687.2L267.4,687.0L265.1,686.8L262.7,686.6L260.4,686.5L258.1,686.3L255.7,686.2L253.4,686.0L251.1,685.9L250.8,685.9L248.7,685.8L246.4,685.7L244.1,685.5L241.7,685.3L239.4,685.1L237.1,684.8L234.8,684.4L233.9,684.3L232.4,684.0L230.1,683.6L227.8,683.0L226.4,682.6L225.4,682.4L223.1,681.8L220.8,681.2L219.9,680.9L218.4,680.5L216.1,679.7L214.6,679.2L213.8,678.7L211.7,677.4L211.4,676.0L211.4,675.6L211.4,675.6L213.7,674.0L214.0,673.8L216.1,673.0L218.4,672.2L219.3,671.9L220.7,671.5L223.1,670.8L225.4,670.3L226.5,670.1L227.7,669.8L230.0,669.4L232.4,669.1L234.7,668.9L237.0,668.7L239.4,668.6L241.7,668.5L244.0,668.5L246.4,668.4L248.7,668.4L251.0,668.4L253.3,668.4L255.7,668.3L258.0,668.3L260.3,668.2L262.7,668.1L265.0,668.0L267.3,667.9L265.0,667.6L262.7,667.4L260.3,667.1L258.0,666.9L255.7,666.5L254.5,666.2L253.3,666.1L251.0,665.9L248.7,665.7L246.3,665.5L244.0,665.3L241.7,665.1L239.4,664.8L237.6,664.5L237.0,664.4L234.7,663.8L232.4,663.2L231.1,662.8L230.0,662.0L228.6,661.0L227.7,660.2L226.5,659.2L225.3,658.3L224.2,657.4L223.0,656.5L221.8,655.6L220.7,654.8L219.2,653.9L218.3,653.4L216.0,652.1L215.9,652.1L213.7,651.3L211.5,650.3L211.3,650.3L209.0,649.6L206.7,648.8L206.0,648.6L204.3,648.1L202.0,647.4L202.0,646.8ZM204.6,737.1L207.0,737.3L209.3,737.4L211.6,737.5L214.0,737.7L216.3,737.8L218.6,738.0L221.0,738.1L223.3,738.3L223.7,738.3L225.6,738.4L227.9,738.6L230.3,738.8L232.6,738.9L234.9,739.1L237.3,739.3L239.6,739.4L241.9,739.6L244.3,739.7L246.6,739.8L248.9,740.0L251.2,740.1L251.6,740.1L253.6,740.3L255.9,740.5L258.2,740.6L260.6,740.8L262.9,741.0L265.2,741.1L267.6,741.3L269.9,741.4L272.2,741.5L274.5,741.7L276.9,741.8L279.2,742.0L279.8,742.0L281.5,742.1L283.9,742.3L286.2,742.5L288.5,742.6L290.8,742.8L293.2,743.0L295.5,743.1L297.8,743.2L300.2,743.4L302.5,743.5L304.8,743.7L307.2,743.8L308.0,743.8L309.5,744.0L311.8,744.1L314.1,744.3L316.5,744.5L316.5,745.8L316.5,747.4L314.2,747.2L311.8,747.1L309.5,747.0L307.2,746.8L304.8,746.7L302.5,746.5L300.2,746.3L297.8,746.1L295.8,745.9L295.5,745.9L293.2,745.8L290.9,745.7L288.5,745.6L286.2,745.5L283.9,745.4L281.5,745.2L279.2,745.1L276.9,745.0L274.5,744.8L272.2,744.6L269.9,744.5L267.6,744.3L265.6,744.1L265.2,744.1L262.9,744.0L260.6,743.9L258.2,743.8L255.9,743.6L253.6,743.5L251.3,743.4L248.9,743.3L246.6,743.1L244.3,743.0L241.9,742.8L239.6,742.6L237.3,742.4L235.1,742.3L234.9,742.3L232.6,742.2L230.3,742.0L228.0,741.9L225.6,741.8L223.3,741.7L221.0,741.6L218.6,741.4L216.3,741.3L214.0,741.1L211.6,741.0L209.3,740.8L207.0,740.6L204.7,740.4L204.5,740.4L202.3,740.3L202.3,738.4L202.3,737.0ZM204.7,761.6L207.1,761.4L209.4,761.2L211.7,761.1L214.0,761.0L216.4,761.0L218.7,761.1L221.0,761.3L223.4,761.5L225.7,761.8L228.0,762.2L229.6,762.5L230.4,762.7L232.7,763.4L235.0,764.2L235.8,764.5L237.3,765.4L239.2,766.5L239.7,767.0L241.0,768.5L241.6,770.6L241.1,772.5L239.7,774.1L239.4,774.4L237.4,775.8L236.4,776.4L235.1,777.0L232.7,777.8L231.3,778.3L230.4,778.6L228.1,779.2L225.8,779.7L223.4,780.1L222.1,780.3L221.1,780.5L218.8,780.7L216.4,780.9L214.1,781.0L211.8,781.1L209.5,781.1L207.1,781.1L204.8,780.9L202.5,780.7L202.5,780.4L202.5,778.5L202.5,776.5L202.4,774.6L202.4,772.7L202.4,770.8L202.4,768.7L202.4,766.7L202.4,764.7L202.4,762.7L202.4,761.9ZM204.8,789.0L207.2,788.7L209.5,788.6L211.8,788.6L214.1,788.6L216.5,788.7L218.8,788.9L221.1,789.2L223.5,789.6L224.7,789.9L225.8,790.2L228.2,790.9L230.5,791.7L230.7,791.8L232.9,793.0L234.1,793.7L235.3,794.9L236.1,795.7L237.0,797.6L236.8,799.3L235.6,801.0L235.6,801.1L233.4,802.7L233.2,802.8L231.1,803.8L229.2,804.6L228.8,804.7L226.5,805.3L224.2,805.9L221.9,806.3L221.6,806.3L219.6,806.6L217.3,806.9L215.0,807.0L212.7,807.1L210.4,807.1L208.0,807.0L205.7,806.9L203.4,806.7L203.4,806.4L203.3,804.7L203.2,802.9L203.1,801.2L203.0,799.5L202.9,797.7L202.8,795.8L202.7,793.9L202.6,791.9L202.5,790.0L202.5,789.3Z" fill="#8000f0"/>
<path d="M220.6,646.6L223.0,646.6L225.3,646.6L227.6,646.5L230.0,646.5L232.3,646.5L232.7,646.5L234.6,647.2L237.0,648.1L237.4,648.2L239.3,648.8L241.6,649.4L243.9,650.0L244.0,650.0L246.3,650.5L248.6,651.0L251.0,651.4L252.9,651.7L253.3,651.8L255.6,652.2L258.0,652.5L260.3,652.8L262.6,653.1L265.0,653.3L265.6,653.4L267.3,653.6L269.6,653.9L271.9,654.2L274.3,654.4L276.6,654.6L278.9,654.8L281.3,655.0L282.3,655.0L283.6,655.2L285.9,655.4L288.3,655.6L290.6,655.8L292.9,656.0L295.3,656.1L297.6,656.3L299.9,656.4L302.2,656.4L304.6,656.5L306.9,656.5L309.2,656.6L309.7,656.6L311.6,656.6L313.9,656.6L316.2,656.6L316.2,658.3L316.2,660.1L316.2,662.0L316.3,663.8L316.3,665.6L316.3,667.4L316.3,669.2L316.3,669.9L313.9,669.7L311.6,669.5L309.3,669.4L306.9,669.4L305.1,669.3L304.6,669.3L302.3,669.3L300.0,669.3L297.6,669.4L297.5,669.4L295.3,669.5L293.0,669.6L290.6,669.7L288.3,669.8L286.0,670.0L283.6,670.1L281.3,670.3L279.0,670.5L276.7,670.7L274.3,670.8L272.0,671.0L269.7,671.2L267.3,671.4L265.7,671.5L265.0,671.6L262.7,671.7L260.3,671.9L258.0,672.1L255.7,672.3L253.4,672.5L251.0,672.7L248.7,672.9L246.4,673.2L244.0,673.5L244.0,673.5L241.7,674.1L239.4,674.8L237.8,675.4L237.4,677.2L239.4,678.0L241.7,678.9L241.7,678.9L244.1,679.4L246.4,679.7L248.7,680.1L251.1,680.4L252.4,680.6L253.4,680.7L255.7,680.9L258.0,681.2L260.4,681.5L262.7,681.7L265.0,682.0L267.0,682.2L267.4,682.3L269.7,682.6L272.0,682.8L274.4,683.1L276.7,683.3L279.0,683.5L281.4,683.7L282.6,683.8L283.7,683.9L286.0,684.1L288.3,684.3L290.7,684.4L293.0,684.5L295.3,684.6L297.7,684.6L300.0,684.6L302.3,684.6L304.7,684.6L307.0,684.5L309.3,684.3L311.6,684.2L314.0,684.0L316.3,683.7L316.3,685.3L316.3,685.7L314.0,685.9L311.7,686.1L309.3,686.2L307.0,686.3L304.7,686.3L302.3,686.3L300.0,686.3L297.7,686.3L295.3,686.2L293.0,686.1L290.7,686.0L288.4,685.8L286.2,685.6L286.0,685.6L283.7,685.4L281.4,685.3L279.0,685.1L276.7,684.9L274.4,684.7L272.0,684.4L269.7,684.2L267.7,684.0L267.4,683.9L265.0,683.8L262.7,683.6L260.4,683.4L258.1,683.2L255.7,683.1L253.4,682.9L251.1,682.7L248.7,682.5L247.8,682.4L246.4,682.3L244.1,682.0L241.7,681.7L239.4,681.4L237.1,681.0L236.0,680.7L234.7,680.5L232.4,679.9L230.1,679.2L229.4,679.0L227.7,678.2L226.1,677.3L226.1,675.5L227.7,674.6L229.7,673.7L230.1,673.6L232.4,672.9L234.7,672.3L237.0,671.9L237.5,671.8L239.4,671.5L241.7,671.2L244.0,670.9L246.4,670.8L248.7,670.7L251.0,670.6L253.4,670.5L255.7,670.4L258.0,670.4L260.3,670.3L262.7,670.2L265.0,670.2L267.3,670.1L269.7,669.9L272.0,669.8L274.3,669.7L275.7,669.6L276.7,669.5L279.0,669.2L281.3,668.8L283.6,668.5L286.0,668.2L288.3,667.9L290.6,667.7L291.3,667.6L292.7,665.8L290.6,665.4L288.3,665.0L286.0,664.6L283.6,664.4L281.3,664.2L280.7,664.1L279.0,663.9L276.6,663.6L274.3,663.3L272.0,663.0L269.6,662.7L267.3,662.5L267.0,662.4L265.0,662.1L262.6,661.7L260.3,661.2L258.1,660.7L258.0,660.7L255.6,660.0L253.3,659.3L252.3,659.0L251.0,658.5L248.6,657.5L248.0,657.2L246.3,656.4L244.4,655.4L244.0,655.3L241.6,654.2L240.5,653.6L239.3,653.2L237.0,652.3L236.0,651.9L234.6,651.5L232.3,650.7L230.9,650.1L230.0,649.8L227.6,649.1L225.5,648.4L225.3,648.3L223.0,647.5L220.6,646.8L220.2,646.6ZM297.7,690.7L300.0,690.5L302.3,690.3L304.7,690.2L307.0,690.1L309.3,689.9L311.7,689.8L314.0,689.7L316.3,689.6L316.3,690.6L316.3,691.3L314.0,691.4L311.7,691.5L309.3,691.6L307.0,691.7L304.7,691.8L302.3,691.9L300.0,692.0L297.7,692.0L295.4,692.1L293.0,692.2L290.7,692.3L288.4,692.4L286.0,692.5L284.1,692.6L283.7,692.6L281.4,692.7L279.1,692.8L276.7,692.9L274.4,693.0L272.1,693.0L269.7,693.1L267.4,693.2L265.1,693.3L262.7,693.4L260.4,693.4L258.1,693.5L255.8,693.6L253.4,693.7L251.1,693.8L248.8,693.9L246.4,694.0L244.1,694.1L241.8,694.3L239.4,694.4L237.1,694.5L234.8,694.6L232.5,694.7L230.9,694.8L230.1,694.9L227.8,695.0L225.5,695.1L223.1,695.3L220.8,695.4L218.5,695.5L216.2,695.6L213.8,695.7L211.5,695.8L209.2,695.9L206.8,696.0L204.5,696.1L202.2,696.1L202.2,695.1L202.2,694.2L204.5,694.1L206.8,694.1L209.2,694.0L211.5,694.0L213.8,693.9L216.1,693.9L218.5,693.8L220.8,693.7L223.1,693.6L225.5,693.5L227.8,693.4L230.1,693.4L232.5,693.3L234.8,693.2L237.1,693.1L238.1,693.0L239.4,692.9L241.8,692.8L244.1,692.7L246.4,692.6L248.8,692.5L251.1,692.4L253.4,692.3L255.8,692.2L258.1,692.1L260.4,692.0L262.7,692.0L265.1,691.9L267.4,691.8L269.7,691.7L272.1,691.6L274.4,691.5L276.7,691.5L279.0,691.4L281.4,691.3L283.7,691.2L286.0,691.1L288.4,691.0L290.7,690.9L293.0,690.9L295.4,690.8L296.1,690.8ZM203.8,734.4L204.6,734.4L207.0,734.6L209.3,734.8L211.6,734.9L214.0,735.1L216.3,735.3L218.6,735.5L220.9,735.7L223.3,735.9L225.6,736.1L227.8,736.2L227.9,736.3L230.3,736.4L232.6,736.6L234.9,736.8L237.3,737.0L239.6,737.2L241.9,737.4L244.2,737.6L246.6,737.7L248.9,737.9L251.2,738.1L252.1,738.1L253.6,738.2L255.9,738.4L258.2,738.6L260.6,738.7L262.9,738.9L265.2,739.0L267.5,739.2L269.9,739.4L272.2,739.5L274.5,739.7L276.9,739.8L278.7,740.0L279.2,740.0L281.5,740.2L283.9,740.3L286.2,740.5L288.5,740.7L290.8,740.8L293.2,741.0L295.5,741.1L297.8,741.3L300.2,741.4L302.5,741.6L304.8,741.8L305.8,741.8L307.2,741.9L309.5,742.1L311.8,742.3L314.1,742.4L316.5,742.6L316.5,743.8L316.5,744.5L314.1,744.3L311.8,744.1L309.5,744.0L308.0,743.8L307.2,743.8L304.8,743.7L302.5,743.5L300.2,743.4L297.8,743.2L295.5,743.1L293.2,743.0L290.8,742.8L288.5,742.6L286.2,742.5L283.9,742.3L281.5,742.1L279.8,742.0L279.2,742.0L276.9,741.8L274.5,741.7L272.2,741.5L269.9,741.4L267.6,741.3L265.2,741.1L262.9,741.0L260.6,740.8L258.2,740.6L255.9,740.5L253.6,740.3L251.6,740.1L251.2,740.1L248.9,740.0L246.6,739.8L244.3,739.7L241.9,739.6L239.6,739.4L237.3,739.3L234.9,739.1L232.6,738.9L230.3,738.8L227.9,738.6L225.6,738.4L223.7,738.3L223.3,738.3L221.0,738.1L218.6,738.0L216.3,737.8L214.0,737.7L211.6,737.5L209.3,737.4L207.0,737.3L204.6,737.1L202.3,737.0L202.3,736.4L202.3,734.4L202.3,734.3Z" fill="#3000f0"/>
<path d="M234.6,646.5L237.0,646.4L239.3,646.4L241.6,646.4L244.0,646.4L246.3,646.3L246.9,646.3L248.6,646.9L250.9,647.8L251.8,648.1L253.3,648.4L255.6,648.8L257.9,649.3L260.3,649.7L260.8,649.8L262.6,650.1L264.9,650.4L267.3,650.7L269.6,651.0L271.9,651.3L273.1,651.5L274.3,651.6L276.6,651.9L278.9,652.2L281.3,652.5L283.6,652.7L285.9,652.9L288.3,653.1L288.5,653.2L290.6,653.4L292.9,653.6L295.2,653.8L297.6,653.9L299.9,654.1L302.2,654.2L304.6,654.2L306.9,654.3L309.2,654.3L311.6,654.3L313.9,654.3L316.2,654.3L316.2,654.7L316.2,656.5L316.2,656.6L313.9,656.6L311.6,656.6L309.7,656.6L309.2,656.6L306.9,656.5L304.6,656.5L302.2,656.4L299.9,656.4L297.6,656.3L295.3,656.1L292.9,656.0L290.6,655.8L288.3,655.6L285.9,655.4L283.6,655.2L282.3,655.0L281.3,655.0L278.9,654.8L276.6,654.6L274.3,654.4L271.9,654.2L269.6,653.9L267.3,653.6L265.6,653.4L265.0,653.3L262.6,653.1L260.3,652.8L258.0,652.5L255.6,652.2L253.3,651.8L252.9,651.7L251.0,651.4L248.6,651.0L246.3,650.5L244.0,650.0L243.9,650.0L241.6,649.4L239.3,648.8L237.4,648.2L237.0,648.1L234.6,647.2L232.7,646.5ZM297.6,669.4L300.0,669.3L302.3,669.3L304.6,669.3L305.1,669.3L306.9,669.4L309.3,669.4L311.6,669.5L313.9,669.7L316.3,669.9L316.3,671.0L316.3,671.6L313.9,671.3L311.9,671.1L311.6,671.0L309.3,670.8L306.9,670.7L304.6,670.6L302.3,670.5L300.0,670.5L297.6,670.5L295.3,670.6L293.0,670.6L290.6,670.7L288.3,670.9L286.0,671.0L283.6,671.2L281.3,671.3L281.0,671.4L279.0,671.5L276.7,671.7L274.3,672.0L272.0,672.2L269.7,672.4L267.3,672.7L265.0,673.0L262.7,673.3L262.4,673.4L260.4,673.8L258.0,674.2L255.7,674.8L253.7,675.2L253.4,675.7L252.3,677.1L253.4,677.5L255.7,678.6L256.0,678.8L258.0,679.2L260.4,679.6L262.7,680.1L264.6,680.5L265.0,680.5L267.4,680.9L269.7,681.2L272.0,681.5L274.4,681.8L276.7,682.1L276.9,682.1L279.0,682.4L281.4,682.6L283.7,682.8L286.0,683.0L288.3,683.1L290.7,683.2L293.0,683.3L295.3,683.4L297.7,683.4L300.0,683.4L302.3,683.4L304.7,683.3L307.0,683.2L309.3,683.0L311.6,682.8L314.0,682.6L316.3,682.3L316.3,683.5L316.3,683.7L314.0,684.0L311.6,684.2L309.3,684.3L307.0,684.5L304.7,684.6L302.3,684.6L300.0,684.6L297.7,684.6L295.3,684.6L293.0,684.5L290.7,684.4L288.3,684.3L286.0,684.1L283.7,683.9L282.6,683.8L281.4,683.7L279.0,683.5L276.7,683.3L274.4,683.1L272.0,682.8L269.7,682.6L267.4,682.3L267.0,682.2L265.0,682.0L262.7,681.7L260.4,681.5L258.0,681.2L255.7,680.9L253.4,680.7L252.4,680.6L251.1,680.4L248.7,680.1L246.4,679.7L244.1,679.4L241.7,678.9L241.7,678.9L239.4,678.0L237.4,677.2L237.8,675.4L239.4,674.8L241.7,674.1L244.0,673.5L244.0,673.5L246.4,673.2L248.7,672.9L251.0,672.7L253.4,672.5L255.7,672.3L258.0,672.1L260.3,671.9L262.7,671.7L265.0,671.6L265.7,671.5L267.3,671.4L269.7,671.2L272.0,671.0L274.3,670.8L276.7,670.7L279.0,670.5L281.3,670.3L283.6,670.1L286.0,670.0L288.3,669.8L290.6,669.7L293.0,669.6L295.3,669.5L297.5,669.4ZM286.0,692.5L288.4,692.4L290.7,692.3L293.0,692.2L295.4,692.1L297.7,692.0L300.0,692.0L302.3,691.9L304.7,691.8L307.0,691.7L309.3,691.6L311.7,691.5L314.0,691.4L316.3,691.3L316.3,692.4L316.3,692.5L314.0,692.6L311.7,692.7L309.3,692.8L307.0,692.9L304.7,693.0L302.4,693.0L300.0,693.1L297.7,693.2L295.4,693.3L293.0,693.4L290.7,693.5L288.4,693.6L286.0,693.7L283.7,693.7L281.4,693.8L279.1,693.9L276.7,694.0L274.4,694.1L272.1,694.2L269.7,694.3L267.4,694.4L265.1,694.5L262.7,694.5L262.4,694.6L260.4,694.7L258.1,694.8L255.8,694.9L253.4,695.0L251.1,695.2L248.8,695.3L246.4,695.5L244.1,695.6L241.8,695.8L239.5,696.0L237.1,696.2L234.8,696.4L232.5,696.5L232.1,696.6L230.1,696.8L227.8,697.1L225.5,697.4L223.1,697.7L220.8,698.0L218.5,698.3L217.3,698.5L216.2,698.5L213.8,698.7L211.5,698.9L209.2,699.0L206.8,699.2L204.5,699.3L202.2,699.5L202.2,698.6L202.2,696.8L202.2,696.1L204.5,696.1L206.8,696.0L209.2,695.9L211.5,695.8L213.8,695.7L216.2,695.6L218.5,695.5L220.8,695.4L223.1,695.3L225.5,695.1L227.8,695.0L230.1,694.9L230.9,694.8L232.5,694.7L234.8,694.6L237.1,694.5L239.4,694.4L241.8,694.3L244.1,694.1L246.4,694.0L248.8,693.9L251.1,693.8L253.4,693.7L255.8,693.6L258.1,693.5L260.4,693.4L262.7,693.4L265.1,693.3L267.4,693.2L269.7,693.1L272.1,693.0L274.4,693.0L276.7,692.9L279.1,692.8L281.4,692.7L283.7,692.6L284.1,692.6ZM204.6,731.6L207.0,731.7L209.3,731.9L211.6,732.2L212.9,732.3L213.9,732.4L216.3,732.7L218.6,732.9L220.9,733.2L223.3,733.5L225.6,733.7L227.9,734.0L229.9,734.2L230.3,734.2L232.6,734.5L234.9,734.7L237.2,735.0L239.6,735.2L241.9,735.4L244.2,735.6L246.6,735.8L248.9,736.0L250.2,736.1L251.2,736.2L253.6,736.3L255.9,736.5L258.2,736.7L260.5,736.9L262.9,737.0L265.2,737.2L267.5,737.4L269.9,737.5L272.2,737.7L274.5,737.9L275.7,738.0L276.9,738.0L279.2,738.2L281.5,738.4L283.8,738.5L286.2,738.7L288.5,738.9L290.8,739.0L293.2,739.2L295.5,739.3L297.8,739.5L300.2,739.7L301.9,739.8L302.5,739.9L304.8,740.0L307.1,740.2L309.5,740.3L311.8,740.5L314.1,740.7L316.5,740.8L316.5,741.8L316.5,742.6L314.1,742.4L311.8,742.3L309.5,742.1L307.2,741.9L305.8,741.8L304.8,741.8L302.5,741.6L300.2,741.4L297.8,741.3L295.5,741.1L293.2,741.0L290.8,740.8L288.5,740.7L286.2,740.5L283.9,740.3L281.5,740.2L279.2,740.0L278.7,740.0L276.9,739.8L274.5,739.7L272.2,739.5L269.9,739.4L267.5,739.2L265.2,739.0L262.9,738.9L260.6,738.7L258.2,738.6L255.9,738.4L253.6,738.2L252.1,738.1L251.2,738.1L248.9,737.9L246.6,737.7L244.2,737.6L241.9,737.4L239.6,737.2L237.3,737.0L234.9,736.8L232.6,736.6L230.3,736.4L227.9,736.3L227.8,736.2L225.6,736.1L223.3,735.9L220.9,735.7L218.6,735.5L216.3,735.3L214.0,735.1L211.6,734.9L209.3,734.8L207.0,734.6L204.6,734.4L203.8,734.4L202.3,734.3L202.3,732.4L202.3,731.4Z" fill="#0020f0"/>
<path d="M248.6,646.3L250.9,646.3L253.3,646.3L255.6,646.2L257.9,646.2L260.3,646.2L262.6,646.2L264.9,646.1L265.7,646.1L267.3,647.1L268.7,647.9L269.6,648.2L271.9,648.8L274.3,649.3L275.7,649.7L276.6,649.8L278.9,650.2L281.3,650.6L283.6,650.9L285.9,651.2L287.0,651.4L288.3,651.5L290.6,651.8L292.9,652.0L295.2,652.2L297.6,652.4L299.9,652.5L302.2,652.6L304.6,652.7L306.9,652.8L309.2,652.8L311.6,652.8L313.9,652.7L316.2,652.7L316.2,652.9L316.2,654.3L313.9,654.3L311.6,654.3L309.2,654.3L306.9,654.3L304.6,654.2L302.2,654.2L299.9,654.1L297.6,653.9L295.2,653.8L292.9,653.6L290.6,653.4L288.5,653.2L288.3,653.1L285.9,652.9L283.6,652.7L281.3,652.5L278.9,652.2L276.6,651.9L274.3,651.6L273.1,651.5L271.9,651.3L269.6,651.0L267.3,650.7L264.9,650.4L262.6,650.1L260.8,649.8L260.3,649.7L257.9,649.3L255.6,648.8L253.3,648.4L251.8,648.1L250.9,647.8L248.6,646.9L246.9,646.3ZM281.3,671.3L283.6,671.2L286.0,671.0L288.3,670.9L290.6,670.7L293.0,670.6L295.3,670.6L297.6,670.5L300.0,670.5L302.3,670.5L304.6,670.6L306.9,670.7L309.3,670.8L311.6,671.0L311.9,671.1L313.9,671.3L316.3,671.6L316.3,672.9L316.3,673.2L314.8,672.9L313.9,672.7L311.6,672.4L309.3,672.2L307.0,672.0L304.6,671.8L302.3,671.7L300.0,671.7L297.6,671.6L295.3,671.7L293.0,671.7L290.6,671.8L288.3,671.9L286.0,672.0L283.7,672.2L281.3,672.4L279.0,672.6L276.7,672.8L274.3,673.1L272.7,673.3L272.0,673.4L269.7,673.8L267.3,674.3L265.0,674.9L263.9,675.2L262.7,676.3L262.0,677.0L262.7,677.4L264.7,678.7L265.0,678.8L267.4,679.3L269.7,679.8L272.0,680.3L272.4,680.4L274.4,680.7L276.7,681.0L279.0,681.3L281.3,681.5L283.7,681.7L286.0,681.9L287.5,682.0L288.3,682.1L290.7,682.2L293.0,682.3L295.3,682.3L297.7,682.4L300.0,682.3L302.3,682.3L304.7,682.2L307.0,682.0L309.3,681.8L309.4,681.8L311.6,681.5L314.0,681.2L316.3,680.8L316.3,681.8L316.3,682.3L314.0,682.6L311.6,682.8L309.3,683.0L307.0,683.2L304.7,683.3L302.3,683.4L300.0,683.4L297.7,683.4L295.3,683.4L293.0,683.3L290.7,683.2L288.3,683.1L286.0,683.0L283.7,682.8L281.4,682.6L279.0,682.4L276.9,682.1L276.7,682.1L274.4,681.8L272.0,681.5L269.7,681.2L267.4,680.9L265.0,680.5L264.6,680.5L262.7,680.1L260.4,679.6L258.0,679.2L256.0,678.8L255.7,678.6L253.4,677.5L252.3,677.1L253.4,675.7L253.7,675.2L255.7,674.8L258.0,674.2L260.4,673.8L262.4,673.4L262.7,673.3L265.0,673.0L267.3,672.7L269.7,672.4L272.0,672.2L274.3,672.0L276.7,671.7L279.0,671.5L281.0,671.4ZM262.7,694.5L265.1,694.5L267.4,694.4L269.7,694.3L272.1,694.2L274.4,694.1L276.7,694.0L279.1,693.9L281.4,693.8L283.7,693.7L286.0,693.7L288.4,693.6L290.7,693.5L293.0,693.4L295.4,693.3L297.7,693.2L300.0,693.1L302.4,693.0L304.7,693.0L307.0,692.9L309.3,692.8L311.7,692.7L314.0,692.6L316.3,692.5L316.3,693.6L314.0,693.7L311.7,693.8L309.3,693.8L307.0,693.9L304.7,694.0L302.4,694.1L300.0,694.2L298.4,694.3L297.7,694.3L295.4,694.4L293.0,694.5L290.7,694.6L288.4,694.7L286.0,694.9L283.7,695.0L281.4,695.1L279.1,695.2L276.7,695.3L274.4,695.4L272.1,695.5L269.7,695.6L267.4,695.7L265.1,695.8L262.8,696.0L260.4,696.1L258.1,696.2L255.8,696.3L255.2,696.4L253.4,696.5L251.1,696.7L248.8,697.0L246.4,697.2L244.1,697.5L241.8,697.8L239.5,698.1L238.1,698.3L237.1,698.4L234.8,698.7L232.5,698.9L230.1,699.2L227.8,699.5L225.5,699.8L223.2,700.1L223.0,700.2L220.8,700.4L218.5,700.6L216.2,700.7L213.8,700.9L211.5,701.0L209.2,701.1L206.9,701.2L204.5,701.3L202.2,701.4L202.2,700.3L202.2,699.5L204.5,699.3L206.8,699.2L209.2,699.0L211.5,698.9L213.8,698.7L216.2,698.5L217.3,698.5L218.5,698.3L220.8,698.0L223.1,697.7L225.5,697.4L227.8,697.1L230.1,696.8L232.1,696.6L232.5,696.5L234.8,696.4L237.1,696.2L239.5,696.0L241.8,695.8L244.1,695.6L246.4,695.5L248.8,695.3L251.1,695.2L253.4,695.0L255.8,694.9L258.1,694.8L260.4,694.7L262.4,694.6ZM204.6,728.9L206.9,729.1L209.3,729.3L211.6,729.5L213.9,729.8L216.3,730.1L217.4,730.2L218.6,730.4L220.9,730.8L223.3,731.1L225.6,731.4L227.9,731.8L230.3,732.1L231.2,732.2L232.6,732.4L234.9,732.7L237.2,733.0L239.6,733.2L241.9,733.5L244.2,733.7L246.6,733.9L248.4,734.1L248.9,734.1L251.2,734.3L253.6,734.5L255.9,734.7L258.2,734.8L260.5,735.0L262.9,735.2L265.2,735.3L267.5,735.5L269.9,735.7L272.2,735.8L273.8,735.9L274.5,736.0L276.9,736.2L279.2,736.3L281.5,736.5L283.8,736.7L286.2,736.8L288.5,737.0L290.8,737.2L293.2,737.3L295.5,737.5L297.8,737.7L299.8,737.8L300.2,737.8L302.5,738.0L304.8,738.1L307.1,738.3L309.5,738.5L311.8,738.6L314.1,738.8L316.5,739.0L316.5,739.7L316.5,740.8L314.1,740.7L311.8,740.5L309.5,740.3L307.1,740.2L304.8,740.0L302.5,739.9L301.9,739.8L300.2,739.7L297.8,739.5L295.5,739.3L293.2,739.2L290.8,739.0L288.5,738.9L286.2,738.7L283.8,738.5L281.5,738.4L279.2,738.2L276.9,738.0L275.7,738.0L274.5,737.9L272.2,737.7L269.9,737.5L267.5,737.4L265.2,737.2L262.9,737.0L260.5,736.9L258.2,736.7L255.9,736.5L253.6,736.3L251.2,736.2L250.2,736.1L248.9,736.0L246.6,735.8L244.2,735.6L241.9,735.4L239.6,735.2L237.2,735.0L234.9,734.7L232.6,734.5L230.3,734.2L229.9,734.2L227.9,734.0L225.6,733.7L223.3,733.5L220.9,733.2L218.6,732.9L216.3,732.7L213.9,732.4L212.9,732.3L211.6,732.2L209.3,731.9L207.0,731.7L204.6,731.6L202.3,731.4L202.3,730.3L202.3,728.8Z" fill="#0070f0"/>
<path d="M267.3,646.1L269.6,646.1L271.9,646.1L274.3,646.0L274.9,646.0L276.6,647.0L278.3,647.8L278.9,648.0L281.3,648.6L283.6,649.2L285.5,649.6L285.9,649.6L288.2,650.0L290.6,650.3L292.9,650.6L295.2,650.8L297.6,651.0L299.9,651.2L299.9,651.2L302.2,651.4L304.6,651.5L306.9,651.5L309.2,651.5L311.6,651.5L313.9,651.4L316.2,651.3L316.2,652.7L313.9,652.7L311.6,652.8L309.2,652.8L306.9,652.8L304.6,652.7L302.2,652.6L299.9,652.5L297.6,652.4L295.2,652.2L292.9,652.0L290.6,651.8L288.3,651.5L287.0,651.4L285.9,651.2L283.6,650.9L281.3,650.6L278.9,650.2L276.6,649.8L275.7,649.7L274.3,649.3L271.9,648.8L269.6,648.2L268.7,647.9L267.3,647.1L265.7,646.1ZM274.3,673.1L276.7,672.8L279.0,672.6L281.3,672.4L283.7,672.2L286.0,672.0L288.3,671.9L290.6,671.8L293.0,671.7L295.3,671.7L297.6,671.6L300.0,671.7L302.3,671.7L304.6,671.8L307.0,672.0L309.3,672.2L311.6,672.4L313.9,672.7L314.8,672.9L316.3,673.2L316.3,674.7L316.3,675.9L314.1,674.7L314.0,674.7L311.6,674.2L309.3,673.8L307.0,673.4L304.6,673.1L303.2,673.0L302.3,672.9L300.0,672.8L297.6,672.8L295.3,672.8L293.0,672.8L290.6,672.9L288.3,672.9L286.0,673.1L284.4,673.2L283.7,673.2L281.3,673.5L279.0,673.8L276.7,674.1L274.3,674.5L272.0,674.9L271.3,675.1L269.7,676.2L268.7,676.9L269.7,677.6L271.4,678.6L272.0,678.8L274.4,679.3L276.7,679.7L279.0,680.1L280.7,680.3L281.3,680.4L283.7,680.6L286.0,680.8L288.3,680.9L290.7,681.0L293.0,681.1L295.3,681.1L297.7,681.1L300.0,681.0L302.3,680.9L304.6,680.8L307.0,680.6L309.3,680.3L311.3,680.1L311.6,680.0L314.0,679.2L316.3,678.4L316.3,680.0L316.3,680.8L314.0,681.2L311.6,681.5L309.4,681.8L309.3,681.8L307.0,682.0L304.7,682.2L302.3,682.3L300.0,682.3L297.7,682.4L295.3,682.3L293.0,682.3L290.7,682.2L288.3,682.1L287.5,682.0L286.0,681.9L283.7,681.7L281.3,681.5L279.0,681.3L276.7,681.0L274.4,680.7L272.4,680.4L272.0,680.3L269.7,679.8L267.4,679.3L265.0,678.8L264.7,678.7L262.7,677.4L262.0,677.0L262.7,676.3L263.9,675.2L265.0,674.9L267.3,674.3L269.7,673.8L272.0,673.4L272.7,673.3ZM300.0,694.2L302.4,694.1L304.7,694.0L307.0,693.9L309.3,693.8L311.7,693.8L314.0,693.7L316.3,693.6L316.3,694.1L316.3,694.9L314.0,695.0L311.7,695.1L309.3,695.2L307.0,695.3L304.7,695.4L302.4,695.5L300.0,695.6L297.7,695.7L295.4,695.8L293.0,695.9L290.7,696.1L289.7,696.1L288.4,696.2L286.1,696.3L283.7,696.4L281.4,696.6L279.1,696.7L276.7,696.8L274.4,697.0L272.1,697.1L269.7,697.2L267.4,697.4L265.1,697.5L262.8,697.6L260.4,697.8L258.1,697.9L255.8,698.1L255.6,698.1L253.4,698.3L251.1,698.5L248.8,698.7L246.5,699.0L244.1,699.2L241.8,699.5L239.5,699.8L237.6,700.0L237.1,700.1L234.8,700.4L232.5,700.6L230.1,700.9L227.8,701.2L225.5,701.4L223.2,701.7L220.8,701.9L220.7,701.9L218.5,702.2L216.2,702.4L213.8,702.5L211.5,702.6L209.2,702.7L206.9,702.8L204.5,702.9L202.2,703.0L202.2,702.1L202.2,701.4L204.5,701.3L206.9,701.2L209.2,701.1L211.5,701.0L213.8,700.9L216.2,700.7L218.5,700.6L220.8,700.4L223.0,700.2L223.2,700.1L225.5,699.8L227.8,699.5L230.1,699.2L232.5,698.9L234.8,698.7L237.1,698.4L238.1,698.3L239.5,698.1L241.8,697.8L244.1,697.5L246.4,697.2L248.8,697.0L251.1,696.7L253.4,696.5L255.2,696.4L255.8,696.3L258.1,696.2L260.4,696.1L262.8,696.0L265.1,695.8L267.4,695.7L269.7,695.6L272.1,695.5L274.4,695.4L276.7,695.3L279.1,695.2L281.4,695.1L283.7,695.0L286.0,694.9L288.4,694.7L290.7,694.6L293.0,694.5L295.4,694.4L297.7,694.3L298.4,694.3ZM204.6,726.7L206.9,726.8L209.3,727.0L211.6,727.2L213.9,727.5L216.3,727.9L218.4,728.2L218.6,728.2L220.9,728.6L223.3,729.0L225.6,729.4L227.9,729.7L230.2,730.1L230.8,730.2L232.6,730.4L234.9,730.8L237.2,731.1L239.6,731.4L241.9,731.7L244.2,731.9L245.9,732.1L246.6,732.1L248.9,732.4L251.2,732.6L253.5,732.7L255.9,732.9L258.2,733.0L260.5,733.2L262.9,733.3L265.2,733.5L267.5,733.6L269.9,733.8L271.9,733.9L272.2,734.0L274.5,734.1L276.8,734.3L279.2,734.4L281.5,734.6L283.8,734.7L286.2,734.9L288.5,735.1L290.8,735.2L293.2,735.4L295.5,735.5L297.8,735.7L299.5,735.8L300.1,735.8L302.5,736.0L304.8,736.1L307.1,736.3L309.5,736.5L311.8,736.6L314.1,736.8L316.5,736.9L316.5,737.7L316.5,739.0L314.1,738.8L311.8,738.6L309.5,738.5L307.1,738.3L304.8,738.1L302.5,738.0L300.2,737.8L299.8,737.8L297.8,737.7L295.5,737.5L293.2,737.3L290.8,737.2L288.5,737.0L286.2,736.8L283.8,736.7L281.5,736.5L279.2,736.3L276.9,736.2L274.5,736.0L273.8,735.9L272.2,735.8L269.9,735.7L267.5,735.5L265.2,735.3L262.9,735.2L260.5,735.0L258.2,734.8L255.9,734.7L253.6,734.5L251.2,734.3L248.9,734.1L248.4,734.1L246.6,733.9L244.2,733.7L241.9,733.5L239.6,733.2L237.2,733.0L234.9,732.7L232.6,732.4L231.2,732.2L230.3,732.1L227.9,731.8L225.6,731.4L223.3,731.1L220.9,730.8L218.6,730.4L217.4,730.2L216.3,730.1L213.9,729.8L211.6,729.5L209.3,729.3L206.9,729.1L204.6,728.9L202.3,728.8L202.3,728.3L202.3,726.5Z" fill="#00b0f0"/>
<path d="M276.6,646.0L278.9,646.0L281.2,646.0L281.9,646.0L283.6,646.8L285.7,647.7L285.9,647.8L288.2,648.3L290.6,648.8L292.9,649.2L294.6,649.5L295.2,649.5L297.6,649.8L299.9,650.0L302.2,650.1L304.6,650.2L306.9,650.3L309.2,650.3L311.6,650.2L313.9,650.1L316.2,649.9L316.2,651.1L316.2,651.3L313.9,651.4L311.6,651.5L309.2,651.5L306.9,651.5L304.6,651.5L302.2,651.4L299.9,651.2L299.9,651.2L297.6,651.0L295.2,650.8L292.9,650.6L290.6,650.3L288.2,650.0L285.9,649.6L285.5,649.6L283.6,649.2L281.3,648.6L278.9,648.0L278.3,647.8L276.6,647.0L274.9,646.0ZM286.0,673.1L288.3,672.9L290.6,672.9L293.0,672.8L295.3,672.8L297.6,672.8L300.0,672.8L302.3,672.9L303.2,673.0L304.6,673.1L307.0,673.4L309.3,673.8L311.6,674.2L314.0,674.7L314.1,674.7L316.3,675.9L316.3,676.5L316.3,678.2L316.3,678.4L314.0,679.2L311.6,680.0L311.3,680.1L309.3,680.3L307.0,680.6L304.6,680.8L302.3,680.9L300.0,681.0L297.7,681.1L295.3,681.1L293.0,681.1L290.7,681.0L288.3,680.9L286.0,680.8L283.7,680.6L281.3,680.4L280.7,680.3L279.0,680.1L276.7,679.7L274.4,679.3L272.0,678.8L271.4,678.6L269.7,677.6L268.7,676.9L269.7,676.2L271.3,675.1L272.0,674.9L274.3,674.5L276.7,674.1L279.0,673.8L281.3,673.5L283.7,673.2L284.4,673.2ZM280.5,675.0L279.0,675.5L276.7,676.4L275.7,676.8L276.7,677.4L279.0,678.5L279.3,678.6L281.3,678.8L283.7,679.1L286.0,679.2L288.3,679.4L290.7,679.4L293.0,679.4L295.3,679.3L297.7,679.2L300.0,678.9L302.3,678.6L304.1,678.4L304.6,677.9L305.8,676.6L304.6,676.2L302.3,675.4L300.3,674.8L300.0,674.8L297.6,674.6L295.3,674.5L293.0,674.4L290.6,674.4L288.3,674.5L286.0,674.5L283.7,674.7L281.3,674.9ZM290.7,696.1L293.0,695.9L295.4,695.8L297.7,695.7L300.0,695.6L302.4,695.5L304.7,695.4L307.0,695.3L309.3,695.2L311.7,695.1L314.0,695.0L316.3,694.9L316.3,695.9L316.3,696.5L314.0,696.6L311.7,696.8L309.4,696.9L307.0,697.0L304.7,697.2L302.4,697.3L300.0,697.4L297.7,697.5L295.4,697.6L293.0,697.8L291.4,697.8L290.7,697.9L288.4,698.0L286.1,698.1L283.7,698.2L281.4,698.3L279.1,698.4L276.7,698.5L274.4,698.6L272.1,698.8L269.8,698.9L267.4,699.0L265.1,699.1L262.8,699.2L260.4,699.3L258.1,699.4L255.8,699.6L253.4,699.8L251.9,699.9L251.1,700.0L248.8,700.2L246.5,700.5L244.1,700.7L241.8,701.0L239.5,701.2L237.1,701.5L234.8,701.8L234.6,701.8L232.5,702.2L230.2,702.5L227.8,702.8L225.5,703.2L223.2,703.5L221.3,703.7L220.8,703.8L218.5,704.2L216.2,704.5L213.9,704.7L211.5,704.9L209.2,704.9L206.9,705.0L204.5,705.1L202.2,705.2L202.2,703.8L202.2,703.0L204.5,702.9L206.9,702.8L209.2,702.7L211.5,702.6L213.8,702.5L216.2,702.4L218.5,702.2L220.7,701.9L220.8,701.9L223.2,701.7L225.5,701.4L227.8,701.2L230.1,700.9L232.5,700.6L234.8,700.4L237.1,700.1L237.6,700.0L239.5,699.8L241.8,699.5L244.1,699.2L246.5,699.0L248.8,698.7L251.1,698.5L253.4,698.3L255.6,698.1L255.8,698.1L258.1,697.9L260.4,697.8L262.8,697.6L265.1,697.5L267.4,697.4L269.7,697.2L272.1,697.1L274.4,697.0L276.7,696.8L279.1,696.7L281.4,696.6L283.7,696.4L286.1,696.3L288.4,696.2L289.7,696.1ZM204.6,723.8L206.9,724.0L209.1,724.2L209.3,724.2L211.6,724.5L213.9,724.9L216.3,725.3L218.6,725.9L219.9,726.2L220.9,726.4L223.2,726.8L225.6,727.3L227.9,727.7L229.9,728.1L230.2,728.2L232.6,728.6L234.9,729.0L237.2,729.3L239.6,729.6L241.9,730.0L242.8,730.1L244.2,730.2L246.6,730.5L248.9,730.7L251.2,730.9L253.5,731.0L255.9,731.2L258.2,731.3L260.5,731.5L262.9,731.6L265.2,731.8L267.5,731.9L268.0,731.9L269.9,732.0L272.2,732.2L274.5,732.3L276.8,732.5L279.2,732.6L281.5,732.8L283.8,732.9L286.2,733.0L288.5,733.2L290.8,733.3L293.2,733.5L295.5,733.6L297.8,733.8L297.9,733.8L300.1,733.9L302.5,734.0L304.8,734.2L307.1,734.3L309.5,734.5L311.8,734.6L314.1,734.8L316.4,734.9L316.5,735.7L316.5,736.9L314.1,736.8L311.8,736.6L309.5,736.5L307.1,736.3L304.8,736.1L302.5,736.0L300.1,735.8L299.5,735.8L297.8,735.7L295.5,735.5L293.2,735.4L290.8,735.2L288.5,735.1L286.2,734.9L283.8,734.7L281.5,734.6L279.2,734.4L276.8,734.3L274.5,734.1L272.2,734.0L271.9,733.9L269.9,733.8L267.5,733.6L265.2,733.5L262.9,733.3L260.5,733.2L258.2,733.0L255.9,732.9L253.5,732.7L251.2,732.6L248.9,732.4L246.6,732.1L245.9,732.1L244.2,731.9L241.9,731.7L239.6,731.4L237.2,731.1L234.9,730.8L232.6,730.4L230.8,730.2L230.2,730.1L227.9,729.7L225.6,729.4L223.3,729.0L220.9,728.6L218.6,728.2L218.4,728.2L216.3,727.9L213.9,727.5L211.6,727.2L209.3,727.0L206.9,726.8L204.6,726.7L202.3,726.5L202.3,726.3L202.3,724.3L202.3,723.6Z" fill="#00f0f0"/>
<path d="M283.6,645.9L285.9,645.9L288.2,645.9L288.7,645.9L290.6,646.6L292.9,647.4L293.6,647.7L295.2,647.9L297.6,648.2L299.9,648.5L302.2,648.7L304.6,648.8L306.9,648.8L309.2,648.8L311.5,648.6L313.9,648.4L316.2,648.0L316.2,649.2L316.2,649.9L313.9,650.1L311.6,650.2L309.2,650.3L306.9,650.3L304.6,650.2L302.2,650.1L299.9,650.0L297.6,649.8L295.2,649.5L294.6,649.5L292.9,649.2L290.6,648.8L288.2,648.3L285.9,647.8L285.7,647.7L283.6,646.8L281.9,646.0ZM281.3,674.9L283.7,674.7L286.0,674.5L288.3,674.5L290.6,674.4L293.0,674.4L295.3,674.5L297.6,674.6L300.0,674.8L300.3,674.8L302.3,675.4L304.6,676.2L305.8,676.6L304.6,677.9L304.1,678.4L302.3,678.6L300.0,678.9L297.7,679.2L295.3,679.3L293.0,679.4L290.7,679.4L288.3,679.4L286.0,679.2L283.7,679.1L281.3,678.8L279.3,678.6L279.0,678.5L276.7,677.4L275.7,676.8L276.7,676.4L279.0,675.5L280.5,675.0ZM293.0,697.8L295.4,697.6L297.7,697.5L300.0,697.4L302.4,697.3L304.7,697.2L307.0,697.0L309.4,696.9L311.7,696.8L314.0,696.6L316.3,696.5L316.3,697.6L316.3,698.2L314.0,698.4L311.7,698.5L309.4,698.7L307.0,698.8L304.7,698.9L302.4,699.1L300.0,699.2L297.7,699.3L295.4,699.4L293.1,699.5L290.7,699.5L288.7,699.6L288.4,699.6L286.1,699.7L283.7,699.8L281.4,699.9L279.1,700.0L276.7,700.1L274.4,700.2L272.1,700.3L269.8,700.4L267.4,700.5L265.1,700.6L262.8,700.7L260.4,700.8L258.1,700.9L255.8,701.0L253.4,701.2L251.1,701.4L248.8,701.6L247.5,701.7L246.5,701.9L244.1,702.2L241.8,702.5L239.5,702.9L237.1,703.2L234.8,703.6L234.7,703.6L232.5,704.1L230.2,704.7L227.8,705.3L227.3,705.4L225.5,706.2L223.2,707.2L223.2,707.2L221.2,709.0L220.9,709.7L220.3,710.7L219.8,712.5L219.3,714.2L218.8,716.1L218.6,718.1L218.9,720.1L220.6,722.1L220.9,722.3L223.2,723.4L224.5,724.1L225.6,724.4L227.9,725.1L230.2,725.9L231.0,726.1L232.6,726.4L234.9,726.9L237.2,727.4L239.6,727.8L240.9,728.1L241.9,728.2L244.2,728.5L246.5,728.8L248.9,729.0L251.2,729.2L253.5,729.3L255.9,729.5L258.2,729.6L260.5,729.8L262.9,729.9L263.2,729.9L265.2,730.0L267.5,730.2L269.8,730.3L272.2,730.4L274.5,730.5L276.8,730.7L279.2,730.8L281.5,730.9L283.8,731.1L286.2,731.2L288.5,731.3L290.8,731.5L293.1,731.6L295.2,731.7L295.5,731.8L297.8,731.9L300.1,732.0L302.5,732.1L304.8,732.3L307.1,732.4L309.5,732.6L311.8,732.7L314.1,732.8L316.4,732.9L316.4,733.6L316.4,734.9L314.1,734.8L311.8,734.6L309.5,734.5L307.1,734.3L304.8,734.2L302.5,734.0L300.1,733.9L297.9,733.8L297.8,733.8L295.5,733.6L293.2,733.5L290.8,733.3L288.5,733.2L286.2,733.0L283.8,732.9L281.5,732.8L279.2,732.6L276.8,732.5L274.5,732.3L272.2,732.2L269.9,732.0L268.0,731.9L267.5,731.9L265.2,731.8L262.9,731.6L260.5,731.5L258.2,731.3L255.9,731.2L253.5,731.0L251.2,730.9L248.9,730.7L246.6,730.5L244.2,730.2L242.8,730.1L241.9,730.0L239.6,729.6L237.2,729.3L234.9,729.0L232.6,728.6L230.2,728.2L229.9,728.1L227.9,727.7L225.6,727.3L223.2,726.8L220.9,726.4L219.9,726.2L218.6,725.9L216.3,725.3L213.9,724.9L211.6,724.5L209.3,724.2L209.1,724.2L206.9,724.0L204.6,723.8L202.3,723.6L202.3,722.3L202.3,720.2L202.3,718.2L202.2,716.2L202.2,714.4L202.2,712.6L202.2,710.9L202.2,709.1L202.2,707.3L202.2,705.6L202.2,705.2L204.5,705.1L206.9,705.0L209.2,704.9L211.5,704.9L213.9,704.7L216.2,704.5L218.5,704.2L220.8,703.8L221.3,703.7L223.2,703.5L225.5,703.2L227.8,702.8L230.2,702.5L232.5,702.2L234.6,701.8L234.8,701.8L237.1,701.5L239.5,701.2L241.8,701.0L244.1,700.7L246.5,700.5L248.8,700.2L251.1,700.0L251.9,699.9L253.4,699.8L255.8,699.6L258.1,699.4L260.4,699.3L262.8,699.2L265.1,699.1L267.4,699.0L269.8,698.9L272.1,698.8L274.4,698.6L276.7,698.5L279.1,698.4L281.4,698.3L283.7,698.2L286.1,698.1L288.4,698.0L290.7,697.9L291.4,697.8Z" fill="#00f0c0"/>
<path d="M290.6,645.9L292.9,645.8L295.2,645.8L297.6,645.8L299.4,645.8L299.9,645.9L302.2,646.1L304.5,646.2L306.9,646.0L308.5,645.7L309.2,645.7L311.5,645.6L313.9,645.6L316.2,645.6L316.2,647.4L316.2,648.0L313.9,648.4L311.5,648.6L309.2,648.8L306.9,648.8L304.6,648.8L302.2,648.7L299.9,648.5L297.6,648.2L295.2,647.9L293.6,647.7L292.9,647.4L290.6,646.6L288.7,645.9ZM290.7,699.5L293.1,699.5L295.4,699.4L297.7,699.3L300.0,699.2L302.4,699.1L304.7,698.9L307.0,698.8L309.4,698.7L311.7,698.5L314.0,698.4L316.3,698.2L316.4,699.4L316.4,699.6L314.0,699.8L311.7,700.0L309.4,700.2L307.0,700.3L304.7,700.5L302.4,700.7L300.0,700.9L297.7,701.0L295.4,701.1L293.1,701.2L290.7,701.3L288.4,701.4L287.5,701.4L286.1,701.5L283.7,701.6L281.4,701.6L279.1,701.7L276.7,701.8L274.4,701.9L272.1,702.0L269.8,702.1L267.4,702.2L265.1,702.2L262.8,702.3L260.4,702.4L258.1,702.5L255.8,702.7L253.5,702.8L251.1,703.1L248.8,703.3L247.6,703.5L246.5,703.7L244.1,704.2L241.8,704.7L239.5,705.3L239.5,705.3L237.2,706.4L235.8,707.1L234.8,708.1L234.1,708.9L233.3,710.6L232.8,712.4L232.5,713.3L232.3,714.1L231.8,716.0L231.4,718.0L231.4,720.0L232.5,722.0L232.5,722.1L234.9,723.5L235.7,724.0L237.2,724.5L239.5,725.2L241.9,725.9L242.4,726.0L244.2,726.3L246.5,726.7L248.9,726.9L251.2,727.2L253.5,727.4L255.9,727.5L258.2,727.6L260.5,727.8L262.4,727.9L262.9,727.9L265.2,728.0L267.5,728.1L269.8,728.3L272.2,728.4L274.5,728.5L276.8,728.6L279.2,728.7L281.5,728.8L283.8,729.0L286.1,729.1L288.5,729.2L290.8,729.4L293.1,729.5L295.5,729.7L295.9,729.7L297.8,729.8L300.1,729.9L302.5,730.1L304.8,730.3L307.1,730.4L309.4,730.6L311.8,730.8L314.1,730.9L316.4,730.9L316.4,731.6L316.4,732.9L314.1,732.8L311.8,732.7L309.5,732.6L307.1,732.4L304.8,732.3L302.5,732.1L300.1,732.0L297.8,731.9L295.5,731.8L295.2,731.7L293.1,731.6L290.8,731.5L288.5,731.3L286.2,731.2L283.8,731.1L281.5,730.9L279.2,730.8L276.8,730.7L274.5,730.5L272.2,730.4L269.8,730.3L267.5,730.2L265.2,730.0L263.2,729.9L262.9,729.9L260.5,729.8L258.2,729.6L255.9,729.5L253.5,729.3L251.2,729.2L248.9,729.0L246.5,728.8L244.2,728.5L241.9,728.2L240.9,728.1L239.6,727.8L237.2,727.4L234.9,726.9L232.6,726.4L231.0,726.1L230.2,725.9L227.9,725.1L225.6,724.4L224.5,724.1L223.2,723.4L220.9,722.3L220.6,722.1L218.9,720.1L218.6,718.1L218.8,716.1L219.3,714.2L219.8,712.5L220.3,710.7L220.9,709.7L221.2,709.0L223.2,707.2L223.2,707.2L225.5,706.2L227.3,705.4L227.8,705.3L230.2,704.7L232.5,704.1L234.7,703.6L234.8,703.6L237.1,703.2L239.5,702.9L241.8,702.5L244.1,702.2L246.5,701.9L247.5,701.7L248.8,701.6L251.1,701.4L253.4,701.2L255.8,701.0L258.1,700.9L260.4,700.8L262.8,700.7L265.1,700.6L267.4,700.5L269.8,700.4L272.1,700.3L274.4,700.2L276.7,700.1L279.1,700.0L281.4,699.9L283.7,699.8L286.1,699.7L288.4,699.6L288.7,699.6Z" fill="#00f080"/>
<path d="M299.9,645.8L302.2,645.7L304.5,645.7L306.9,645.7L308.5,645.7L306.9,646.0L304.5,646.2L302.2,646.1L299.9,645.9L299.4,645.8ZM288.4,701.4L290.7,701.3L293.1,701.2L295.4,701.1L297.7,701.0L300.0,700.9L302.4,700.7L304.7,700.5L307.0,700.3L309.4,700.2L311.7,700.0L314.0,699.8L316.4,699.6L316.4,700.7L314.0,700.9L311.7,701.2L311.6,701.2L309.4,701.4L307.0,701.7L304.7,702.0L302.4,702.2L300.0,702.5L297.7,702.8L295.4,703.1L295.3,703.1L293.1,703.3L290.7,703.6L288.4,703.8L286.1,704.0L283.7,704.2L281.4,704.4L279.1,704.5L276.8,704.6L274.4,704.7L272.1,704.7L269.8,704.8L267.4,704.9L265.1,704.9L262.8,705.0L260.5,705.1L258.1,705.1L257.9,705.2L255.8,705.4L253.5,705.9L251.1,706.5L249.7,707.0L248.8,707.6L247.3,708.8L246.5,710.1L246.3,710.5L245.7,712.3L245.2,714.0L244.7,715.9L244.3,717.9L244.4,719.9L245.9,722.0L246.5,722.3L248.9,723.2L251.2,723.8L251.7,723.9L253.5,724.1L255.9,724.2L258.2,724.3L260.5,724.4L262.8,724.5L265.2,724.6L267.5,724.7L269.8,724.9L272.2,725.0L274.5,725.2L276.8,725.3L279.1,725.5L281.5,725.7L282.4,725.7L283.8,725.8L286.1,726.0L288.5,726.2L290.8,726.4L293.1,726.7L295.5,727.0L297.8,727.2L300.1,727.5L301.4,727.6L302.5,727.8L304.8,728.1L307.1,728.3L309.4,728.6L311.8,728.9L314.1,728.9L316.4,728.7L316.4,729.6L316.4,730.9L314.1,730.9L311.8,730.8L309.4,730.6L307.1,730.4L304.8,730.3L302.5,730.1L300.1,729.9L297.8,729.8L295.9,729.7L295.5,729.7L293.1,729.5L290.8,729.4L288.5,729.2L286.1,729.1L283.8,729.0L281.5,728.8L279.2,728.7L276.8,728.6L274.5,728.5L272.2,728.4L269.8,728.3L267.5,728.1L265.2,728.0L262.9,727.9L262.4,727.9L260.5,727.8L258.2,727.6L255.9,727.5L253.5,727.4L251.2,727.2L248.9,726.9L246.5,726.7L244.2,726.3L242.4,726.0L241.9,725.9L239.5,725.2L237.2,724.5L235.7,724.0L234.9,723.5L232.5,722.1L232.5,722.0L231.4,720.0L231.4,718.0L231.8,716.0L232.3,714.1L232.5,713.3L232.8,712.4L233.3,710.6L234.1,708.9L234.8,708.1L235.8,707.1L237.2,706.4L239.5,705.3L239.5,705.3L241.8,704.7L244.1,704.2L246.5,703.7L247.6,703.5L248.8,703.3L251.1,703.1L253.5,702.8L255.8,702.7L258.1,702.5L260.4,702.4L262.8,702.3L265.1,702.2L267.4,702.2L269.8,702.1L272.1,702.0L274.4,701.9L276.7,701.8L279.1,701.7L281.4,701.6L283.7,701.6L286.1,701.5L287.5,701.4Z" fill="#00e830"/>
<path d="M311.7,701.2L314.0,700.9L316.4,700.7L316.4,701.2L316.4,701.7L314.0,702.0L311.7,702.2L309.4,702.6L307.0,702.9L306.3,703.0L304.7,703.3L302.4,703.6L300.1,704.0L297.7,704.4L295.5,704.9L295.4,704.9L293.1,705.4L290.7,705.8L288.4,706.4L287.1,706.7L286.1,707.0L283.8,707.6L281.4,708.3L280.9,708.5L279.1,709.3L276.9,710.3L276.8,710.4L275.1,712.1L274.6,713.8L274.5,714.6L274.3,715.7L274.5,715.9L275.6,717.7L276.8,718.3L279.1,719.5L279.4,719.7L281.5,720.4L283.8,721.2L285.3,721.7L286.1,721.9L288.5,722.6L290.8,723.2L292.9,723.6L293.1,723.7L295.5,724.3L297.8,724.8L300.1,725.2L302.4,725.6L302.6,725.6L304.8,726.0L307.1,726.4L309.4,726.7L311.8,727.0L314.1,727.1L316.4,726.8L316.4,727.5L316.4,728.7L314.1,728.9L311.8,728.9L309.4,728.6L307.1,728.3L304.8,728.1L302.5,727.8L301.4,727.6L300.1,727.5L297.8,727.2L295.5,727.0L293.1,726.7L290.8,726.4L288.5,726.2L286.1,726.0L283.8,725.8L282.4,725.7L281.5,725.7L279.1,725.5L276.8,725.3L274.5,725.2L272.2,725.0L269.8,724.9L267.5,724.7L265.2,724.6L262.8,724.5L260.5,724.4L258.2,724.3L255.9,724.2L253.5,724.1L251.7,723.9L251.2,723.8L248.9,723.2L246.5,722.3L245.9,722.0L244.4,719.9L244.3,717.9L244.7,715.9L245.2,714.0L245.7,712.3L246.3,710.5L246.5,710.1L247.3,708.8L248.8,707.6L249.7,707.0L251.1,706.5L253.5,705.9L255.8,705.4L257.9,705.2L258.1,705.1L260.5,705.1L262.8,705.0L265.1,704.9L267.4,704.9L269.8,704.8L272.1,704.7L274.4,704.7L276.8,704.6L279.1,704.5L281.4,704.4L283.7,704.2L286.1,704.0L288.4,703.8L290.7,703.6L293.1,703.3L295.3,703.1L295.4,703.1L297.7,702.8L300.0,702.5L302.4,702.2L304.7,702.0L307.0,701.7L309.4,701.4L311.6,701.2Z" fill="#40e000"/>
<path d="M307.0,702.9L309.4,702.6L311.7,702.2L314.0,702.0L316.4,701.7L316.4,702.7L314.1,703.0L314.0,703.0L311.7,703.3L309.4,703.7L307.0,704.0L304.7,704.4L302.8,704.8L302.4,704.9L300.1,705.4L297.7,706.0L295.4,706.6L295.1,706.6L293.1,707.3L290.7,708.1L289.9,708.4L288.4,709.3L286.9,710.2L286.1,711.4L285.7,712.0L285.1,713.8L284.7,715.6L285.6,717.6L286.1,718.0L288.5,719.5L288.6,719.6L290.8,720.5L293.1,721.3L293.9,721.6L295.4,722.1L297.8,722.7L300.1,723.3L301.6,723.6L302.4,723.8L304.8,724.3L307.1,724.7L309.4,725.1L311.8,725.4L314.1,725.4L316.4,725.1L316.4,725.5L316.4,726.8L314.1,727.1L311.8,727.0L309.4,726.7L307.1,726.4L304.8,726.0L302.6,725.6L302.4,725.6L300.1,725.2L297.8,724.8L295.5,724.3L293.1,723.7L292.9,723.6L290.8,723.2L288.5,722.6L286.1,721.9L285.3,721.7L283.8,721.2L281.5,720.4L279.4,719.7L279.1,719.5L276.8,718.3L275.6,717.7L274.5,715.9L274.3,715.7L274.5,714.6L274.6,713.8L275.1,712.1L276.8,710.4L276.9,710.3L279.1,709.3L280.9,708.5L281.4,708.3L283.8,707.6L286.1,707.0L287.1,706.7L288.4,706.4L290.7,705.8L293.1,705.4L295.4,704.9L295.5,704.9L297.7,704.4L300.1,704.0L302.4,703.6L304.7,703.3L306.3,703.0Z" fill="#a0f000"/>
<path d="M316.4,702.7L316.4,702.9L316.4,703.7L314.0,704.0L311.7,704.4L309.4,704.7L309.3,704.8L307.0,705.2L304.7,705.8L302.4,706.3L301.2,706.6L300.1,707.0L297.7,707.8L296.2,708.4L295.4,709.0L293.6,710.2L293.1,711.0L292.5,711.9L291.9,713.7L291.6,715.5L292.3,717.6L293.1,718.2L295.1,719.6L295.4,719.7L297.8,720.6L300.1,721.4L300.6,721.6L302.4,722.0L304.8,722.6L307.1,723.1L309.4,723.5L309.8,723.5L311.8,723.8L314.1,724.0L316.4,723.6L316.4,725.1L314.1,725.4L311.8,725.4L309.4,725.1L307.1,724.7L304.8,724.3L302.4,723.8L301.6,723.6L300.1,723.3L297.8,722.7L295.4,722.1L293.9,721.6L293.1,721.3L290.8,720.5L288.6,719.6L288.5,719.5L286.1,718.0L285.6,717.6L284.7,715.6L285.1,713.8L285.7,712.0L286.1,711.4L286.9,710.2L288.4,709.3L289.9,708.4L290.7,708.1L293.1,707.3L295.1,706.6L295.4,706.6L297.7,706.0L300.1,705.4L302.4,704.9L302.8,704.8L304.7,704.4L307.0,704.0L309.4,703.7L311.7,703.3L314.0,703.0L314.1,703.0Z" fill="#f0ff00"/>
<path d="M309.4,704.7L311.7,704.4L314.0,704.0L316.4,703.7L316.4,704.7L316.4,704.9L314.0,705.2L311.7,705.7L309.4,706.1L307.3,706.5L307.1,706.6L304.7,707.4L302.4,708.2L302.1,708.3L300.1,709.7L299.5,710.1L298.5,711.9L297.9,713.7L297.8,714.4L297.5,715.5L297.8,716.1L298.3,717.5L300.1,718.8L301.2,719.5L302.4,719.9L304.8,720.7L307.1,721.3L307.9,721.5L309.4,721.8L311.8,722.1L314.1,722.3L316.4,722.0L316.4,723.5L316.4,723.6L314.1,724.0L311.8,723.8L309.8,723.5L309.4,723.5L307.1,723.1L304.8,722.6L302.4,722.0L300.6,721.6L300.1,721.4L297.8,720.6L295.4,719.7L295.1,719.6L293.1,718.2L292.3,717.6L291.6,715.5L291.9,713.7L292.5,711.9L293.1,711.0L293.6,710.2L295.4,709.0L296.2,708.4L297.7,707.8L300.1,707.0L301.2,706.6L302.4,706.3L304.7,705.8L307.0,705.2L309.3,704.8Z" fill="#ffc400"/>
<path d="M309.4,706.1L311.7,705.7L314.0,705.2L316.4,704.9L316.4,706.4L316.1,706.5L314.0,706.9L311.7,707.4L309.4,708.1L308.7,708.3L307.1,709.3L305.9,710.1L304.8,711.8L304.7,711.9L304.2,713.6L303.9,715.5L304.8,717.3L304.9,717.5L307.1,718.6L309.1,719.5L309.4,719.6L311.7,720.0L314.1,720.2L316.4,719.9L316.4,721.5L316.4,722.0L314.1,722.3L311.8,722.1L309.4,721.8L307.9,721.5L307.1,721.3L304.8,720.7L302.4,719.9L301.2,719.5L300.1,718.8L298.3,717.5L297.8,716.1L297.5,715.5L297.8,714.4L297.9,713.7L298.5,711.9L299.5,710.1L300.1,709.7L302.1,708.3L302.4,708.2L304.7,707.4L307.1,706.6L307.3,706.5Z" fill="#ff7b00"/>
<path d="M316.4,706.4L316.4,706.5L316.4,708.2L316.4,710.0L316.4,711.8L316.4,713.5L316.4,715.4L316.4,717.4L316.4,719.4L316.4,719.9L314.1,720.2L311.7,720.0L309.4,719.6L309.1,719.5L307.1,718.6L304.9,717.5L304.8,717.3L303.9,715.5L304.2,713.6L304.7,711.9L304.8,711.8L305.9,710.1L307.1,709.3L308.7,708.3L309.4,708.1L311.7,707.4L314.0,706.9L316.1,706.5Z" fill="#ff2a00"/>
</g></g>
<path d="M350.5,603 L305.5,702" stroke="#d8d8d8" stroke-width="1" fill="none"/>
<circle cx="305.2" cy="703.8" r="4.6" fill="#22e31f" stroke="#0a2a0a" stroke-width="1"/>
</svg>
</svg>
<div class="abs" style="left:288px;top:567.8px;width:140px;height:20px;background:#c6c6c6;border:1px solid #9a9a9a;box-sizing:border-box"></div>
<div class="abs" style="left:288px;top:587.8px;width:140px;height:15px;background:#fff;border:1px solid #9a9a9a;border-top:none;box-sizing:border-box"></div>
<div class="abs" style="left:328px;top:587.8px;width:1px;height:14px;background:#9a9a9a"></div>
<div class="t dv" style="left:304px;top:572.6px;font-size:11.2px;font-weight:bold;font-style:italic;color:#111">Point Position 0</div>
<div class="t dv" style="left:295px;top:591px;font-size:9.5px;letter-spacing:0.15px;color:#111">Value</div>
<div class="t dv" style="left:335px;top:591px;font-size:9.5px;letter-spacing:0.1px;color:#111">14.0000</div>
<svg width="1154" height="931" viewBox="0 0 1154 931"><path d="M290.5,578.5 h9.5 l-4.75,5z" fill="#d4d4d4" stroke="#777" stroke-width="0.9"/></svg>
<div class="t" style="left:6.3px;top:892.5px;font-size:14.5px;font-weight:bold;color:#fff;font-family:'Liberation Sans',sans-serif;transform:scaleX(0.82);transform-origin:0 0">0</div>
<div class="abs" style="left:480.0px;top:542.0px;width:92.3px;height:368.5px;background:#fff;border-left:1.5px solid #000;border-top:1.5px solid #000;border-right:1.5px solid #000;border-bottom:1.5px solid #000;box-sizing:border-box"></div>
<svg width="1154" height="931" viewBox="0 0 1154 931">
<rect x="517.3" y="572.20" width="9.4" height="19.51" fill="#ff2a00"/>
<rect x="517.3" y="591.41" width="9.4" height="19.51" fill="#ff7b00"/>
<rect x="517.3" y="610.62" width="9.4" height="19.51" fill="#ffc400"/>
<rect x="517.3" y="629.84" width="9.4" height="19.51" fill="#f0ff00"/>
<rect x="517.3" y="649.05" width="9.4" height="19.51" fill="#a0f000"/>
<rect x="517.3" y="668.26" width="9.4" height="19.51" fill="#40e000"/>
<rect x="517.3" y="687.48" width="9.4" height="19.51" fill="#00e830"/>
<rect x="517.3" y="706.69" width="9.4" height="19.51" fill="#00f080"/>
<rect x="517.3" y="725.90" width="9.4" height="19.51" fill="#00f0c0"/>
<rect x="517.3" y="745.11" width="9.4" height="19.51" fill="#00f0f0"/>
<rect x="517.3" y="764.33" width="9.4" height="19.51" fill="#00b0f0"/>
<rect x="517.3" y="783.54" width="9.4" height="19.51" fill="#0070f0"/>
<rect x="517.3" y="802.75" width="9.4" height="19.51" fill="#0020f0"/>
<rect x="517.3" y="821.96" width="9.4" height="19.51" fill="#3000f0"/>
<rect x="517.3" y="841.17" width="9.4" height="19.51" fill="#8000f0"/>
<rect x="517.3" y="860.39" width="9.4" height="19.51" fill="#e000f8"/>
<path d="M517.3,591.41H526.7M517.3,610.62H526.7M517.3,629.84H526.7M517.3,649.05H526.7M517.3,668.26H526.7M517.3,687.48H526.7M517.3,706.69H526.7M517.3,725.90H526.7M517.3,745.11H526.7M517.3,764.33H526.7M517.3,783.54H526.7M517.3,802.75H526.7M517.3,821.96H526.7M517.3,841.17H526.7M517.3,860.39H526.7" stroke="#000" stroke-opacity="0.22" stroke-width="1" fill="none"/>
<rect x="517.3" y="572.20" width="9.4" height="307.40" fill="none" stroke="#000" stroke-opacity="0.25" stroke-width="1"/>
<path d="M486.5,572.20H512.5M486.5,591.41H512.5M486.5,610.62H512.5M486.5,629.84H512.5M486.5,649.05H512.5M486.5,668.26H512.5M486.5,687.48H512.5M486.5,706.69H512.5M486.5,725.90H512.5M486.5,745.11H512.5M486.5,764.33H512.5M486.5,783.54H512.5M486.5,802.75H512.5M486.5,821.96H512.5M486.5,841.17H512.5M486.5,860.39H512.5M486.5,879.60H512.5M486.5,572.2V879.6M512.5,572.2V879.6" stroke="#4a4a4a" stroke-width="1" fill="none"/>
<polyline points="511.5,572.2 511.5,673.6 510.2,675.2 510.2,683.5 511.7,685.0 511.7,707.5 510.4,709.0 510.4,725.9 511.7,727.4 511.5,756.6 512.0,775.1 511.2,793.5 511.7,812.0 510.9,824.3 511.5,836.6 510.4,845.8 510.9,853.5 508.9,859.6 506.8,864.2 502.1,865.8 497.4,867.9 496.4,869.8 489.1,871.0 486.5,872.8 493.8,879.6" fill="none" stroke="#000" stroke-width="1.1"/>
</svg>
<div class="t dv" style="left:528.3px;top:552.0px;width:40px;margin-left:-20px;text-align:center;font-size:10.5px;font-style:italic;color:#111">[%]</div>
<div class="t dv" style="left:534.5px;top:567.4px;font-size:9.2px;font-style:italic;color:#111">15.148</div>
<div class="t dv" style="left:534.5px;top:586.7px;font-size:9.2px;font-style:italic;color:#111">14.203</div>
<div class="t dv" style="left:534.5px;top:605.9px;font-size:9.2px;font-style:italic;color:#111">13.258</div>
<div class="t dv" style="left:534.5px;top:625.1px;font-size:9.2px;font-style:italic;color:#111">12.313</div>
<div class="t dv" style="left:534.5px;top:644.3px;font-size:9.2px;font-style:italic;color:#111">11.367</div>
<div class="t dv" style="left:534.5px;top:663.5px;font-size:9.2px;font-style:italic;color:#111">10.422</div>
<div class="t dv" style="left:534.5px;top:682.7px;font-size:9.2px;font-style:italic;color:#111">9.477</div>
<div class="t dv" style="left:534.5px;top:701.9px;font-size:9.2px;font-style:italic;color:#111">8.531</div>
<div class="t dv" style="left:534.5px;top:721.1px;font-size:9.2px;font-style:italic;color:#111">7.586</div>
<div class="t dv" style="left:534.5px;top:740.4px;font-size:9.2px;font-style:italic;color:#111">6.641</div>
<div class="t dv" style="left:534.5px;top:759.6px;font-size:9.2px;font-style:italic;color:#111">5.696</div>
<div class="t dv" style="left:534.5px;top:778.8px;font-size:9.2px;font-style:italic;color:#111">4.750</div>
<div class="t dv" style="left:534.5px;top:798.0px;font-size:9.2px;font-style:italic;color:#111">3.805</div>
<div class="t dv" style="left:534.5px;top:817.2px;font-size:9.2px;font-style:italic;color:#111">2.860</div>
<div class="t dv" style="left:534.5px;top:836.4px;font-size:9.2px;font-style:italic;color:#111">1.915</div>
<div class="t dv" style="left:534.5px;top:855.6px;font-size:9.2px;font-style:italic;color:#111">0.969</div>
<div class="t dv" style="left:534.5px;top:874.8px;font-size:9.2px;font-style:italic;color:#111">0.024</div>
<div class="abs" style="left:576px;top:542px;width:569px;height:368px;background:#fff;border-left:1px solid #d0d2da;border-top:1px solid #dcdde4;box-sizing:border-box"></div>
<svg width="1154" height="931" viewBox="0 0 1154 931">
<path d="M702.5,585.4V845.3M760.5,585.4V845.3M819.5,585.4V845.3M877.5,585.4V845.3M936.5,585.4V845.3M994.5,585.4V845.3M643.3,816.5H994.0M643.3,787.5H994.0M643.3,758.5H994.0M643.3,729.5H994.0M643.3,700.5H994.0M643.3,672.5H994.0M643.3,643.5H994.0M643.3,614.5H994.0M643.3,585.5H994.0" stroke="#d8d8d8" stroke-width="1" fill="none"/>
<path d="M643.3,585.4V845.5H994.0" stroke="#000" stroke-width="1.3" fill="none"/>
<path d="M643.3,845.5h6M643.3,816.5h6M643.3,787.5h6M643.3,758.5h6M643.3,729.5h6M643.3,700.5h6M643.3,672.5h6M643.3,643.5h6M643.3,614.5h6M643.3,585.5h6M643.5,845.3v-6M702.5,845.3v-6M760.5,845.3v-6M819.5,845.3v-6M877.5,845.3v-6M936.5,845.3v-6M994.5,845.3v-6" stroke="#000" stroke-width="1" fill="none"/>
<polyline points="643.3,845.1 644.5,844.9 645.6,845.0 646.8,844.9 648.0,844.8 649.1,845.3 650.3,845.3 651.5,844.7 652.7,845.1 653.8,845.1 655.0,844.6 656.2,845.0 657.3,844.7 658.5,845.0 659.7,844.8 660.8,845.2 662.0,844.8 663.2,844.7 664.3,844.9 665.5,844.8 666.7,844.8 667.8,845.3 669.0,844.8 670.2,844.9 671.4,845.1 672.5,845.3 673.7,844.7 674.9,845.0 676.0,844.8 677.2,844.7 678.4,844.8 679.5,844.6 680.7,845.0 681.9,844.7 683.0,845.0 684.2,844.6 685.4,844.7 686.6,845.2 687.7,845.2 688.9,845.1 690.1,844.6 691.2,845.0 692.4,844.8 693.6,845.1 694.7,844.9 695.9,845.0 697.1,845.0 698.2,844.9 699.4,844.9 700.6,844.6 701.8,844.8 702.9,844.6 704.1,844.7 705.3,844.6 706.4,844.8 707.6,845.2 708.8,844.7 709.9,844.6 711.1,844.6 712.3,844.9 713.4,844.8 714.6,845.1 715.8,844.7 716.9,844.9 718.1,845.1 719.3,845.3 720.5,844.7 721.6,844.6 722.8,845.2 724.0,844.7 725.1,845.0 726.3,845.2 727.5,845.1 728.6,844.7 729.8,844.7 731.0,845.3 732.1,844.9 733.3,845.3 734.5,844.8 735.7,845.1 736.8,844.7 738.0,844.6 739.2,844.9 740.3,844.6 741.5,845.1 742.7,845.2 743.8,844.9 745.0,845.3 746.2,845.2 747.3,845.0 748.5,844.9 749.7,845.2 750.8,845.3 752.0,844.7 753.2,845.1 754.4,844.6 755.5,844.7 756.7,845.0 757.9,845.0 759.0,844.9 760.2,844.8 761.4,844.9 762.5,844.9 763.7,844.9 764.9,844.6 766.0,844.9 767.2,845.0 768.4,844.8 769.6,845.1 770.7,845.1 771.9,844.6 773.1,844.9 774.2,844.9 775.4,845.3 776.6,845.0 777.7,844.9 778.9,845.3 780.1,844.9 781.2,844.8 782.4,845.3 783.6,844.8 784.7,845.0 785.9,844.8 787.1,845.0 788.3,844.8 789.4,844.8 790.6,845.3 791.8,845.3 792.9,844.8 794.1,844.6 795.3,845.1 796.4,845.0 797.6,844.9 798.8,845.1 799.9,845.0 801.1,845.1 802.3,845.0 803.5,844.9 804.6,845.1 805.8,845.0 807.0,844.7 808.1,845.3 809.3,844.9 810.5,844.8 811.6,845.1 812.8,845.1 814.0,844.7 815.1,845.1 816.3,845.2 817.5,845.0 818.6,844.8 819.8,845.2 821.0,845.1 822.2,845.1 823.3,844.7 824.5,845.0 825.7,844.7 826.8,845.2 828.0,845.1 829.2,844.8 830.3,844.7 831.5,845.0 832.7,845.1 833.8,845.2 835.0,844.9 836.2,845.2 837.4,844.7 838.5,844.7 839.7,845.2 840.9,844.7 842.0,844.7 843.2,844.8 844.4,844.3 845.5,844.1 846.7,843.7 847.9,843.1 849.0,843.0 850.2,842.1 851.4,841.9 852.6,841.2 853.7,840.9 854.9,840.5 856.1,840.4 857.2,840.2 858.4,839.9 859.6,839.7 860.7,839.5 861.9,839.4 863.1,839.4 864.2,839.7 865.4,839.7 866.6,839.5 867.7,839.7 868.9,839.8 870.1,840.1 871.3,840.2 872.4,840.4 873.6,840.5 874.8,840.8 875.9,840.6 877.1,840.7 878.3,840.9 879.4,841.2 880.6,841.2 881.8,841.2 882.9,841.1 884.1,841.4 885.3,841.4 886.5,841.1 887.6,841.5 888.8,841.4 890.0,841.4 891.1,841.3 892.3,841.5 893.5,841.6 894.6,841.3 895.8,841.6 897.0,841.5 898.1,841.4 899.3,841.4 900.5,841.6 901.6,841.6 902.8,841.6 904.0,841.6 905.2,841.6 906.3,841.8 907.5,841.7 908.7,841.5 909.8,841.5 911.0,841.8 912.2,841.9 913.3,841.7 914.5,841.6 915.7,841.7 916.8,842.0 918.0,842.0 920.3,839.5 921.2,836.0 922.1,831.8 923.7,823.5 924.2,816.2 924.2,811.0 925.5,800.6 925.5,793.6 926.5,783.7 926.8,778.5 927.6,771.5 928.3,766.3 928.3,758.5 929.4,753.3 929.9,747.3 930.7,741.6 931.2,736.1 931.7,729.6 932.3,724.2 932.6,718.0 933.3,712.8 933.8,707.0 934.8,698.5 935.4,692.7 936.1,687.5 936.7,682.9 937.4,677.1 938.0,671.2 938.7,665.4 939.3,660.2 940.3,655.0 941.1,649.1 941.6,645.2 942.4,642.0 942.9,638.7 943.4,636.1 944.2,632.2 945.0,628.3 945.8,624.4 946.3,620.0 946.6,614.5" fill="none" stroke="#2db52d" stroke-width="1"/>
<g fill="#7fa2f2" stroke="#3457c8" stroke-width="1"><circle cx="643.3" cy="845.1" r="3.0"/><circle cx="644.5" cy="844.9" r="3.0"/><circle cx="645.6" cy="845.0" r="3.0"/><circle cx="646.8" cy="844.9" r="3.0"/><circle cx="648.0" cy="844.8" r="3.0"/><circle cx="649.1" cy="845.3" r="3.0"/><circle cx="650.3" cy="845.3" r="3.0"/><circle cx="651.5" cy="844.7" r="3.0"/><circle cx="652.7" cy="845.1" r="3.0"/><circle cx="653.8" cy="845.1" r="3.0"/><circle cx="655.0" cy="844.6" r="3.0"/><circle cx="656.2" cy="845.0" r="3.0"/><circle cx="657.3" cy="844.7" r="3.0"/><circle cx="658.5" cy="845.0" r="3.0"/><circle cx="659.7" cy="844.8" r="3.0"/><circle cx="660.8" cy="845.2" r="3.0"/><circle cx="662.0" cy="844.8" r="3.0"/><circle cx="663.2" cy="844.7" r="3.0"/><circle cx="664.3" cy="844.9" r="3.0"/><circle cx="665.5" cy="844.8" r="3.0"/><circle cx="666.7" cy="844.8" r="3.0"/><circle cx="667.8" cy="845.3" r="3.0"/><circle cx="669.0" cy="844.8" r="3.0"/><circle cx="670.2" cy="844.9" r="3.0"/><circle cx="671.4" cy="845.1" r="3.0"/><circle cx="672.5" cy="845.3" r="3.0"/><circle cx="673.7" cy="844.7" r="3.0"/><circle cx="674.9" cy="845.0" r="3.0"/><circle cx="676.0" cy="844.8" r="3.0"/><circle cx="677.2" cy="844.7" r="3.0"/><circle cx="678.4" cy="844.8" r="3.0"/><circle cx="679.5" cy="844.6" r="3.0"/><circle cx="680.7" cy="845.0" r="3.0"/><circle cx="681.9" cy="844.7" r="3.0"/><circle cx="683.0" cy="845.0" r="3.0"/><circle cx="684.2" cy="844.6" r="3.0"/><circle cx="685.4" cy="844.7" r="3.0"/><circle cx="686.6" cy="845.2" r="3.0"/><circle cx="687.7" cy="845.2" r="3.0"/><circle cx="688.9" cy="845.1" r="3.0"/><circle cx="690.1" cy="844.6" r="3.0"/><circle cx="691.2" cy="845.0" r="3.0"/><circle cx="692.4" cy="844.8" r="3.0"/><circle cx="693.6" cy="845.1" r="3.0"/><circle cx="694.7" cy="844.9" r="3.0"/><circle cx="695.9" cy="845.0" r="3.0"/><circle cx="697.1" cy="845.0" r="3.0"/><circle cx="698.2" cy="844.9" r="3.0"/><circle cx="699.4" cy="844.9" r="3.0"/><circle cx="700.6" cy="844.6" r="3.0"/><circle cx="701.8" cy="844.8" r="3.0"/><circle cx="702.9" cy="844.6" r="3.0"/><circle cx="704.1" cy="844.7" r="3.0"/><circle cx="705.3" cy="844.6" r="3.0"/><circle cx="706.4" cy="844.8" r="3.0"/><circle cx="707.6" cy="845.2" r="3.0"/><circle cx="708.8" cy="844.7" r="3.0"/><circle cx="709.9" cy="844.6" r="3.0"/><circle cx="711.1" cy="844.6" r="3.0"/><circle cx="712.3" cy="844.9" r="3.0"/><circle cx="713.4" cy="844.8" r="3.0"/><circle cx="714.6" cy="845.1" r="3.0"/><circle cx="715.8" cy="844.7" r="3.0"/><circle cx="716.9" cy="844.9" r="3.0"/><circle cx="718.1" cy="845.1" r="3.0"/><circle cx="719.3" cy="845.3" r="3.0"/><circle cx="720.5" cy="844.7" r="3.0"/><circle cx="721.6" cy="844.6" r="3.0"/><circle cx="722.8" cy="845.2" r="3.0"/><circle cx="724.0" cy="844.7" r="3.0"/><circle cx="725.1" cy="845.0" r="3.0"/><circle cx="726.3" cy="845.2" r="3.0"/><circle cx="727.5" cy="845.1" r="3.0"/><circle cx="728.6" cy="844.7" r="3.0"/><circle cx="729.8" cy="844.7" r="3.0"/><circle cx="731.0" cy="845.3" r="3.0"/><circle cx="732.1" cy="844.9" r="3.0"/><circle cx="733.3" cy="845.3" r="3.0"/><circle cx="734.5" cy="844.8" r="3.0"/><circle cx="735.7" cy="845.1" r="3.0"/><circle cx="736.8" cy="844.7" r="3.0"/><circle cx="738.0" cy="844.6" r="3.0"/><circle cx="739.2" cy="844.9" r="3.0"/><circle cx="740.3" cy="844.6" r="3.0"/><circle cx="741.5" cy="845.1" r="3.0"/><circle cx="742.7" cy="845.2" r="3.0"/><circle cx="743.8" cy="844.9" r="3.0"/><circle cx="745.0" cy="845.3" r="3.0"/><circle cx="746.2" cy="845.2" r="3.0"/><circle cx="747.3" cy="845.0" r="3.0"/><circle cx="748.5" cy="844.9" r="3.0"/><circle cx="749.7" cy="845.2" r="3.0"/><circle cx="750.8" cy="845.3" r="3.0"/><circle cx="752.0" cy="844.7" r="3.0"/><circle cx="753.2" cy="845.1" r="3.0"/><circle cx="754.4" cy="844.6" r="3.0"/><circle cx="755.5" cy="844.7" r="3.0"/><circle cx="756.7" cy="845.0" r="3.0"/><circle cx="757.9" cy="845.0" r="3.0"/><circle cx="759.0" cy="844.9" r="3.0"/><circle cx="760.2" cy="844.8" r="3.0"/><circle cx="761.4" cy="844.9" r="3.0"/><circle cx="762.5" cy="844.9" r="3.0"/><circle cx="763.7" cy="844.9" r="3.0"/><circle cx="764.9" cy="844.6" r="3.0"/><circle cx="766.0" cy="844.9" r="3.0"/><circle cx="767.2" cy="845.0" r="3.0"/><circle cx="768.4" cy="844.8" r="3.0"/><circle cx="769.6" cy="845.1" r="3.0"/><circle cx="770.7" cy="845.1" r="3.0"/><circle cx="771.9" cy="844.6" r="3.0"/><circle cx="773.1" cy="844.9" r="3.0"/><circle cx="774.2" cy="844.9" r="3.0"/><circle cx="775.4" cy="845.3" r="3.0"/><circle cx="776.6" cy="845.0" r="3.0"/><circle cx="777.7" cy="844.9" r="3.0"/><circle cx="778.9" cy="845.3" r="3.0"/><circle cx="780.1" cy="844.9" r="3.0"/><circle cx="781.2" cy="844.8" r="3.0"/><circle cx="782.4" cy="845.3" r="3.0"/><circle cx="783.6" cy="844.8" r="3.0"/><circle cx="784.7" cy="845.0" r="3.0"/><circle cx="785.9" cy="844.8" r="3.0"/><circle cx="787.1" cy="845.0" r="3.0"/><circle cx="788.3" cy="844.8" r="3.0"/><circle cx="789.4" cy="844.8" r="3.0"/><circle cx="790.6" cy="845.3" r="3.0"/><circle cx="791.8" cy="845.3" r="3.0"/><circle cx="792.9" cy="844.8" r="3.0"/><circle cx="794.1" cy="844.6" r="3.0"/><circle cx="795.3" cy="845.1" r="3.0"/><circle cx="796.4" cy="845.0" r="3.0"/><circle cx="797.6" cy="844.9" r="3.0"/><circle cx="798.8" cy="845.1" r="3.0"/><circle cx="799.9" cy="845.0" r="3.0"/><circle cx="801.1" cy="845.1" r="3.0"/><circle cx="802.3" cy="845.0" r="3.0"/><circle cx="803.5" cy="844.9" r="3.0"/><circle cx="804.6" cy="845.1" r="3.0"/><circle cx="805.8" cy="845.0" r="3.0"/><circle cx="807.0" cy="844.7" r="3.0"/><circle cx="808.1" cy="845.3" r="3.0"/><circle cx="809.3" cy="844.9" r="3.0"/><circle cx="810.5" cy="844.8" r="3.0"/><circle cx="811.6" cy="845.1" r="3.0"/><circle cx="812.8" cy="845.1" r="3.0"/><circle cx="814.0" cy="844.7" r="3.0"/><circle cx="815.1" cy="845.1" r="3.0"/><circle cx="816.3" cy="845.2" r="3.0"/><circle cx="817.5" cy="845.0" r="3.0"/><circle cx="818.6" cy="844.8" r="3.0"/><circle cx="819.8" cy="845.2" r="3.0"/><circle cx="821.0" cy="845.1" r="3.0"/><circle cx="822.2" cy="845.1" r="3.0"/><circle cx="823.3" cy="844.7" r="3.0"/><circle cx="824.5" cy="845.0" r="3.0"/><circle cx="825.7" cy="844.7" r="3.0"/><circle cx="826.8" cy="845.2" r="3.0"/><circle cx="828.0" cy="845.1" r="3.0"/><circle cx="829.2" cy="844.8" r="3.0"/><circle cx="830.3" cy="844.7" r="3.0"/><circle cx="831.5" cy="845.0" r="3.0"/><circle cx="832.7" cy="845.1" r="3.0"/><circle cx="833.8" cy="845.2" r="3.0"/><circle cx="835.0" cy="844.9" r="3.0"/><circle cx="836.2" cy="845.2" r="3.0"/><circle cx="837.4" cy="844.7" r="3.0"/><circle cx="838.5" cy="844.7" r="3.0"/><circle cx="839.7" cy="845.2" r="3.0"/><circle cx="840.9" cy="844.7" r="3.0"/><circle cx="842.0" cy="844.7" r="3.0"/><circle cx="843.2" cy="844.8" r="3.0"/><circle cx="844.4" cy="844.3" r="3.0"/><circle cx="845.5" cy="844.1" r="3.0"/><circle cx="846.7" cy="843.7" r="3.0"/><circle cx="847.9" cy="843.1" r="3.0"/><circle cx="849.0" cy="843.0" r="3.0"/><circle cx="850.2" cy="842.1" r="3.0"/><circle cx="851.4" cy="841.9" r="3.0"/><circle cx="852.6" cy="841.2" r="3.0"/><circle cx="853.7" cy="840.9" r="3.0"/><circle cx="854.9" cy="840.5" r="3.0"/><circle cx="856.1" cy="840.4" r="3.0"/><circle cx="857.2" cy="840.2" r="3.0"/><circle cx="858.4" cy="839.9" r="3.0"/><circle cx="859.6" cy="839.7" r="3.0"/><circle cx="860.7" cy="839.5" r="3.0"/><circle cx="861.9" cy="839.4" r="3.0"/><circle cx="863.1" cy="839.4" r="3.0"/><circle cx="864.2" cy="839.7" r="3.0"/><circle cx="865.4" cy="839.7" r="3.0"/><circle cx="866.6" cy="839.5" r="3.0"/><circle cx="867.7" cy="839.7" r="3.0"/><circle cx="868.9" cy="839.8" r="3.0"/><circle cx="870.1" cy="840.1" r="3.0"/><circle cx="871.3" cy="840.2" r="3.0"/><circle cx="872.4" cy="840.4" r="3.0"/><circle cx="873.6" cy="840.5" r="3.0"/><circle cx="874.8" cy="840.8" r="3.0"/><circle cx="875.9" cy="840.6" r="3.0"/><circle cx="877.1" cy="840.7" r="3.0"/><circle cx="878.3" cy="840.9" r="3.0"/><circle cx="879.4" cy="841.2" r="3.0"/><circle cx="880.6" cy="841.2" r="3.0"/><circle cx="881.8" cy="841.2" r="3.0"/><circle cx="882.9" cy="841.1" r="3.0"/><circle cx="884.1" cy="841.4" r="3.0"/><circle cx="885.3" cy="841.4" r="3.0"/><circle cx="886.5" cy="841.1" r="3.0"/><circle cx="887.6" cy="841.5" r="3.0"/><circle cx="888.8" cy="841.4" r="3.0"/><circle cx="890.0" cy="841.4" r="3.0"/><circle cx="891.1" cy="841.3" r="3.0"/><circle cx="892.3" cy="841.5" r="3.0"/><circle cx="893.5" cy="841.6" r="3.0"/><circle cx="894.6" cy="841.3" r="3.0"/><circle cx="895.8" cy="841.6" r="3.0"/><circle cx="897.0" cy="841.5" r="3.0"/><circle cx="898.1" cy="841.4" r="3.0"/><circle cx="899.3" cy="841.4" r="3.0"/><circle cx="900.5" cy="841.6" r="3.0"/><circle cx="901.6" cy="841.6" r="3.0"/><circle cx="902.8" cy="841.6" r="3.0"/><circle cx="904.0" cy="841.6" r="3.0"/><circle cx="905.2" cy="841.6" r="3.0"/><circle cx="906.3" cy="841.8" r="3.0"/><circle cx="907.5" cy="841.7" r="3.0"/><circle cx="908.7" cy="841.5" r="3.0"/><circle cx="909.8" cy="841.5" r="3.0"/><circle cx="911.0" cy="841.8" r="3.0"/><circle cx="912.2" cy="841.9" r="3.0"/><circle cx="913.3" cy="841.7" r="3.0"/><circle cx="914.5" cy="841.6" r="3.0"/><circle cx="915.7" cy="841.7" r="3.0"/><circle cx="916.8" cy="842.0" r="3.0"/><circle cx="918.0" cy="842.0" r="3.0"/><circle cx="920.3" cy="839.5" r="3.0"/><circle cx="921.2" cy="836.0" r="3.0"/><circle cx="922.1" cy="831.8" r="3.0"/><circle cx="923.7" cy="823.5" r="3.0"/><circle cx="924.2" cy="816.2" r="3.0"/><circle cx="924.2" cy="811.0" r="3.0"/><circle cx="925.5" cy="800.6" r="3.0"/><circle cx="925.5" cy="793.6" r="3.0"/><circle cx="926.5" cy="783.7" r="3.0"/><circle cx="926.8" cy="778.5" r="3.0"/><circle cx="927.6" cy="771.5" r="3.0"/><circle cx="928.3" cy="766.3" r="3.0"/><circle cx="928.3" cy="758.5" r="3.0"/><circle cx="929.4" cy="753.3" r="3.0"/><circle cx="929.9" cy="747.3" r="3.0"/><circle cx="930.7" cy="741.6" r="3.0"/><circle cx="931.2" cy="736.1" r="3.0"/><circle cx="931.7" cy="729.6" r="3.0"/><circle cx="932.3" cy="724.2" r="3.0"/><circle cx="932.6" cy="718.0" r="3.0"/><circle cx="933.3" cy="712.8" r="3.0"/><circle cx="933.8" cy="707.0" r="3.0"/><circle cx="934.8" cy="698.5" r="3.0"/><circle cx="935.4" cy="692.7" r="3.0"/><circle cx="936.1" cy="687.5" r="3.0"/><circle cx="936.7" cy="682.9" r="3.0"/><circle cx="937.4" cy="677.1" r="3.0"/><circle cx="938.0" cy="671.2" r="3.0"/><circle cx="938.7" cy="665.4" r="3.0"/><circle cx="939.3" cy="660.2" r="3.0"/><circle cx="940.3" cy="655.0" r="3.0"/><circle cx="941.1" cy="649.1" r="3.0"/><circle cx="941.6" cy="645.2" r="3.0"/><circle cx="942.4" cy="642.0" r="3.0"/><circle cx="942.9" cy="638.7" r="3.0"/><circle cx="943.4" cy="636.1" r="3.0"/><circle cx="944.2" cy="632.2" r="3.0"/><circle cx="945.0" cy="628.3" r="3.0"/><circle cx="945.8" cy="624.4" r="3.0"/><circle cx="946.3" cy="620.0" r="3.0"/><circle cx="946.6" cy="614.5" r="3.0"/></g>
<path d="M942.4,585.9V845.3" stroke="#ee1c25" stroke-width="2.2" stroke-dasharray="4.2,7.5" fill="none"/>
<rect x="1007.5" y="580.5" width="129" height="34" fill="#fff" stroke="#dcdcdc" stroke-width="1"/>
<path d="M1017,597.3H1045" stroke="#2db52d" stroke-width="1.2"/><circle cx="1031" cy="597.3" r="3.0" fill="#7fa2f2" stroke="#3457c8" stroke-width="1"/>
</svg>
<div class="t" style="left:761px;top:556.3px;width:200px;text-align:center;font-size:12.5px;letter-spacing:-0.42px;font-family:'Liberation Sans',sans-serif;color:#111;">POINT POSITION</div>
<div class="t" style="left:600.6px;top:838.7px;width:31px;text-align:right;font-size:13px;font-family:'Liberation Sans',sans-serif;color:#111;">0</div>
<div class="t" style="left:600.6px;top:809.8px;width:31px;text-align:right;font-size:13px;font-family:'Liberation Sans',sans-serif;color:#111;">2</div>
<div class="t" style="left:600.6px;top:780.9px;width:31px;text-align:right;font-size:13px;font-family:'Liberation Sans',sans-serif;color:#111;">4</div>
<div class="t" style="left:600.6px;top:752.1px;width:31px;text-align:right;font-size:13px;font-family:'Liberation Sans',sans-serif;color:#111;">6</div>
<div class="t" style="left:600.6px;top:723.2px;width:31px;text-align:right;font-size:13px;font-family:'Liberation Sans',sans-serif;color:#111;">8</div>
<div class="t" style="left:602.0px;top:694.3px;width:31px;text-align:right;font-size:13px;font-family:'Liberation Sans',sans-serif;color:#111;">10</div>
<div class="t" style="left:602.0px;top:665.4px;width:31px;text-align:right;font-size:13px;font-family:'Liberation Sans',sans-serif;color:#111;">12</div>
<div class="t" style="left:602.0px;top:636.6px;width:31px;text-align:right;font-size:13px;font-family:'Liberation Sans',sans-serif;color:#111;">14</div>
<div class="t" style="left:602.0px;top:607.7px;width:31px;text-align:right;font-size:13px;font-family:'Liberation Sans',sans-serif;color:#111;">16</div>
<div class="t" style="left:602.0px;top:578.8px;width:31px;text-align:right;font-size:13px;font-family:'Liberation Sans',sans-serif;color:#111;">18</div>
<div class="t" style="left:613.3px;top:857.5px;width:60px;text-align:center;font-size:13px;font-family:'Liberation Sans',sans-serif;color:#111;">0</div>
<div class="t" style="left:671.8px;top:857.5px;width:60px;text-align:center;font-size:13px;font-family:'Liberation Sans',sans-serif;color:#111;">100</div>
<div class="t" style="left:730.2px;top:857.5px;width:60px;text-align:center;font-size:13px;font-family:'Liberation Sans',sans-serif;color:#111;">200</div>
<div class="t" style="left:788.6px;top:857.5px;width:60px;text-align:center;font-size:13px;font-family:'Liberation Sans',sans-serif;color:#111;">300</div>
<div class="t" style="left:847.1px;top:857.5px;width:60px;text-align:center;font-size:13px;font-family:'Liberation Sans',sans-serif;color:#111;">400</div>
<div class="t" style="left:905.5px;top:857.5px;width:60px;text-align:center;font-size:13px;font-family:'Liberation Sans',sans-serif;color:#111;">500</div>
<div class="t" style="left:964.0px;top:857.5px;width:60px;text-align:center;font-size:13px;font-family:'Liberation Sans',sans-serif;color:#111;">600</div>
<div class="t" style="left:769px;top:886px;width:100px;text-align:center;font-size:13px;letter-spacing:-0.3px;font-family:'Liberation Sans',sans-serif;color:#111;">Stage</div>
<div class="t" style="left:598.5px;top:715px;width:0;height:0;font-family:'Liberation Sans',sans-serif;color:#111;"><div style="position:absolute;white-space:nowrap;font-size:12.4px;transform:translate(-50%,-50%) rotate(-90deg);left:0;top:0">Mises Strain Tr[%]</div></div>
<div class="t" style="left:1050px;top:591px;font-size:12.5px;letter-spacing:-0.65px;font-family:'Liberation Sans',sans-serif;color:#111;">Point Position 0</div>
</div></body></html>
